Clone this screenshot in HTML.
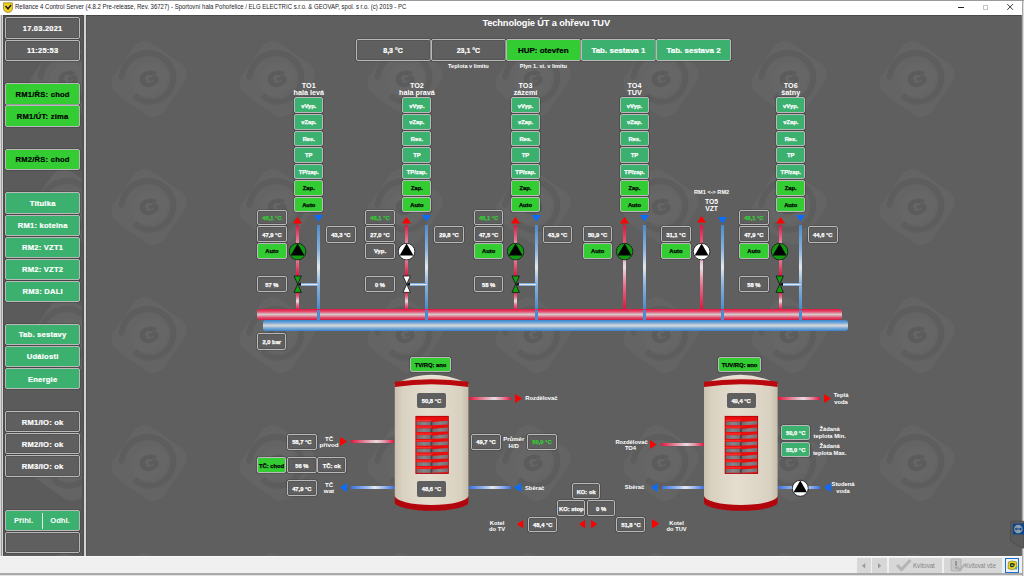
<!DOCTYPE html><html><head><meta charset="utf-8"><style>
html,body{margin:0;padding:0;width:1024px;height:576px;overflow:hidden;background:#5f5f5f;font-family:"Liberation Sans", sans-serif;}
#root{position:relative;width:1024px;height:576px;overflow:hidden;}
</style></head><body><div id="root">
<div style="position:absolute;left:0.00px;top:0.00px;width:1024.00px;height:576.00px;background:#5f5f5f;"></div>
<svg style="position:absolute;left:-29.30000000000001px;top:29px;" width="100" height="100" viewBox="-50 -50 100 100"><g transform="rotate(35)"><rect x="-31" y="-31" width="62" height="62" rx="14" fill="#646464"/></g><path d="M -27.40,-2.40 L -26.99,-4.76 L -26.39,-7.07 L -25.58,-9.31 L -24.59,-11.47 L -23.42,-13.52 L -22.08,-15.46 L -20.57,-17.26 L -18.93,-18.93 L -17.15,-20.43 L -15.25,-21.78 L -13.25,-22.94 L -11.16,-23.93 L -9.00,-24.72 L -6.79,-25.32 L -4.54,-25.73 L -2.27,-25.93 L -0.00,-25.94 L 2.25,-25.75 L 4.47,-25.37 L 6.64,-24.79 L 8.75,-24.03 L 10.77,-23.10 L 12.70,-21.99 L 14.51,-20.72 L 16.20,-19.31 L 17.76,-17.76 L 19.17,-16.09 L 20.42,-14.30 L 21.51,-12.42 L 22.43,-10.46 L 23.17,-8.43 L 23.73,-6.36 L 24.10,-4.25 L 24.29,-2.13 L 24.29,-0.00 L 24.11,2.11 L 23.74,4.19 L 23.20,6.22 L 22.48,8.18 L 21.60,10.07 L 20.56,11.87 L 19.37,13.57 L 18.05,15.14 L 16.59,16.59 L 15.03,17.91 L 13.35,19.07 L 11.60,20.08 L 9.76,20.94 L 7.87,21.62 L 5.93,22.14 L 3.96,22.48 L 1.98,22.65 L 0.00,22.64 L -1.97,22.46 L -3.90,22.12 L -5.79,21.60 L -7.62,20.93 L -9.38,20.10 L -11.05,19.13 L -12.62,18.02" fill="none" stroke="#5d5d5d" stroke-width="6" stroke-linecap="round"/><ellipse cx="0" cy="0" rx="19" ry="16.5" transform="rotate(-20)" fill="#666666"/><text x="0" y="7" text-anchor="middle" font-family="Liberation Sans" font-weight="bold" font-size="21" fill="#5c5c5c" stroke="#5c5c5c" stroke-width="1.6" transform="rotate(-20) scale(1.15,0.95)">G</text></svg>
<svg style="position:absolute;left:98.69999999999999px;top:29px;" width="100" height="100" viewBox="-50 -50 100 100"><g transform="rotate(35)"><rect x="-31" y="-31" width="62" height="62" rx="14" fill="#646464"/></g><path d="M -27.40,-2.40 L -26.99,-4.76 L -26.39,-7.07 L -25.58,-9.31 L -24.59,-11.47 L -23.42,-13.52 L -22.08,-15.46 L -20.57,-17.26 L -18.93,-18.93 L -17.15,-20.43 L -15.25,-21.78 L -13.25,-22.94 L -11.16,-23.93 L -9.00,-24.72 L -6.79,-25.32 L -4.54,-25.73 L -2.27,-25.93 L -0.00,-25.94 L 2.25,-25.75 L 4.47,-25.37 L 6.64,-24.79 L 8.75,-24.03 L 10.77,-23.10 L 12.70,-21.99 L 14.51,-20.72 L 16.20,-19.31 L 17.76,-17.76 L 19.17,-16.09 L 20.42,-14.30 L 21.51,-12.42 L 22.43,-10.46 L 23.17,-8.43 L 23.73,-6.36 L 24.10,-4.25 L 24.29,-2.13 L 24.29,-0.00 L 24.11,2.11 L 23.74,4.19 L 23.20,6.22 L 22.48,8.18 L 21.60,10.07 L 20.56,11.87 L 19.37,13.57 L 18.05,15.14 L 16.59,16.59 L 15.03,17.91 L 13.35,19.07 L 11.60,20.08 L 9.76,20.94 L 7.87,21.62 L 5.93,22.14 L 3.96,22.48 L 1.98,22.65 L 0.00,22.64 L -1.97,22.46 L -3.90,22.12 L -5.79,21.60 L -7.62,20.93 L -9.38,20.10 L -11.05,19.13 L -12.62,18.02" fill="none" stroke="#5d5d5d" stroke-width="6" stroke-linecap="round"/><ellipse cx="0" cy="0" rx="19" ry="16.5" transform="rotate(-20)" fill="#666666"/><text x="0" y="7" text-anchor="middle" font-family="Liberation Sans" font-weight="bold" font-size="21" fill="#5c5c5c" stroke="#5c5c5c" stroke-width="1.6" transform="rotate(-20) scale(1.15,0.95)">G</text></svg>
<svg style="position:absolute;left:226.7px;top:29px;" width="100" height="100" viewBox="-50 -50 100 100"><g transform="rotate(35)"><rect x="-31" y="-31" width="62" height="62" rx="14" fill="#646464"/></g><path d="M -27.40,-2.40 L -26.99,-4.76 L -26.39,-7.07 L -25.58,-9.31 L -24.59,-11.47 L -23.42,-13.52 L -22.08,-15.46 L -20.57,-17.26 L -18.93,-18.93 L -17.15,-20.43 L -15.25,-21.78 L -13.25,-22.94 L -11.16,-23.93 L -9.00,-24.72 L -6.79,-25.32 L -4.54,-25.73 L -2.27,-25.93 L -0.00,-25.94 L 2.25,-25.75 L 4.47,-25.37 L 6.64,-24.79 L 8.75,-24.03 L 10.77,-23.10 L 12.70,-21.99 L 14.51,-20.72 L 16.20,-19.31 L 17.76,-17.76 L 19.17,-16.09 L 20.42,-14.30 L 21.51,-12.42 L 22.43,-10.46 L 23.17,-8.43 L 23.73,-6.36 L 24.10,-4.25 L 24.29,-2.13 L 24.29,-0.00 L 24.11,2.11 L 23.74,4.19 L 23.20,6.22 L 22.48,8.18 L 21.60,10.07 L 20.56,11.87 L 19.37,13.57 L 18.05,15.14 L 16.59,16.59 L 15.03,17.91 L 13.35,19.07 L 11.60,20.08 L 9.76,20.94 L 7.87,21.62 L 5.93,22.14 L 3.96,22.48 L 1.98,22.65 L 0.00,22.64 L -1.97,22.46 L -3.90,22.12 L -5.79,21.60 L -7.62,20.93 L -9.38,20.10 L -11.05,19.13 L -12.62,18.02" fill="none" stroke="#5d5d5d" stroke-width="6" stroke-linecap="round"/><ellipse cx="0" cy="0" rx="19" ry="16.5" transform="rotate(-20)" fill="#666666"/><text x="0" y="7" text-anchor="middle" font-family="Liberation Sans" font-weight="bold" font-size="21" fill="#5c5c5c" stroke="#5c5c5c" stroke-width="1.6" transform="rotate(-20) scale(1.15,0.95)">G</text></svg>
<svg style="position:absolute;left:354.70000000000005px;top:29px;" width="100" height="100" viewBox="-50 -50 100 100"><g transform="rotate(35)"><rect x="-31" y="-31" width="62" height="62" rx="14" fill="#646464"/></g><path d="M -27.40,-2.40 L -26.99,-4.76 L -26.39,-7.07 L -25.58,-9.31 L -24.59,-11.47 L -23.42,-13.52 L -22.08,-15.46 L -20.57,-17.26 L -18.93,-18.93 L -17.15,-20.43 L -15.25,-21.78 L -13.25,-22.94 L -11.16,-23.93 L -9.00,-24.72 L -6.79,-25.32 L -4.54,-25.73 L -2.27,-25.93 L -0.00,-25.94 L 2.25,-25.75 L 4.47,-25.37 L 6.64,-24.79 L 8.75,-24.03 L 10.77,-23.10 L 12.70,-21.99 L 14.51,-20.72 L 16.20,-19.31 L 17.76,-17.76 L 19.17,-16.09 L 20.42,-14.30 L 21.51,-12.42 L 22.43,-10.46 L 23.17,-8.43 L 23.73,-6.36 L 24.10,-4.25 L 24.29,-2.13 L 24.29,-0.00 L 24.11,2.11 L 23.74,4.19 L 23.20,6.22 L 22.48,8.18 L 21.60,10.07 L 20.56,11.87 L 19.37,13.57 L 18.05,15.14 L 16.59,16.59 L 15.03,17.91 L 13.35,19.07 L 11.60,20.08 L 9.76,20.94 L 7.87,21.62 L 5.93,22.14 L 3.96,22.48 L 1.98,22.65 L 0.00,22.64 L -1.97,22.46 L -3.90,22.12 L -5.79,21.60 L -7.62,20.93 L -9.38,20.10 L -11.05,19.13 L -12.62,18.02" fill="none" stroke="#5d5d5d" stroke-width="6" stroke-linecap="round"/><ellipse cx="0" cy="0" rx="19" ry="16.5" transform="rotate(-20)" fill="#666666"/><text x="0" y="7" text-anchor="middle" font-family="Liberation Sans" font-weight="bold" font-size="21" fill="#5c5c5c" stroke="#5c5c5c" stroke-width="1.6" transform="rotate(-20) scale(1.15,0.95)">G</text></svg>
<svg style="position:absolute;left:482.70000000000005px;top:29px;" width="100" height="100" viewBox="-50 -50 100 100"><g transform="rotate(35)"><rect x="-31" y="-31" width="62" height="62" rx="14" fill="#646464"/></g><path d="M -27.40,-2.40 L -26.99,-4.76 L -26.39,-7.07 L -25.58,-9.31 L -24.59,-11.47 L -23.42,-13.52 L -22.08,-15.46 L -20.57,-17.26 L -18.93,-18.93 L -17.15,-20.43 L -15.25,-21.78 L -13.25,-22.94 L -11.16,-23.93 L -9.00,-24.72 L -6.79,-25.32 L -4.54,-25.73 L -2.27,-25.93 L -0.00,-25.94 L 2.25,-25.75 L 4.47,-25.37 L 6.64,-24.79 L 8.75,-24.03 L 10.77,-23.10 L 12.70,-21.99 L 14.51,-20.72 L 16.20,-19.31 L 17.76,-17.76 L 19.17,-16.09 L 20.42,-14.30 L 21.51,-12.42 L 22.43,-10.46 L 23.17,-8.43 L 23.73,-6.36 L 24.10,-4.25 L 24.29,-2.13 L 24.29,-0.00 L 24.11,2.11 L 23.74,4.19 L 23.20,6.22 L 22.48,8.18 L 21.60,10.07 L 20.56,11.87 L 19.37,13.57 L 18.05,15.14 L 16.59,16.59 L 15.03,17.91 L 13.35,19.07 L 11.60,20.08 L 9.76,20.94 L 7.87,21.62 L 5.93,22.14 L 3.96,22.48 L 1.98,22.65 L 0.00,22.64 L -1.97,22.46 L -3.90,22.12 L -5.79,21.60 L -7.62,20.93 L -9.38,20.10 L -11.05,19.13 L -12.62,18.02" fill="none" stroke="#5d5d5d" stroke-width="6" stroke-linecap="round"/><ellipse cx="0" cy="0" rx="19" ry="16.5" transform="rotate(-20)" fill="#666666"/><text x="0" y="7" text-anchor="middle" font-family="Liberation Sans" font-weight="bold" font-size="21" fill="#5c5c5c" stroke="#5c5c5c" stroke-width="1.6" transform="rotate(-20) scale(1.15,0.95)">G</text></svg>
<svg style="position:absolute;left:610.7px;top:29px;" width="100" height="100" viewBox="-50 -50 100 100"><g transform="rotate(35)"><rect x="-31" y="-31" width="62" height="62" rx="14" fill="#646464"/></g><path d="M -27.40,-2.40 L -26.99,-4.76 L -26.39,-7.07 L -25.58,-9.31 L -24.59,-11.47 L -23.42,-13.52 L -22.08,-15.46 L -20.57,-17.26 L -18.93,-18.93 L -17.15,-20.43 L -15.25,-21.78 L -13.25,-22.94 L -11.16,-23.93 L -9.00,-24.72 L -6.79,-25.32 L -4.54,-25.73 L -2.27,-25.93 L -0.00,-25.94 L 2.25,-25.75 L 4.47,-25.37 L 6.64,-24.79 L 8.75,-24.03 L 10.77,-23.10 L 12.70,-21.99 L 14.51,-20.72 L 16.20,-19.31 L 17.76,-17.76 L 19.17,-16.09 L 20.42,-14.30 L 21.51,-12.42 L 22.43,-10.46 L 23.17,-8.43 L 23.73,-6.36 L 24.10,-4.25 L 24.29,-2.13 L 24.29,-0.00 L 24.11,2.11 L 23.74,4.19 L 23.20,6.22 L 22.48,8.18 L 21.60,10.07 L 20.56,11.87 L 19.37,13.57 L 18.05,15.14 L 16.59,16.59 L 15.03,17.91 L 13.35,19.07 L 11.60,20.08 L 9.76,20.94 L 7.87,21.62 L 5.93,22.14 L 3.96,22.48 L 1.98,22.65 L 0.00,22.64 L -1.97,22.46 L -3.90,22.12 L -5.79,21.60 L -7.62,20.93 L -9.38,20.10 L -11.05,19.13 L -12.62,18.02" fill="none" stroke="#5d5d5d" stroke-width="6" stroke-linecap="round"/><ellipse cx="0" cy="0" rx="19" ry="16.5" transform="rotate(-20)" fill="#666666"/><text x="0" y="7" text-anchor="middle" font-family="Liberation Sans" font-weight="bold" font-size="21" fill="#5c5c5c" stroke="#5c5c5c" stroke-width="1.6" transform="rotate(-20) scale(1.15,0.95)">G</text></svg>
<svg style="position:absolute;left:738.7px;top:29px;" width="100" height="100" viewBox="-50 -50 100 100"><g transform="rotate(35)"><rect x="-31" y="-31" width="62" height="62" rx="14" fill="#646464"/></g><path d="M -27.40,-2.40 L -26.99,-4.76 L -26.39,-7.07 L -25.58,-9.31 L -24.59,-11.47 L -23.42,-13.52 L -22.08,-15.46 L -20.57,-17.26 L -18.93,-18.93 L -17.15,-20.43 L -15.25,-21.78 L -13.25,-22.94 L -11.16,-23.93 L -9.00,-24.72 L -6.79,-25.32 L -4.54,-25.73 L -2.27,-25.93 L -0.00,-25.94 L 2.25,-25.75 L 4.47,-25.37 L 6.64,-24.79 L 8.75,-24.03 L 10.77,-23.10 L 12.70,-21.99 L 14.51,-20.72 L 16.20,-19.31 L 17.76,-17.76 L 19.17,-16.09 L 20.42,-14.30 L 21.51,-12.42 L 22.43,-10.46 L 23.17,-8.43 L 23.73,-6.36 L 24.10,-4.25 L 24.29,-2.13 L 24.29,-0.00 L 24.11,2.11 L 23.74,4.19 L 23.20,6.22 L 22.48,8.18 L 21.60,10.07 L 20.56,11.87 L 19.37,13.57 L 18.05,15.14 L 16.59,16.59 L 15.03,17.91 L 13.35,19.07 L 11.60,20.08 L 9.76,20.94 L 7.87,21.62 L 5.93,22.14 L 3.96,22.48 L 1.98,22.65 L 0.00,22.64 L -1.97,22.46 L -3.90,22.12 L -5.79,21.60 L -7.62,20.93 L -9.38,20.10 L -11.05,19.13 L -12.62,18.02" fill="none" stroke="#5d5d5d" stroke-width="6" stroke-linecap="round"/><ellipse cx="0" cy="0" rx="19" ry="16.5" transform="rotate(-20)" fill="#666666"/><text x="0" y="7" text-anchor="middle" font-family="Liberation Sans" font-weight="bold" font-size="21" fill="#5c5c5c" stroke="#5c5c5c" stroke-width="1.6" transform="rotate(-20) scale(1.15,0.95)">G</text></svg>
<svg style="position:absolute;left:866.7px;top:29px;" width="100" height="100" viewBox="-50 -50 100 100"><g transform="rotate(35)"><rect x="-31" y="-31" width="62" height="62" rx="14" fill="#646464"/></g><path d="M -27.40,-2.40 L -26.99,-4.76 L -26.39,-7.07 L -25.58,-9.31 L -24.59,-11.47 L -23.42,-13.52 L -22.08,-15.46 L -20.57,-17.26 L -18.93,-18.93 L -17.15,-20.43 L -15.25,-21.78 L -13.25,-22.94 L -11.16,-23.93 L -9.00,-24.72 L -6.79,-25.32 L -4.54,-25.73 L -2.27,-25.93 L -0.00,-25.94 L 2.25,-25.75 L 4.47,-25.37 L 6.64,-24.79 L 8.75,-24.03 L 10.77,-23.10 L 12.70,-21.99 L 14.51,-20.72 L 16.20,-19.31 L 17.76,-17.76 L 19.17,-16.09 L 20.42,-14.30 L 21.51,-12.42 L 22.43,-10.46 L 23.17,-8.43 L 23.73,-6.36 L 24.10,-4.25 L 24.29,-2.13 L 24.29,-0.00 L 24.11,2.11 L 23.74,4.19 L 23.20,6.22 L 22.48,8.18 L 21.60,10.07 L 20.56,11.87 L 19.37,13.57 L 18.05,15.14 L 16.59,16.59 L 15.03,17.91 L 13.35,19.07 L 11.60,20.08 L 9.76,20.94 L 7.87,21.62 L 5.93,22.14 L 3.96,22.48 L 1.98,22.65 L 0.00,22.64 L -1.97,22.46 L -3.90,22.12 L -5.79,21.60 L -7.62,20.93 L -9.38,20.10 L -11.05,19.13 L -12.62,18.02" fill="none" stroke="#5d5d5d" stroke-width="6" stroke-linecap="round"/><ellipse cx="0" cy="0" rx="19" ry="16.5" transform="rotate(-20)" fill="#666666"/><text x="0" y="7" text-anchor="middle" font-family="Liberation Sans" font-weight="bold" font-size="21" fill="#5c5c5c" stroke="#5c5c5c" stroke-width="1.6" transform="rotate(-20) scale(1.15,0.95)">G</text></svg>
<svg style="position:absolute;left:-29.30000000000001px;top:157px;" width="100" height="100" viewBox="-50 -50 100 100"><g transform="rotate(35)"><rect x="-31" y="-31" width="62" height="62" rx="14" fill="#646464"/></g><path d="M -27.40,-2.40 L -26.99,-4.76 L -26.39,-7.07 L -25.58,-9.31 L -24.59,-11.47 L -23.42,-13.52 L -22.08,-15.46 L -20.57,-17.26 L -18.93,-18.93 L -17.15,-20.43 L -15.25,-21.78 L -13.25,-22.94 L -11.16,-23.93 L -9.00,-24.72 L -6.79,-25.32 L -4.54,-25.73 L -2.27,-25.93 L -0.00,-25.94 L 2.25,-25.75 L 4.47,-25.37 L 6.64,-24.79 L 8.75,-24.03 L 10.77,-23.10 L 12.70,-21.99 L 14.51,-20.72 L 16.20,-19.31 L 17.76,-17.76 L 19.17,-16.09 L 20.42,-14.30 L 21.51,-12.42 L 22.43,-10.46 L 23.17,-8.43 L 23.73,-6.36 L 24.10,-4.25 L 24.29,-2.13 L 24.29,-0.00 L 24.11,2.11 L 23.74,4.19 L 23.20,6.22 L 22.48,8.18 L 21.60,10.07 L 20.56,11.87 L 19.37,13.57 L 18.05,15.14 L 16.59,16.59 L 15.03,17.91 L 13.35,19.07 L 11.60,20.08 L 9.76,20.94 L 7.87,21.62 L 5.93,22.14 L 3.96,22.48 L 1.98,22.65 L 0.00,22.64 L -1.97,22.46 L -3.90,22.12 L -5.79,21.60 L -7.62,20.93 L -9.38,20.10 L -11.05,19.13 L -12.62,18.02" fill="none" stroke="#5d5d5d" stroke-width="6" stroke-linecap="round"/><ellipse cx="0" cy="0" rx="19" ry="16.5" transform="rotate(-20)" fill="#666666"/><text x="0" y="7" text-anchor="middle" font-family="Liberation Sans" font-weight="bold" font-size="21" fill="#5c5c5c" stroke="#5c5c5c" stroke-width="1.6" transform="rotate(-20) scale(1.15,0.95)">G</text></svg>
<svg style="position:absolute;left:98.69999999999999px;top:157px;" width="100" height="100" viewBox="-50 -50 100 100"><g transform="rotate(35)"><rect x="-31" y="-31" width="62" height="62" rx="14" fill="#646464"/></g><path d="M -27.40,-2.40 L -26.99,-4.76 L -26.39,-7.07 L -25.58,-9.31 L -24.59,-11.47 L -23.42,-13.52 L -22.08,-15.46 L -20.57,-17.26 L -18.93,-18.93 L -17.15,-20.43 L -15.25,-21.78 L -13.25,-22.94 L -11.16,-23.93 L -9.00,-24.72 L -6.79,-25.32 L -4.54,-25.73 L -2.27,-25.93 L -0.00,-25.94 L 2.25,-25.75 L 4.47,-25.37 L 6.64,-24.79 L 8.75,-24.03 L 10.77,-23.10 L 12.70,-21.99 L 14.51,-20.72 L 16.20,-19.31 L 17.76,-17.76 L 19.17,-16.09 L 20.42,-14.30 L 21.51,-12.42 L 22.43,-10.46 L 23.17,-8.43 L 23.73,-6.36 L 24.10,-4.25 L 24.29,-2.13 L 24.29,-0.00 L 24.11,2.11 L 23.74,4.19 L 23.20,6.22 L 22.48,8.18 L 21.60,10.07 L 20.56,11.87 L 19.37,13.57 L 18.05,15.14 L 16.59,16.59 L 15.03,17.91 L 13.35,19.07 L 11.60,20.08 L 9.76,20.94 L 7.87,21.62 L 5.93,22.14 L 3.96,22.48 L 1.98,22.65 L 0.00,22.64 L -1.97,22.46 L -3.90,22.12 L -5.79,21.60 L -7.62,20.93 L -9.38,20.10 L -11.05,19.13 L -12.62,18.02" fill="none" stroke="#5d5d5d" stroke-width="6" stroke-linecap="round"/><ellipse cx="0" cy="0" rx="19" ry="16.5" transform="rotate(-20)" fill="#666666"/><text x="0" y="7" text-anchor="middle" font-family="Liberation Sans" font-weight="bold" font-size="21" fill="#5c5c5c" stroke="#5c5c5c" stroke-width="1.6" transform="rotate(-20) scale(1.15,0.95)">G</text></svg>
<svg style="position:absolute;left:226.7px;top:157px;" width="100" height="100" viewBox="-50 -50 100 100"><g transform="rotate(35)"><rect x="-31" y="-31" width="62" height="62" rx="14" fill="#646464"/></g><path d="M -27.40,-2.40 L -26.99,-4.76 L -26.39,-7.07 L -25.58,-9.31 L -24.59,-11.47 L -23.42,-13.52 L -22.08,-15.46 L -20.57,-17.26 L -18.93,-18.93 L -17.15,-20.43 L -15.25,-21.78 L -13.25,-22.94 L -11.16,-23.93 L -9.00,-24.72 L -6.79,-25.32 L -4.54,-25.73 L -2.27,-25.93 L -0.00,-25.94 L 2.25,-25.75 L 4.47,-25.37 L 6.64,-24.79 L 8.75,-24.03 L 10.77,-23.10 L 12.70,-21.99 L 14.51,-20.72 L 16.20,-19.31 L 17.76,-17.76 L 19.17,-16.09 L 20.42,-14.30 L 21.51,-12.42 L 22.43,-10.46 L 23.17,-8.43 L 23.73,-6.36 L 24.10,-4.25 L 24.29,-2.13 L 24.29,-0.00 L 24.11,2.11 L 23.74,4.19 L 23.20,6.22 L 22.48,8.18 L 21.60,10.07 L 20.56,11.87 L 19.37,13.57 L 18.05,15.14 L 16.59,16.59 L 15.03,17.91 L 13.35,19.07 L 11.60,20.08 L 9.76,20.94 L 7.87,21.62 L 5.93,22.14 L 3.96,22.48 L 1.98,22.65 L 0.00,22.64 L -1.97,22.46 L -3.90,22.12 L -5.79,21.60 L -7.62,20.93 L -9.38,20.10 L -11.05,19.13 L -12.62,18.02" fill="none" stroke="#5d5d5d" stroke-width="6" stroke-linecap="round"/><ellipse cx="0" cy="0" rx="19" ry="16.5" transform="rotate(-20)" fill="#666666"/><text x="0" y="7" text-anchor="middle" font-family="Liberation Sans" font-weight="bold" font-size="21" fill="#5c5c5c" stroke="#5c5c5c" stroke-width="1.6" transform="rotate(-20) scale(1.15,0.95)">G</text></svg>
<svg style="position:absolute;left:354.70000000000005px;top:157px;" width="100" height="100" viewBox="-50 -50 100 100"><g transform="rotate(35)"><rect x="-31" y="-31" width="62" height="62" rx="14" fill="#646464"/></g><path d="M -27.40,-2.40 L -26.99,-4.76 L -26.39,-7.07 L -25.58,-9.31 L -24.59,-11.47 L -23.42,-13.52 L -22.08,-15.46 L -20.57,-17.26 L -18.93,-18.93 L -17.15,-20.43 L -15.25,-21.78 L -13.25,-22.94 L -11.16,-23.93 L -9.00,-24.72 L -6.79,-25.32 L -4.54,-25.73 L -2.27,-25.93 L -0.00,-25.94 L 2.25,-25.75 L 4.47,-25.37 L 6.64,-24.79 L 8.75,-24.03 L 10.77,-23.10 L 12.70,-21.99 L 14.51,-20.72 L 16.20,-19.31 L 17.76,-17.76 L 19.17,-16.09 L 20.42,-14.30 L 21.51,-12.42 L 22.43,-10.46 L 23.17,-8.43 L 23.73,-6.36 L 24.10,-4.25 L 24.29,-2.13 L 24.29,-0.00 L 24.11,2.11 L 23.74,4.19 L 23.20,6.22 L 22.48,8.18 L 21.60,10.07 L 20.56,11.87 L 19.37,13.57 L 18.05,15.14 L 16.59,16.59 L 15.03,17.91 L 13.35,19.07 L 11.60,20.08 L 9.76,20.94 L 7.87,21.62 L 5.93,22.14 L 3.96,22.48 L 1.98,22.65 L 0.00,22.64 L -1.97,22.46 L -3.90,22.12 L -5.79,21.60 L -7.62,20.93 L -9.38,20.10 L -11.05,19.13 L -12.62,18.02" fill="none" stroke="#5d5d5d" stroke-width="6" stroke-linecap="round"/><ellipse cx="0" cy="0" rx="19" ry="16.5" transform="rotate(-20)" fill="#666666"/><text x="0" y="7" text-anchor="middle" font-family="Liberation Sans" font-weight="bold" font-size="21" fill="#5c5c5c" stroke="#5c5c5c" stroke-width="1.6" transform="rotate(-20) scale(1.15,0.95)">G</text></svg>
<svg style="position:absolute;left:482.70000000000005px;top:157px;" width="100" height="100" viewBox="-50 -50 100 100"><g transform="rotate(35)"><rect x="-31" y="-31" width="62" height="62" rx="14" fill="#646464"/></g><path d="M -27.40,-2.40 L -26.99,-4.76 L -26.39,-7.07 L -25.58,-9.31 L -24.59,-11.47 L -23.42,-13.52 L -22.08,-15.46 L -20.57,-17.26 L -18.93,-18.93 L -17.15,-20.43 L -15.25,-21.78 L -13.25,-22.94 L -11.16,-23.93 L -9.00,-24.72 L -6.79,-25.32 L -4.54,-25.73 L -2.27,-25.93 L -0.00,-25.94 L 2.25,-25.75 L 4.47,-25.37 L 6.64,-24.79 L 8.75,-24.03 L 10.77,-23.10 L 12.70,-21.99 L 14.51,-20.72 L 16.20,-19.31 L 17.76,-17.76 L 19.17,-16.09 L 20.42,-14.30 L 21.51,-12.42 L 22.43,-10.46 L 23.17,-8.43 L 23.73,-6.36 L 24.10,-4.25 L 24.29,-2.13 L 24.29,-0.00 L 24.11,2.11 L 23.74,4.19 L 23.20,6.22 L 22.48,8.18 L 21.60,10.07 L 20.56,11.87 L 19.37,13.57 L 18.05,15.14 L 16.59,16.59 L 15.03,17.91 L 13.35,19.07 L 11.60,20.08 L 9.76,20.94 L 7.87,21.62 L 5.93,22.14 L 3.96,22.48 L 1.98,22.65 L 0.00,22.64 L -1.97,22.46 L -3.90,22.12 L -5.79,21.60 L -7.62,20.93 L -9.38,20.10 L -11.05,19.13 L -12.62,18.02" fill="none" stroke="#5d5d5d" stroke-width="6" stroke-linecap="round"/><ellipse cx="0" cy="0" rx="19" ry="16.5" transform="rotate(-20)" fill="#666666"/><text x="0" y="7" text-anchor="middle" font-family="Liberation Sans" font-weight="bold" font-size="21" fill="#5c5c5c" stroke="#5c5c5c" stroke-width="1.6" transform="rotate(-20) scale(1.15,0.95)">G</text></svg>
<svg style="position:absolute;left:610.7px;top:157px;" width="100" height="100" viewBox="-50 -50 100 100"><g transform="rotate(35)"><rect x="-31" y="-31" width="62" height="62" rx="14" fill="#646464"/></g><path d="M -27.40,-2.40 L -26.99,-4.76 L -26.39,-7.07 L -25.58,-9.31 L -24.59,-11.47 L -23.42,-13.52 L -22.08,-15.46 L -20.57,-17.26 L -18.93,-18.93 L -17.15,-20.43 L -15.25,-21.78 L -13.25,-22.94 L -11.16,-23.93 L -9.00,-24.72 L -6.79,-25.32 L -4.54,-25.73 L -2.27,-25.93 L -0.00,-25.94 L 2.25,-25.75 L 4.47,-25.37 L 6.64,-24.79 L 8.75,-24.03 L 10.77,-23.10 L 12.70,-21.99 L 14.51,-20.72 L 16.20,-19.31 L 17.76,-17.76 L 19.17,-16.09 L 20.42,-14.30 L 21.51,-12.42 L 22.43,-10.46 L 23.17,-8.43 L 23.73,-6.36 L 24.10,-4.25 L 24.29,-2.13 L 24.29,-0.00 L 24.11,2.11 L 23.74,4.19 L 23.20,6.22 L 22.48,8.18 L 21.60,10.07 L 20.56,11.87 L 19.37,13.57 L 18.05,15.14 L 16.59,16.59 L 15.03,17.91 L 13.35,19.07 L 11.60,20.08 L 9.76,20.94 L 7.87,21.62 L 5.93,22.14 L 3.96,22.48 L 1.98,22.65 L 0.00,22.64 L -1.97,22.46 L -3.90,22.12 L -5.79,21.60 L -7.62,20.93 L -9.38,20.10 L -11.05,19.13 L -12.62,18.02" fill="none" stroke="#5d5d5d" stroke-width="6" stroke-linecap="round"/><ellipse cx="0" cy="0" rx="19" ry="16.5" transform="rotate(-20)" fill="#666666"/><text x="0" y="7" text-anchor="middle" font-family="Liberation Sans" font-weight="bold" font-size="21" fill="#5c5c5c" stroke="#5c5c5c" stroke-width="1.6" transform="rotate(-20) scale(1.15,0.95)">G</text></svg>
<svg style="position:absolute;left:738.7px;top:157px;" width="100" height="100" viewBox="-50 -50 100 100"><g transform="rotate(35)"><rect x="-31" y="-31" width="62" height="62" rx="14" fill="#646464"/></g><path d="M -27.40,-2.40 L -26.99,-4.76 L -26.39,-7.07 L -25.58,-9.31 L -24.59,-11.47 L -23.42,-13.52 L -22.08,-15.46 L -20.57,-17.26 L -18.93,-18.93 L -17.15,-20.43 L -15.25,-21.78 L -13.25,-22.94 L -11.16,-23.93 L -9.00,-24.72 L -6.79,-25.32 L -4.54,-25.73 L -2.27,-25.93 L -0.00,-25.94 L 2.25,-25.75 L 4.47,-25.37 L 6.64,-24.79 L 8.75,-24.03 L 10.77,-23.10 L 12.70,-21.99 L 14.51,-20.72 L 16.20,-19.31 L 17.76,-17.76 L 19.17,-16.09 L 20.42,-14.30 L 21.51,-12.42 L 22.43,-10.46 L 23.17,-8.43 L 23.73,-6.36 L 24.10,-4.25 L 24.29,-2.13 L 24.29,-0.00 L 24.11,2.11 L 23.74,4.19 L 23.20,6.22 L 22.48,8.18 L 21.60,10.07 L 20.56,11.87 L 19.37,13.57 L 18.05,15.14 L 16.59,16.59 L 15.03,17.91 L 13.35,19.07 L 11.60,20.08 L 9.76,20.94 L 7.87,21.62 L 5.93,22.14 L 3.96,22.48 L 1.98,22.65 L 0.00,22.64 L -1.97,22.46 L -3.90,22.12 L -5.79,21.60 L -7.62,20.93 L -9.38,20.10 L -11.05,19.13 L -12.62,18.02" fill="none" stroke="#5d5d5d" stroke-width="6" stroke-linecap="round"/><ellipse cx="0" cy="0" rx="19" ry="16.5" transform="rotate(-20)" fill="#666666"/><text x="0" y="7" text-anchor="middle" font-family="Liberation Sans" font-weight="bold" font-size="21" fill="#5c5c5c" stroke="#5c5c5c" stroke-width="1.6" transform="rotate(-20) scale(1.15,0.95)">G</text></svg>
<svg style="position:absolute;left:866.7px;top:157px;" width="100" height="100" viewBox="-50 -50 100 100"><g transform="rotate(35)"><rect x="-31" y="-31" width="62" height="62" rx="14" fill="#646464"/></g><path d="M -27.40,-2.40 L -26.99,-4.76 L -26.39,-7.07 L -25.58,-9.31 L -24.59,-11.47 L -23.42,-13.52 L -22.08,-15.46 L -20.57,-17.26 L -18.93,-18.93 L -17.15,-20.43 L -15.25,-21.78 L -13.25,-22.94 L -11.16,-23.93 L -9.00,-24.72 L -6.79,-25.32 L -4.54,-25.73 L -2.27,-25.93 L -0.00,-25.94 L 2.25,-25.75 L 4.47,-25.37 L 6.64,-24.79 L 8.75,-24.03 L 10.77,-23.10 L 12.70,-21.99 L 14.51,-20.72 L 16.20,-19.31 L 17.76,-17.76 L 19.17,-16.09 L 20.42,-14.30 L 21.51,-12.42 L 22.43,-10.46 L 23.17,-8.43 L 23.73,-6.36 L 24.10,-4.25 L 24.29,-2.13 L 24.29,-0.00 L 24.11,2.11 L 23.74,4.19 L 23.20,6.22 L 22.48,8.18 L 21.60,10.07 L 20.56,11.87 L 19.37,13.57 L 18.05,15.14 L 16.59,16.59 L 15.03,17.91 L 13.35,19.07 L 11.60,20.08 L 9.76,20.94 L 7.87,21.62 L 5.93,22.14 L 3.96,22.48 L 1.98,22.65 L 0.00,22.64 L -1.97,22.46 L -3.90,22.12 L -5.79,21.60 L -7.62,20.93 L -9.38,20.10 L -11.05,19.13 L -12.62,18.02" fill="none" stroke="#5d5d5d" stroke-width="6" stroke-linecap="round"/><ellipse cx="0" cy="0" rx="19" ry="16.5" transform="rotate(-20)" fill="#666666"/><text x="0" y="7" text-anchor="middle" font-family="Liberation Sans" font-weight="bold" font-size="21" fill="#5c5c5c" stroke="#5c5c5c" stroke-width="1.6" transform="rotate(-20) scale(1.15,0.95)">G</text></svg>
<svg style="position:absolute;left:-29.30000000000001px;top:285px;" width="100" height="100" viewBox="-50 -50 100 100"><g transform="rotate(35)"><rect x="-31" y="-31" width="62" height="62" rx="14" fill="#646464"/></g><path d="M -27.40,-2.40 L -26.99,-4.76 L -26.39,-7.07 L -25.58,-9.31 L -24.59,-11.47 L -23.42,-13.52 L -22.08,-15.46 L -20.57,-17.26 L -18.93,-18.93 L -17.15,-20.43 L -15.25,-21.78 L -13.25,-22.94 L -11.16,-23.93 L -9.00,-24.72 L -6.79,-25.32 L -4.54,-25.73 L -2.27,-25.93 L -0.00,-25.94 L 2.25,-25.75 L 4.47,-25.37 L 6.64,-24.79 L 8.75,-24.03 L 10.77,-23.10 L 12.70,-21.99 L 14.51,-20.72 L 16.20,-19.31 L 17.76,-17.76 L 19.17,-16.09 L 20.42,-14.30 L 21.51,-12.42 L 22.43,-10.46 L 23.17,-8.43 L 23.73,-6.36 L 24.10,-4.25 L 24.29,-2.13 L 24.29,-0.00 L 24.11,2.11 L 23.74,4.19 L 23.20,6.22 L 22.48,8.18 L 21.60,10.07 L 20.56,11.87 L 19.37,13.57 L 18.05,15.14 L 16.59,16.59 L 15.03,17.91 L 13.35,19.07 L 11.60,20.08 L 9.76,20.94 L 7.87,21.62 L 5.93,22.14 L 3.96,22.48 L 1.98,22.65 L 0.00,22.64 L -1.97,22.46 L -3.90,22.12 L -5.79,21.60 L -7.62,20.93 L -9.38,20.10 L -11.05,19.13 L -12.62,18.02" fill="none" stroke="#5d5d5d" stroke-width="6" stroke-linecap="round"/><ellipse cx="0" cy="0" rx="19" ry="16.5" transform="rotate(-20)" fill="#666666"/><text x="0" y="7" text-anchor="middle" font-family="Liberation Sans" font-weight="bold" font-size="21" fill="#5c5c5c" stroke="#5c5c5c" stroke-width="1.6" transform="rotate(-20) scale(1.15,0.95)">G</text></svg>
<svg style="position:absolute;left:98.69999999999999px;top:285px;" width="100" height="100" viewBox="-50 -50 100 100"><g transform="rotate(35)"><rect x="-31" y="-31" width="62" height="62" rx="14" fill="#646464"/></g><path d="M -27.40,-2.40 L -26.99,-4.76 L -26.39,-7.07 L -25.58,-9.31 L -24.59,-11.47 L -23.42,-13.52 L -22.08,-15.46 L -20.57,-17.26 L -18.93,-18.93 L -17.15,-20.43 L -15.25,-21.78 L -13.25,-22.94 L -11.16,-23.93 L -9.00,-24.72 L -6.79,-25.32 L -4.54,-25.73 L -2.27,-25.93 L -0.00,-25.94 L 2.25,-25.75 L 4.47,-25.37 L 6.64,-24.79 L 8.75,-24.03 L 10.77,-23.10 L 12.70,-21.99 L 14.51,-20.72 L 16.20,-19.31 L 17.76,-17.76 L 19.17,-16.09 L 20.42,-14.30 L 21.51,-12.42 L 22.43,-10.46 L 23.17,-8.43 L 23.73,-6.36 L 24.10,-4.25 L 24.29,-2.13 L 24.29,-0.00 L 24.11,2.11 L 23.74,4.19 L 23.20,6.22 L 22.48,8.18 L 21.60,10.07 L 20.56,11.87 L 19.37,13.57 L 18.05,15.14 L 16.59,16.59 L 15.03,17.91 L 13.35,19.07 L 11.60,20.08 L 9.76,20.94 L 7.87,21.62 L 5.93,22.14 L 3.96,22.48 L 1.98,22.65 L 0.00,22.64 L -1.97,22.46 L -3.90,22.12 L -5.79,21.60 L -7.62,20.93 L -9.38,20.10 L -11.05,19.13 L -12.62,18.02" fill="none" stroke="#5d5d5d" stroke-width="6" stroke-linecap="round"/><ellipse cx="0" cy="0" rx="19" ry="16.5" transform="rotate(-20)" fill="#666666"/><text x="0" y="7" text-anchor="middle" font-family="Liberation Sans" font-weight="bold" font-size="21" fill="#5c5c5c" stroke="#5c5c5c" stroke-width="1.6" transform="rotate(-20) scale(1.15,0.95)">G</text></svg>
<svg style="position:absolute;left:226.7px;top:285px;" width="100" height="100" viewBox="-50 -50 100 100"><g transform="rotate(35)"><rect x="-31" y="-31" width="62" height="62" rx="14" fill="#646464"/></g><path d="M -27.40,-2.40 L -26.99,-4.76 L -26.39,-7.07 L -25.58,-9.31 L -24.59,-11.47 L -23.42,-13.52 L -22.08,-15.46 L -20.57,-17.26 L -18.93,-18.93 L -17.15,-20.43 L -15.25,-21.78 L -13.25,-22.94 L -11.16,-23.93 L -9.00,-24.72 L -6.79,-25.32 L -4.54,-25.73 L -2.27,-25.93 L -0.00,-25.94 L 2.25,-25.75 L 4.47,-25.37 L 6.64,-24.79 L 8.75,-24.03 L 10.77,-23.10 L 12.70,-21.99 L 14.51,-20.72 L 16.20,-19.31 L 17.76,-17.76 L 19.17,-16.09 L 20.42,-14.30 L 21.51,-12.42 L 22.43,-10.46 L 23.17,-8.43 L 23.73,-6.36 L 24.10,-4.25 L 24.29,-2.13 L 24.29,-0.00 L 24.11,2.11 L 23.74,4.19 L 23.20,6.22 L 22.48,8.18 L 21.60,10.07 L 20.56,11.87 L 19.37,13.57 L 18.05,15.14 L 16.59,16.59 L 15.03,17.91 L 13.35,19.07 L 11.60,20.08 L 9.76,20.94 L 7.87,21.62 L 5.93,22.14 L 3.96,22.48 L 1.98,22.65 L 0.00,22.64 L -1.97,22.46 L -3.90,22.12 L -5.79,21.60 L -7.62,20.93 L -9.38,20.10 L -11.05,19.13 L -12.62,18.02" fill="none" stroke="#5d5d5d" stroke-width="6" stroke-linecap="round"/><ellipse cx="0" cy="0" rx="19" ry="16.5" transform="rotate(-20)" fill="#666666"/><text x="0" y="7" text-anchor="middle" font-family="Liberation Sans" font-weight="bold" font-size="21" fill="#5c5c5c" stroke="#5c5c5c" stroke-width="1.6" transform="rotate(-20) scale(1.15,0.95)">G</text></svg>
<svg style="position:absolute;left:354.70000000000005px;top:285px;" width="100" height="100" viewBox="-50 -50 100 100"><g transform="rotate(35)"><rect x="-31" y="-31" width="62" height="62" rx="14" fill="#646464"/></g><path d="M -27.40,-2.40 L -26.99,-4.76 L -26.39,-7.07 L -25.58,-9.31 L -24.59,-11.47 L -23.42,-13.52 L -22.08,-15.46 L -20.57,-17.26 L -18.93,-18.93 L -17.15,-20.43 L -15.25,-21.78 L -13.25,-22.94 L -11.16,-23.93 L -9.00,-24.72 L -6.79,-25.32 L -4.54,-25.73 L -2.27,-25.93 L -0.00,-25.94 L 2.25,-25.75 L 4.47,-25.37 L 6.64,-24.79 L 8.75,-24.03 L 10.77,-23.10 L 12.70,-21.99 L 14.51,-20.72 L 16.20,-19.31 L 17.76,-17.76 L 19.17,-16.09 L 20.42,-14.30 L 21.51,-12.42 L 22.43,-10.46 L 23.17,-8.43 L 23.73,-6.36 L 24.10,-4.25 L 24.29,-2.13 L 24.29,-0.00 L 24.11,2.11 L 23.74,4.19 L 23.20,6.22 L 22.48,8.18 L 21.60,10.07 L 20.56,11.87 L 19.37,13.57 L 18.05,15.14 L 16.59,16.59 L 15.03,17.91 L 13.35,19.07 L 11.60,20.08 L 9.76,20.94 L 7.87,21.62 L 5.93,22.14 L 3.96,22.48 L 1.98,22.65 L 0.00,22.64 L -1.97,22.46 L -3.90,22.12 L -5.79,21.60 L -7.62,20.93 L -9.38,20.10 L -11.05,19.13 L -12.62,18.02" fill="none" stroke="#5d5d5d" stroke-width="6" stroke-linecap="round"/><ellipse cx="0" cy="0" rx="19" ry="16.5" transform="rotate(-20)" fill="#666666"/><text x="0" y="7" text-anchor="middle" font-family="Liberation Sans" font-weight="bold" font-size="21" fill="#5c5c5c" stroke="#5c5c5c" stroke-width="1.6" transform="rotate(-20) scale(1.15,0.95)">G</text></svg>
<svg style="position:absolute;left:482.70000000000005px;top:285px;" width="100" height="100" viewBox="-50 -50 100 100"><g transform="rotate(35)"><rect x="-31" y="-31" width="62" height="62" rx="14" fill="#646464"/></g><path d="M -27.40,-2.40 L -26.99,-4.76 L -26.39,-7.07 L -25.58,-9.31 L -24.59,-11.47 L -23.42,-13.52 L -22.08,-15.46 L -20.57,-17.26 L -18.93,-18.93 L -17.15,-20.43 L -15.25,-21.78 L -13.25,-22.94 L -11.16,-23.93 L -9.00,-24.72 L -6.79,-25.32 L -4.54,-25.73 L -2.27,-25.93 L -0.00,-25.94 L 2.25,-25.75 L 4.47,-25.37 L 6.64,-24.79 L 8.75,-24.03 L 10.77,-23.10 L 12.70,-21.99 L 14.51,-20.72 L 16.20,-19.31 L 17.76,-17.76 L 19.17,-16.09 L 20.42,-14.30 L 21.51,-12.42 L 22.43,-10.46 L 23.17,-8.43 L 23.73,-6.36 L 24.10,-4.25 L 24.29,-2.13 L 24.29,-0.00 L 24.11,2.11 L 23.74,4.19 L 23.20,6.22 L 22.48,8.18 L 21.60,10.07 L 20.56,11.87 L 19.37,13.57 L 18.05,15.14 L 16.59,16.59 L 15.03,17.91 L 13.35,19.07 L 11.60,20.08 L 9.76,20.94 L 7.87,21.62 L 5.93,22.14 L 3.96,22.48 L 1.98,22.65 L 0.00,22.64 L -1.97,22.46 L -3.90,22.12 L -5.79,21.60 L -7.62,20.93 L -9.38,20.10 L -11.05,19.13 L -12.62,18.02" fill="none" stroke="#5d5d5d" stroke-width="6" stroke-linecap="round"/><ellipse cx="0" cy="0" rx="19" ry="16.5" transform="rotate(-20)" fill="#666666"/><text x="0" y="7" text-anchor="middle" font-family="Liberation Sans" font-weight="bold" font-size="21" fill="#5c5c5c" stroke="#5c5c5c" stroke-width="1.6" transform="rotate(-20) scale(1.15,0.95)">G</text></svg>
<svg style="position:absolute;left:610.7px;top:285px;" width="100" height="100" viewBox="-50 -50 100 100"><g transform="rotate(35)"><rect x="-31" y="-31" width="62" height="62" rx="14" fill="#646464"/></g><path d="M -27.40,-2.40 L -26.99,-4.76 L -26.39,-7.07 L -25.58,-9.31 L -24.59,-11.47 L -23.42,-13.52 L -22.08,-15.46 L -20.57,-17.26 L -18.93,-18.93 L -17.15,-20.43 L -15.25,-21.78 L -13.25,-22.94 L -11.16,-23.93 L -9.00,-24.72 L -6.79,-25.32 L -4.54,-25.73 L -2.27,-25.93 L -0.00,-25.94 L 2.25,-25.75 L 4.47,-25.37 L 6.64,-24.79 L 8.75,-24.03 L 10.77,-23.10 L 12.70,-21.99 L 14.51,-20.72 L 16.20,-19.31 L 17.76,-17.76 L 19.17,-16.09 L 20.42,-14.30 L 21.51,-12.42 L 22.43,-10.46 L 23.17,-8.43 L 23.73,-6.36 L 24.10,-4.25 L 24.29,-2.13 L 24.29,-0.00 L 24.11,2.11 L 23.74,4.19 L 23.20,6.22 L 22.48,8.18 L 21.60,10.07 L 20.56,11.87 L 19.37,13.57 L 18.05,15.14 L 16.59,16.59 L 15.03,17.91 L 13.35,19.07 L 11.60,20.08 L 9.76,20.94 L 7.87,21.62 L 5.93,22.14 L 3.96,22.48 L 1.98,22.65 L 0.00,22.64 L -1.97,22.46 L -3.90,22.12 L -5.79,21.60 L -7.62,20.93 L -9.38,20.10 L -11.05,19.13 L -12.62,18.02" fill="none" stroke="#5d5d5d" stroke-width="6" stroke-linecap="round"/><ellipse cx="0" cy="0" rx="19" ry="16.5" transform="rotate(-20)" fill="#666666"/><text x="0" y="7" text-anchor="middle" font-family="Liberation Sans" font-weight="bold" font-size="21" fill="#5c5c5c" stroke="#5c5c5c" stroke-width="1.6" transform="rotate(-20) scale(1.15,0.95)">G</text></svg>
<svg style="position:absolute;left:738.7px;top:285px;" width="100" height="100" viewBox="-50 -50 100 100"><g transform="rotate(35)"><rect x="-31" y="-31" width="62" height="62" rx="14" fill="#646464"/></g><path d="M -27.40,-2.40 L -26.99,-4.76 L -26.39,-7.07 L -25.58,-9.31 L -24.59,-11.47 L -23.42,-13.52 L -22.08,-15.46 L -20.57,-17.26 L -18.93,-18.93 L -17.15,-20.43 L -15.25,-21.78 L -13.25,-22.94 L -11.16,-23.93 L -9.00,-24.72 L -6.79,-25.32 L -4.54,-25.73 L -2.27,-25.93 L -0.00,-25.94 L 2.25,-25.75 L 4.47,-25.37 L 6.64,-24.79 L 8.75,-24.03 L 10.77,-23.10 L 12.70,-21.99 L 14.51,-20.72 L 16.20,-19.31 L 17.76,-17.76 L 19.17,-16.09 L 20.42,-14.30 L 21.51,-12.42 L 22.43,-10.46 L 23.17,-8.43 L 23.73,-6.36 L 24.10,-4.25 L 24.29,-2.13 L 24.29,-0.00 L 24.11,2.11 L 23.74,4.19 L 23.20,6.22 L 22.48,8.18 L 21.60,10.07 L 20.56,11.87 L 19.37,13.57 L 18.05,15.14 L 16.59,16.59 L 15.03,17.91 L 13.35,19.07 L 11.60,20.08 L 9.76,20.94 L 7.87,21.62 L 5.93,22.14 L 3.96,22.48 L 1.98,22.65 L 0.00,22.64 L -1.97,22.46 L -3.90,22.12 L -5.79,21.60 L -7.62,20.93 L -9.38,20.10 L -11.05,19.13 L -12.62,18.02" fill="none" stroke="#5d5d5d" stroke-width="6" stroke-linecap="round"/><ellipse cx="0" cy="0" rx="19" ry="16.5" transform="rotate(-20)" fill="#666666"/><text x="0" y="7" text-anchor="middle" font-family="Liberation Sans" font-weight="bold" font-size="21" fill="#5c5c5c" stroke="#5c5c5c" stroke-width="1.6" transform="rotate(-20) scale(1.15,0.95)">G</text></svg>
<svg style="position:absolute;left:866.7px;top:285px;" width="100" height="100" viewBox="-50 -50 100 100"><g transform="rotate(35)"><rect x="-31" y="-31" width="62" height="62" rx="14" fill="#646464"/></g><path d="M -27.40,-2.40 L -26.99,-4.76 L -26.39,-7.07 L -25.58,-9.31 L -24.59,-11.47 L -23.42,-13.52 L -22.08,-15.46 L -20.57,-17.26 L -18.93,-18.93 L -17.15,-20.43 L -15.25,-21.78 L -13.25,-22.94 L -11.16,-23.93 L -9.00,-24.72 L -6.79,-25.32 L -4.54,-25.73 L -2.27,-25.93 L -0.00,-25.94 L 2.25,-25.75 L 4.47,-25.37 L 6.64,-24.79 L 8.75,-24.03 L 10.77,-23.10 L 12.70,-21.99 L 14.51,-20.72 L 16.20,-19.31 L 17.76,-17.76 L 19.17,-16.09 L 20.42,-14.30 L 21.51,-12.42 L 22.43,-10.46 L 23.17,-8.43 L 23.73,-6.36 L 24.10,-4.25 L 24.29,-2.13 L 24.29,-0.00 L 24.11,2.11 L 23.74,4.19 L 23.20,6.22 L 22.48,8.18 L 21.60,10.07 L 20.56,11.87 L 19.37,13.57 L 18.05,15.14 L 16.59,16.59 L 15.03,17.91 L 13.35,19.07 L 11.60,20.08 L 9.76,20.94 L 7.87,21.62 L 5.93,22.14 L 3.96,22.48 L 1.98,22.65 L 0.00,22.64 L -1.97,22.46 L -3.90,22.12 L -5.79,21.60 L -7.62,20.93 L -9.38,20.10 L -11.05,19.13 L -12.62,18.02" fill="none" stroke="#5d5d5d" stroke-width="6" stroke-linecap="round"/><ellipse cx="0" cy="0" rx="19" ry="16.5" transform="rotate(-20)" fill="#666666"/><text x="0" y="7" text-anchor="middle" font-family="Liberation Sans" font-weight="bold" font-size="21" fill="#5c5c5c" stroke="#5c5c5c" stroke-width="1.6" transform="rotate(-20) scale(1.15,0.95)">G</text></svg>
<svg style="position:absolute;left:-29.30000000000001px;top:413px;" width="100" height="100" viewBox="-50 -50 100 100"><g transform="rotate(35)"><rect x="-31" y="-31" width="62" height="62" rx="14" fill="#646464"/></g><path d="M -27.40,-2.40 L -26.99,-4.76 L -26.39,-7.07 L -25.58,-9.31 L -24.59,-11.47 L -23.42,-13.52 L -22.08,-15.46 L -20.57,-17.26 L -18.93,-18.93 L -17.15,-20.43 L -15.25,-21.78 L -13.25,-22.94 L -11.16,-23.93 L -9.00,-24.72 L -6.79,-25.32 L -4.54,-25.73 L -2.27,-25.93 L -0.00,-25.94 L 2.25,-25.75 L 4.47,-25.37 L 6.64,-24.79 L 8.75,-24.03 L 10.77,-23.10 L 12.70,-21.99 L 14.51,-20.72 L 16.20,-19.31 L 17.76,-17.76 L 19.17,-16.09 L 20.42,-14.30 L 21.51,-12.42 L 22.43,-10.46 L 23.17,-8.43 L 23.73,-6.36 L 24.10,-4.25 L 24.29,-2.13 L 24.29,-0.00 L 24.11,2.11 L 23.74,4.19 L 23.20,6.22 L 22.48,8.18 L 21.60,10.07 L 20.56,11.87 L 19.37,13.57 L 18.05,15.14 L 16.59,16.59 L 15.03,17.91 L 13.35,19.07 L 11.60,20.08 L 9.76,20.94 L 7.87,21.62 L 5.93,22.14 L 3.96,22.48 L 1.98,22.65 L 0.00,22.64 L -1.97,22.46 L -3.90,22.12 L -5.79,21.60 L -7.62,20.93 L -9.38,20.10 L -11.05,19.13 L -12.62,18.02" fill="none" stroke="#5d5d5d" stroke-width="6" stroke-linecap="round"/><ellipse cx="0" cy="0" rx="19" ry="16.5" transform="rotate(-20)" fill="#666666"/><text x="0" y="7" text-anchor="middle" font-family="Liberation Sans" font-weight="bold" font-size="21" fill="#5c5c5c" stroke="#5c5c5c" stroke-width="1.6" transform="rotate(-20) scale(1.15,0.95)">G</text></svg>
<svg style="position:absolute;left:98.69999999999999px;top:413px;" width="100" height="100" viewBox="-50 -50 100 100"><g transform="rotate(35)"><rect x="-31" y="-31" width="62" height="62" rx="14" fill="#646464"/></g><path d="M -27.40,-2.40 L -26.99,-4.76 L -26.39,-7.07 L -25.58,-9.31 L -24.59,-11.47 L -23.42,-13.52 L -22.08,-15.46 L -20.57,-17.26 L -18.93,-18.93 L -17.15,-20.43 L -15.25,-21.78 L -13.25,-22.94 L -11.16,-23.93 L -9.00,-24.72 L -6.79,-25.32 L -4.54,-25.73 L -2.27,-25.93 L -0.00,-25.94 L 2.25,-25.75 L 4.47,-25.37 L 6.64,-24.79 L 8.75,-24.03 L 10.77,-23.10 L 12.70,-21.99 L 14.51,-20.72 L 16.20,-19.31 L 17.76,-17.76 L 19.17,-16.09 L 20.42,-14.30 L 21.51,-12.42 L 22.43,-10.46 L 23.17,-8.43 L 23.73,-6.36 L 24.10,-4.25 L 24.29,-2.13 L 24.29,-0.00 L 24.11,2.11 L 23.74,4.19 L 23.20,6.22 L 22.48,8.18 L 21.60,10.07 L 20.56,11.87 L 19.37,13.57 L 18.05,15.14 L 16.59,16.59 L 15.03,17.91 L 13.35,19.07 L 11.60,20.08 L 9.76,20.94 L 7.87,21.62 L 5.93,22.14 L 3.96,22.48 L 1.98,22.65 L 0.00,22.64 L -1.97,22.46 L -3.90,22.12 L -5.79,21.60 L -7.62,20.93 L -9.38,20.10 L -11.05,19.13 L -12.62,18.02" fill="none" stroke="#5d5d5d" stroke-width="6" stroke-linecap="round"/><ellipse cx="0" cy="0" rx="19" ry="16.5" transform="rotate(-20)" fill="#666666"/><text x="0" y="7" text-anchor="middle" font-family="Liberation Sans" font-weight="bold" font-size="21" fill="#5c5c5c" stroke="#5c5c5c" stroke-width="1.6" transform="rotate(-20) scale(1.15,0.95)">G</text></svg>
<svg style="position:absolute;left:226.7px;top:413px;" width="100" height="100" viewBox="-50 -50 100 100"><g transform="rotate(35)"><rect x="-31" y="-31" width="62" height="62" rx="14" fill="#646464"/></g><path d="M -27.40,-2.40 L -26.99,-4.76 L -26.39,-7.07 L -25.58,-9.31 L -24.59,-11.47 L -23.42,-13.52 L -22.08,-15.46 L -20.57,-17.26 L -18.93,-18.93 L -17.15,-20.43 L -15.25,-21.78 L -13.25,-22.94 L -11.16,-23.93 L -9.00,-24.72 L -6.79,-25.32 L -4.54,-25.73 L -2.27,-25.93 L -0.00,-25.94 L 2.25,-25.75 L 4.47,-25.37 L 6.64,-24.79 L 8.75,-24.03 L 10.77,-23.10 L 12.70,-21.99 L 14.51,-20.72 L 16.20,-19.31 L 17.76,-17.76 L 19.17,-16.09 L 20.42,-14.30 L 21.51,-12.42 L 22.43,-10.46 L 23.17,-8.43 L 23.73,-6.36 L 24.10,-4.25 L 24.29,-2.13 L 24.29,-0.00 L 24.11,2.11 L 23.74,4.19 L 23.20,6.22 L 22.48,8.18 L 21.60,10.07 L 20.56,11.87 L 19.37,13.57 L 18.05,15.14 L 16.59,16.59 L 15.03,17.91 L 13.35,19.07 L 11.60,20.08 L 9.76,20.94 L 7.87,21.62 L 5.93,22.14 L 3.96,22.48 L 1.98,22.65 L 0.00,22.64 L -1.97,22.46 L -3.90,22.12 L -5.79,21.60 L -7.62,20.93 L -9.38,20.10 L -11.05,19.13 L -12.62,18.02" fill="none" stroke="#5d5d5d" stroke-width="6" stroke-linecap="round"/><ellipse cx="0" cy="0" rx="19" ry="16.5" transform="rotate(-20)" fill="#666666"/><text x="0" y="7" text-anchor="middle" font-family="Liberation Sans" font-weight="bold" font-size="21" fill="#5c5c5c" stroke="#5c5c5c" stroke-width="1.6" transform="rotate(-20) scale(1.15,0.95)">G</text></svg>
<svg style="position:absolute;left:354.70000000000005px;top:413px;" width="100" height="100" viewBox="-50 -50 100 100"><g transform="rotate(35)"><rect x="-31" y="-31" width="62" height="62" rx="14" fill="#646464"/></g><path d="M -27.40,-2.40 L -26.99,-4.76 L -26.39,-7.07 L -25.58,-9.31 L -24.59,-11.47 L -23.42,-13.52 L -22.08,-15.46 L -20.57,-17.26 L -18.93,-18.93 L -17.15,-20.43 L -15.25,-21.78 L -13.25,-22.94 L -11.16,-23.93 L -9.00,-24.72 L -6.79,-25.32 L -4.54,-25.73 L -2.27,-25.93 L -0.00,-25.94 L 2.25,-25.75 L 4.47,-25.37 L 6.64,-24.79 L 8.75,-24.03 L 10.77,-23.10 L 12.70,-21.99 L 14.51,-20.72 L 16.20,-19.31 L 17.76,-17.76 L 19.17,-16.09 L 20.42,-14.30 L 21.51,-12.42 L 22.43,-10.46 L 23.17,-8.43 L 23.73,-6.36 L 24.10,-4.25 L 24.29,-2.13 L 24.29,-0.00 L 24.11,2.11 L 23.74,4.19 L 23.20,6.22 L 22.48,8.18 L 21.60,10.07 L 20.56,11.87 L 19.37,13.57 L 18.05,15.14 L 16.59,16.59 L 15.03,17.91 L 13.35,19.07 L 11.60,20.08 L 9.76,20.94 L 7.87,21.62 L 5.93,22.14 L 3.96,22.48 L 1.98,22.65 L 0.00,22.64 L -1.97,22.46 L -3.90,22.12 L -5.79,21.60 L -7.62,20.93 L -9.38,20.10 L -11.05,19.13 L -12.62,18.02" fill="none" stroke="#5d5d5d" stroke-width="6" stroke-linecap="round"/><ellipse cx="0" cy="0" rx="19" ry="16.5" transform="rotate(-20)" fill="#666666"/><text x="0" y="7" text-anchor="middle" font-family="Liberation Sans" font-weight="bold" font-size="21" fill="#5c5c5c" stroke="#5c5c5c" stroke-width="1.6" transform="rotate(-20) scale(1.15,0.95)">G</text></svg>
<svg style="position:absolute;left:482.70000000000005px;top:413px;" width="100" height="100" viewBox="-50 -50 100 100"><g transform="rotate(35)"><rect x="-31" y="-31" width="62" height="62" rx="14" fill="#646464"/></g><path d="M -27.40,-2.40 L -26.99,-4.76 L -26.39,-7.07 L -25.58,-9.31 L -24.59,-11.47 L -23.42,-13.52 L -22.08,-15.46 L -20.57,-17.26 L -18.93,-18.93 L -17.15,-20.43 L -15.25,-21.78 L -13.25,-22.94 L -11.16,-23.93 L -9.00,-24.72 L -6.79,-25.32 L -4.54,-25.73 L -2.27,-25.93 L -0.00,-25.94 L 2.25,-25.75 L 4.47,-25.37 L 6.64,-24.79 L 8.75,-24.03 L 10.77,-23.10 L 12.70,-21.99 L 14.51,-20.72 L 16.20,-19.31 L 17.76,-17.76 L 19.17,-16.09 L 20.42,-14.30 L 21.51,-12.42 L 22.43,-10.46 L 23.17,-8.43 L 23.73,-6.36 L 24.10,-4.25 L 24.29,-2.13 L 24.29,-0.00 L 24.11,2.11 L 23.74,4.19 L 23.20,6.22 L 22.48,8.18 L 21.60,10.07 L 20.56,11.87 L 19.37,13.57 L 18.05,15.14 L 16.59,16.59 L 15.03,17.91 L 13.35,19.07 L 11.60,20.08 L 9.76,20.94 L 7.87,21.62 L 5.93,22.14 L 3.96,22.48 L 1.98,22.65 L 0.00,22.64 L -1.97,22.46 L -3.90,22.12 L -5.79,21.60 L -7.62,20.93 L -9.38,20.10 L -11.05,19.13 L -12.62,18.02" fill="none" stroke="#5d5d5d" stroke-width="6" stroke-linecap="round"/><ellipse cx="0" cy="0" rx="19" ry="16.5" transform="rotate(-20)" fill="#666666"/><text x="0" y="7" text-anchor="middle" font-family="Liberation Sans" font-weight="bold" font-size="21" fill="#5c5c5c" stroke="#5c5c5c" stroke-width="1.6" transform="rotate(-20) scale(1.15,0.95)">G</text></svg>
<svg style="position:absolute;left:610.7px;top:413px;" width="100" height="100" viewBox="-50 -50 100 100"><g transform="rotate(35)"><rect x="-31" y="-31" width="62" height="62" rx="14" fill="#646464"/></g><path d="M -27.40,-2.40 L -26.99,-4.76 L -26.39,-7.07 L -25.58,-9.31 L -24.59,-11.47 L -23.42,-13.52 L -22.08,-15.46 L -20.57,-17.26 L -18.93,-18.93 L -17.15,-20.43 L -15.25,-21.78 L -13.25,-22.94 L -11.16,-23.93 L -9.00,-24.72 L -6.79,-25.32 L -4.54,-25.73 L -2.27,-25.93 L -0.00,-25.94 L 2.25,-25.75 L 4.47,-25.37 L 6.64,-24.79 L 8.75,-24.03 L 10.77,-23.10 L 12.70,-21.99 L 14.51,-20.72 L 16.20,-19.31 L 17.76,-17.76 L 19.17,-16.09 L 20.42,-14.30 L 21.51,-12.42 L 22.43,-10.46 L 23.17,-8.43 L 23.73,-6.36 L 24.10,-4.25 L 24.29,-2.13 L 24.29,-0.00 L 24.11,2.11 L 23.74,4.19 L 23.20,6.22 L 22.48,8.18 L 21.60,10.07 L 20.56,11.87 L 19.37,13.57 L 18.05,15.14 L 16.59,16.59 L 15.03,17.91 L 13.35,19.07 L 11.60,20.08 L 9.76,20.94 L 7.87,21.62 L 5.93,22.14 L 3.96,22.48 L 1.98,22.65 L 0.00,22.64 L -1.97,22.46 L -3.90,22.12 L -5.79,21.60 L -7.62,20.93 L -9.38,20.10 L -11.05,19.13 L -12.62,18.02" fill="none" stroke="#5d5d5d" stroke-width="6" stroke-linecap="round"/><ellipse cx="0" cy="0" rx="19" ry="16.5" transform="rotate(-20)" fill="#666666"/><text x="0" y="7" text-anchor="middle" font-family="Liberation Sans" font-weight="bold" font-size="21" fill="#5c5c5c" stroke="#5c5c5c" stroke-width="1.6" transform="rotate(-20) scale(1.15,0.95)">G</text></svg>
<svg style="position:absolute;left:738.7px;top:413px;" width="100" height="100" viewBox="-50 -50 100 100"><g transform="rotate(35)"><rect x="-31" y="-31" width="62" height="62" rx="14" fill="#646464"/></g><path d="M -27.40,-2.40 L -26.99,-4.76 L -26.39,-7.07 L -25.58,-9.31 L -24.59,-11.47 L -23.42,-13.52 L -22.08,-15.46 L -20.57,-17.26 L -18.93,-18.93 L -17.15,-20.43 L -15.25,-21.78 L -13.25,-22.94 L -11.16,-23.93 L -9.00,-24.72 L -6.79,-25.32 L -4.54,-25.73 L -2.27,-25.93 L -0.00,-25.94 L 2.25,-25.75 L 4.47,-25.37 L 6.64,-24.79 L 8.75,-24.03 L 10.77,-23.10 L 12.70,-21.99 L 14.51,-20.72 L 16.20,-19.31 L 17.76,-17.76 L 19.17,-16.09 L 20.42,-14.30 L 21.51,-12.42 L 22.43,-10.46 L 23.17,-8.43 L 23.73,-6.36 L 24.10,-4.25 L 24.29,-2.13 L 24.29,-0.00 L 24.11,2.11 L 23.74,4.19 L 23.20,6.22 L 22.48,8.18 L 21.60,10.07 L 20.56,11.87 L 19.37,13.57 L 18.05,15.14 L 16.59,16.59 L 15.03,17.91 L 13.35,19.07 L 11.60,20.08 L 9.76,20.94 L 7.87,21.62 L 5.93,22.14 L 3.96,22.48 L 1.98,22.65 L 0.00,22.64 L -1.97,22.46 L -3.90,22.12 L -5.79,21.60 L -7.62,20.93 L -9.38,20.10 L -11.05,19.13 L -12.62,18.02" fill="none" stroke="#5d5d5d" stroke-width="6" stroke-linecap="round"/><ellipse cx="0" cy="0" rx="19" ry="16.5" transform="rotate(-20)" fill="#666666"/><text x="0" y="7" text-anchor="middle" font-family="Liberation Sans" font-weight="bold" font-size="21" fill="#5c5c5c" stroke="#5c5c5c" stroke-width="1.6" transform="rotate(-20) scale(1.15,0.95)">G</text></svg>
<svg style="position:absolute;left:866.7px;top:413px;" width="100" height="100" viewBox="-50 -50 100 100"><g transform="rotate(35)"><rect x="-31" y="-31" width="62" height="62" rx="14" fill="#646464"/></g><path d="M -27.40,-2.40 L -26.99,-4.76 L -26.39,-7.07 L -25.58,-9.31 L -24.59,-11.47 L -23.42,-13.52 L -22.08,-15.46 L -20.57,-17.26 L -18.93,-18.93 L -17.15,-20.43 L -15.25,-21.78 L -13.25,-22.94 L -11.16,-23.93 L -9.00,-24.72 L -6.79,-25.32 L -4.54,-25.73 L -2.27,-25.93 L -0.00,-25.94 L 2.25,-25.75 L 4.47,-25.37 L 6.64,-24.79 L 8.75,-24.03 L 10.77,-23.10 L 12.70,-21.99 L 14.51,-20.72 L 16.20,-19.31 L 17.76,-17.76 L 19.17,-16.09 L 20.42,-14.30 L 21.51,-12.42 L 22.43,-10.46 L 23.17,-8.43 L 23.73,-6.36 L 24.10,-4.25 L 24.29,-2.13 L 24.29,-0.00 L 24.11,2.11 L 23.74,4.19 L 23.20,6.22 L 22.48,8.18 L 21.60,10.07 L 20.56,11.87 L 19.37,13.57 L 18.05,15.14 L 16.59,16.59 L 15.03,17.91 L 13.35,19.07 L 11.60,20.08 L 9.76,20.94 L 7.87,21.62 L 5.93,22.14 L 3.96,22.48 L 1.98,22.65 L 0.00,22.64 L -1.97,22.46 L -3.90,22.12 L -5.79,21.60 L -7.62,20.93 L -9.38,20.10 L -11.05,19.13 L -12.62,18.02" fill="none" stroke="#5d5d5d" stroke-width="6" stroke-linecap="round"/><ellipse cx="0" cy="0" rx="19" ry="16.5" transform="rotate(-20)" fill="#666666"/><text x="0" y="7" text-anchor="middle" font-family="Liberation Sans" font-weight="bold" font-size="21" fill="#5c5c5c" stroke="#5c5c5c" stroke-width="1.6" transform="rotate(-20) scale(1.15,0.95)">G</text></svg>
<svg style="position:absolute;left:-29.30000000000001px;top:541px;" width="100" height="100" viewBox="-50 -50 100 100"><g transform="rotate(35)"><rect x="-31" y="-31" width="62" height="62" rx="14" fill="#646464"/></g><path d="M -27.40,-2.40 L -26.99,-4.76 L -26.39,-7.07 L -25.58,-9.31 L -24.59,-11.47 L -23.42,-13.52 L -22.08,-15.46 L -20.57,-17.26 L -18.93,-18.93 L -17.15,-20.43 L -15.25,-21.78 L -13.25,-22.94 L -11.16,-23.93 L -9.00,-24.72 L -6.79,-25.32 L -4.54,-25.73 L -2.27,-25.93 L -0.00,-25.94 L 2.25,-25.75 L 4.47,-25.37 L 6.64,-24.79 L 8.75,-24.03 L 10.77,-23.10 L 12.70,-21.99 L 14.51,-20.72 L 16.20,-19.31 L 17.76,-17.76 L 19.17,-16.09 L 20.42,-14.30 L 21.51,-12.42 L 22.43,-10.46 L 23.17,-8.43 L 23.73,-6.36 L 24.10,-4.25 L 24.29,-2.13 L 24.29,-0.00 L 24.11,2.11 L 23.74,4.19 L 23.20,6.22 L 22.48,8.18 L 21.60,10.07 L 20.56,11.87 L 19.37,13.57 L 18.05,15.14 L 16.59,16.59 L 15.03,17.91 L 13.35,19.07 L 11.60,20.08 L 9.76,20.94 L 7.87,21.62 L 5.93,22.14 L 3.96,22.48 L 1.98,22.65 L 0.00,22.64 L -1.97,22.46 L -3.90,22.12 L -5.79,21.60 L -7.62,20.93 L -9.38,20.10 L -11.05,19.13 L -12.62,18.02" fill="none" stroke="#5d5d5d" stroke-width="6" stroke-linecap="round"/><ellipse cx="0" cy="0" rx="19" ry="16.5" transform="rotate(-20)" fill="#666666"/><text x="0" y="7" text-anchor="middle" font-family="Liberation Sans" font-weight="bold" font-size="21" fill="#5c5c5c" stroke="#5c5c5c" stroke-width="1.6" transform="rotate(-20) scale(1.15,0.95)">G</text></svg>
<svg style="position:absolute;left:98.69999999999999px;top:541px;" width="100" height="100" viewBox="-50 -50 100 100"><g transform="rotate(35)"><rect x="-31" y="-31" width="62" height="62" rx="14" fill="#646464"/></g><path d="M -27.40,-2.40 L -26.99,-4.76 L -26.39,-7.07 L -25.58,-9.31 L -24.59,-11.47 L -23.42,-13.52 L -22.08,-15.46 L -20.57,-17.26 L -18.93,-18.93 L -17.15,-20.43 L -15.25,-21.78 L -13.25,-22.94 L -11.16,-23.93 L -9.00,-24.72 L -6.79,-25.32 L -4.54,-25.73 L -2.27,-25.93 L -0.00,-25.94 L 2.25,-25.75 L 4.47,-25.37 L 6.64,-24.79 L 8.75,-24.03 L 10.77,-23.10 L 12.70,-21.99 L 14.51,-20.72 L 16.20,-19.31 L 17.76,-17.76 L 19.17,-16.09 L 20.42,-14.30 L 21.51,-12.42 L 22.43,-10.46 L 23.17,-8.43 L 23.73,-6.36 L 24.10,-4.25 L 24.29,-2.13 L 24.29,-0.00 L 24.11,2.11 L 23.74,4.19 L 23.20,6.22 L 22.48,8.18 L 21.60,10.07 L 20.56,11.87 L 19.37,13.57 L 18.05,15.14 L 16.59,16.59 L 15.03,17.91 L 13.35,19.07 L 11.60,20.08 L 9.76,20.94 L 7.87,21.62 L 5.93,22.14 L 3.96,22.48 L 1.98,22.65 L 0.00,22.64 L -1.97,22.46 L -3.90,22.12 L -5.79,21.60 L -7.62,20.93 L -9.38,20.10 L -11.05,19.13 L -12.62,18.02" fill="none" stroke="#5d5d5d" stroke-width="6" stroke-linecap="round"/><ellipse cx="0" cy="0" rx="19" ry="16.5" transform="rotate(-20)" fill="#666666"/><text x="0" y="7" text-anchor="middle" font-family="Liberation Sans" font-weight="bold" font-size="21" fill="#5c5c5c" stroke="#5c5c5c" stroke-width="1.6" transform="rotate(-20) scale(1.15,0.95)">G</text></svg>
<svg style="position:absolute;left:226.7px;top:541px;" width="100" height="100" viewBox="-50 -50 100 100"><g transform="rotate(35)"><rect x="-31" y="-31" width="62" height="62" rx="14" fill="#646464"/></g><path d="M -27.40,-2.40 L -26.99,-4.76 L -26.39,-7.07 L -25.58,-9.31 L -24.59,-11.47 L -23.42,-13.52 L -22.08,-15.46 L -20.57,-17.26 L -18.93,-18.93 L -17.15,-20.43 L -15.25,-21.78 L -13.25,-22.94 L -11.16,-23.93 L -9.00,-24.72 L -6.79,-25.32 L -4.54,-25.73 L -2.27,-25.93 L -0.00,-25.94 L 2.25,-25.75 L 4.47,-25.37 L 6.64,-24.79 L 8.75,-24.03 L 10.77,-23.10 L 12.70,-21.99 L 14.51,-20.72 L 16.20,-19.31 L 17.76,-17.76 L 19.17,-16.09 L 20.42,-14.30 L 21.51,-12.42 L 22.43,-10.46 L 23.17,-8.43 L 23.73,-6.36 L 24.10,-4.25 L 24.29,-2.13 L 24.29,-0.00 L 24.11,2.11 L 23.74,4.19 L 23.20,6.22 L 22.48,8.18 L 21.60,10.07 L 20.56,11.87 L 19.37,13.57 L 18.05,15.14 L 16.59,16.59 L 15.03,17.91 L 13.35,19.07 L 11.60,20.08 L 9.76,20.94 L 7.87,21.62 L 5.93,22.14 L 3.96,22.48 L 1.98,22.65 L 0.00,22.64 L -1.97,22.46 L -3.90,22.12 L -5.79,21.60 L -7.62,20.93 L -9.38,20.10 L -11.05,19.13 L -12.62,18.02" fill="none" stroke="#5d5d5d" stroke-width="6" stroke-linecap="round"/><ellipse cx="0" cy="0" rx="19" ry="16.5" transform="rotate(-20)" fill="#666666"/><text x="0" y="7" text-anchor="middle" font-family="Liberation Sans" font-weight="bold" font-size="21" fill="#5c5c5c" stroke="#5c5c5c" stroke-width="1.6" transform="rotate(-20) scale(1.15,0.95)">G</text></svg>
<svg style="position:absolute;left:354.70000000000005px;top:541px;" width="100" height="100" viewBox="-50 -50 100 100"><g transform="rotate(35)"><rect x="-31" y="-31" width="62" height="62" rx="14" fill="#646464"/></g><path d="M -27.40,-2.40 L -26.99,-4.76 L -26.39,-7.07 L -25.58,-9.31 L -24.59,-11.47 L -23.42,-13.52 L -22.08,-15.46 L -20.57,-17.26 L -18.93,-18.93 L -17.15,-20.43 L -15.25,-21.78 L -13.25,-22.94 L -11.16,-23.93 L -9.00,-24.72 L -6.79,-25.32 L -4.54,-25.73 L -2.27,-25.93 L -0.00,-25.94 L 2.25,-25.75 L 4.47,-25.37 L 6.64,-24.79 L 8.75,-24.03 L 10.77,-23.10 L 12.70,-21.99 L 14.51,-20.72 L 16.20,-19.31 L 17.76,-17.76 L 19.17,-16.09 L 20.42,-14.30 L 21.51,-12.42 L 22.43,-10.46 L 23.17,-8.43 L 23.73,-6.36 L 24.10,-4.25 L 24.29,-2.13 L 24.29,-0.00 L 24.11,2.11 L 23.74,4.19 L 23.20,6.22 L 22.48,8.18 L 21.60,10.07 L 20.56,11.87 L 19.37,13.57 L 18.05,15.14 L 16.59,16.59 L 15.03,17.91 L 13.35,19.07 L 11.60,20.08 L 9.76,20.94 L 7.87,21.62 L 5.93,22.14 L 3.96,22.48 L 1.98,22.65 L 0.00,22.64 L -1.97,22.46 L -3.90,22.12 L -5.79,21.60 L -7.62,20.93 L -9.38,20.10 L -11.05,19.13 L -12.62,18.02" fill="none" stroke="#5d5d5d" stroke-width="6" stroke-linecap="round"/><ellipse cx="0" cy="0" rx="19" ry="16.5" transform="rotate(-20)" fill="#666666"/><text x="0" y="7" text-anchor="middle" font-family="Liberation Sans" font-weight="bold" font-size="21" fill="#5c5c5c" stroke="#5c5c5c" stroke-width="1.6" transform="rotate(-20) scale(1.15,0.95)">G</text></svg>
<svg style="position:absolute;left:482.70000000000005px;top:541px;" width="100" height="100" viewBox="-50 -50 100 100"><g transform="rotate(35)"><rect x="-31" y="-31" width="62" height="62" rx="14" fill="#646464"/></g><path d="M -27.40,-2.40 L -26.99,-4.76 L -26.39,-7.07 L -25.58,-9.31 L -24.59,-11.47 L -23.42,-13.52 L -22.08,-15.46 L -20.57,-17.26 L -18.93,-18.93 L -17.15,-20.43 L -15.25,-21.78 L -13.25,-22.94 L -11.16,-23.93 L -9.00,-24.72 L -6.79,-25.32 L -4.54,-25.73 L -2.27,-25.93 L -0.00,-25.94 L 2.25,-25.75 L 4.47,-25.37 L 6.64,-24.79 L 8.75,-24.03 L 10.77,-23.10 L 12.70,-21.99 L 14.51,-20.72 L 16.20,-19.31 L 17.76,-17.76 L 19.17,-16.09 L 20.42,-14.30 L 21.51,-12.42 L 22.43,-10.46 L 23.17,-8.43 L 23.73,-6.36 L 24.10,-4.25 L 24.29,-2.13 L 24.29,-0.00 L 24.11,2.11 L 23.74,4.19 L 23.20,6.22 L 22.48,8.18 L 21.60,10.07 L 20.56,11.87 L 19.37,13.57 L 18.05,15.14 L 16.59,16.59 L 15.03,17.91 L 13.35,19.07 L 11.60,20.08 L 9.76,20.94 L 7.87,21.62 L 5.93,22.14 L 3.96,22.48 L 1.98,22.65 L 0.00,22.64 L -1.97,22.46 L -3.90,22.12 L -5.79,21.60 L -7.62,20.93 L -9.38,20.10 L -11.05,19.13 L -12.62,18.02" fill="none" stroke="#5d5d5d" stroke-width="6" stroke-linecap="round"/><ellipse cx="0" cy="0" rx="19" ry="16.5" transform="rotate(-20)" fill="#666666"/><text x="0" y="7" text-anchor="middle" font-family="Liberation Sans" font-weight="bold" font-size="21" fill="#5c5c5c" stroke="#5c5c5c" stroke-width="1.6" transform="rotate(-20) scale(1.15,0.95)">G</text></svg>
<svg style="position:absolute;left:610.7px;top:541px;" width="100" height="100" viewBox="-50 -50 100 100"><g transform="rotate(35)"><rect x="-31" y="-31" width="62" height="62" rx="14" fill="#646464"/></g><path d="M -27.40,-2.40 L -26.99,-4.76 L -26.39,-7.07 L -25.58,-9.31 L -24.59,-11.47 L -23.42,-13.52 L -22.08,-15.46 L -20.57,-17.26 L -18.93,-18.93 L -17.15,-20.43 L -15.25,-21.78 L -13.25,-22.94 L -11.16,-23.93 L -9.00,-24.72 L -6.79,-25.32 L -4.54,-25.73 L -2.27,-25.93 L -0.00,-25.94 L 2.25,-25.75 L 4.47,-25.37 L 6.64,-24.79 L 8.75,-24.03 L 10.77,-23.10 L 12.70,-21.99 L 14.51,-20.72 L 16.20,-19.31 L 17.76,-17.76 L 19.17,-16.09 L 20.42,-14.30 L 21.51,-12.42 L 22.43,-10.46 L 23.17,-8.43 L 23.73,-6.36 L 24.10,-4.25 L 24.29,-2.13 L 24.29,-0.00 L 24.11,2.11 L 23.74,4.19 L 23.20,6.22 L 22.48,8.18 L 21.60,10.07 L 20.56,11.87 L 19.37,13.57 L 18.05,15.14 L 16.59,16.59 L 15.03,17.91 L 13.35,19.07 L 11.60,20.08 L 9.76,20.94 L 7.87,21.62 L 5.93,22.14 L 3.96,22.48 L 1.98,22.65 L 0.00,22.64 L -1.97,22.46 L -3.90,22.12 L -5.79,21.60 L -7.62,20.93 L -9.38,20.10 L -11.05,19.13 L -12.62,18.02" fill="none" stroke="#5d5d5d" stroke-width="6" stroke-linecap="round"/><ellipse cx="0" cy="0" rx="19" ry="16.5" transform="rotate(-20)" fill="#666666"/><text x="0" y="7" text-anchor="middle" font-family="Liberation Sans" font-weight="bold" font-size="21" fill="#5c5c5c" stroke="#5c5c5c" stroke-width="1.6" transform="rotate(-20) scale(1.15,0.95)">G</text></svg>
<svg style="position:absolute;left:738.7px;top:541px;" width="100" height="100" viewBox="-50 -50 100 100"><g transform="rotate(35)"><rect x="-31" y="-31" width="62" height="62" rx="14" fill="#646464"/></g><path d="M -27.40,-2.40 L -26.99,-4.76 L -26.39,-7.07 L -25.58,-9.31 L -24.59,-11.47 L -23.42,-13.52 L -22.08,-15.46 L -20.57,-17.26 L -18.93,-18.93 L -17.15,-20.43 L -15.25,-21.78 L -13.25,-22.94 L -11.16,-23.93 L -9.00,-24.72 L -6.79,-25.32 L -4.54,-25.73 L -2.27,-25.93 L -0.00,-25.94 L 2.25,-25.75 L 4.47,-25.37 L 6.64,-24.79 L 8.75,-24.03 L 10.77,-23.10 L 12.70,-21.99 L 14.51,-20.72 L 16.20,-19.31 L 17.76,-17.76 L 19.17,-16.09 L 20.42,-14.30 L 21.51,-12.42 L 22.43,-10.46 L 23.17,-8.43 L 23.73,-6.36 L 24.10,-4.25 L 24.29,-2.13 L 24.29,-0.00 L 24.11,2.11 L 23.74,4.19 L 23.20,6.22 L 22.48,8.18 L 21.60,10.07 L 20.56,11.87 L 19.37,13.57 L 18.05,15.14 L 16.59,16.59 L 15.03,17.91 L 13.35,19.07 L 11.60,20.08 L 9.76,20.94 L 7.87,21.62 L 5.93,22.14 L 3.96,22.48 L 1.98,22.65 L 0.00,22.64 L -1.97,22.46 L -3.90,22.12 L -5.79,21.60 L -7.62,20.93 L -9.38,20.10 L -11.05,19.13 L -12.62,18.02" fill="none" stroke="#5d5d5d" stroke-width="6" stroke-linecap="round"/><ellipse cx="0" cy="0" rx="19" ry="16.5" transform="rotate(-20)" fill="#666666"/><text x="0" y="7" text-anchor="middle" font-family="Liberation Sans" font-weight="bold" font-size="21" fill="#5c5c5c" stroke="#5c5c5c" stroke-width="1.6" transform="rotate(-20) scale(1.15,0.95)">G</text></svg>
<svg style="position:absolute;left:866.7px;top:541px;" width="100" height="100" viewBox="-50 -50 100 100"><g transform="rotate(35)"><rect x="-31" y="-31" width="62" height="62" rx="14" fill="#646464"/></g><path d="M -27.40,-2.40 L -26.99,-4.76 L -26.39,-7.07 L -25.58,-9.31 L -24.59,-11.47 L -23.42,-13.52 L -22.08,-15.46 L -20.57,-17.26 L -18.93,-18.93 L -17.15,-20.43 L -15.25,-21.78 L -13.25,-22.94 L -11.16,-23.93 L -9.00,-24.72 L -6.79,-25.32 L -4.54,-25.73 L -2.27,-25.93 L -0.00,-25.94 L 2.25,-25.75 L 4.47,-25.37 L 6.64,-24.79 L 8.75,-24.03 L 10.77,-23.10 L 12.70,-21.99 L 14.51,-20.72 L 16.20,-19.31 L 17.76,-17.76 L 19.17,-16.09 L 20.42,-14.30 L 21.51,-12.42 L 22.43,-10.46 L 23.17,-8.43 L 23.73,-6.36 L 24.10,-4.25 L 24.29,-2.13 L 24.29,-0.00 L 24.11,2.11 L 23.74,4.19 L 23.20,6.22 L 22.48,8.18 L 21.60,10.07 L 20.56,11.87 L 19.37,13.57 L 18.05,15.14 L 16.59,16.59 L 15.03,17.91 L 13.35,19.07 L 11.60,20.08 L 9.76,20.94 L 7.87,21.62 L 5.93,22.14 L 3.96,22.48 L 1.98,22.65 L 0.00,22.64 L -1.97,22.46 L -3.90,22.12 L -5.79,21.60 L -7.62,20.93 L -9.38,20.10 L -11.05,19.13 L -12.62,18.02" fill="none" stroke="#5d5d5d" stroke-width="6" stroke-linecap="round"/><ellipse cx="0" cy="0" rx="19" ry="16.5" transform="rotate(-20)" fill="#666666"/><text x="0" y="7" text-anchor="middle" font-family="Liberation Sans" font-weight="bold" font-size="21" fill="#5c5c5c" stroke="#5c5c5c" stroke-width="1.6" transform="rotate(-20) scale(1.15,0.95)">G</text></svg>
<div style="position:absolute;left:0px;top:15px;width:87px;height:542px;background:#5b5b5b;overflow:hidden;">
<div style="position:absolute;left:0;top:-15px;">
<svg style="position:absolute;left:18px;top:29px;" width="100" height="100" viewBox="-50 -50 100 100"><g transform="rotate(35)"><rect x="-31" y="-31" width="62" height="62" rx="14" fill="#646464"/></g><path d="M -27.40,-2.40 L -26.99,-4.76 L -26.39,-7.07 L -25.58,-9.31 L -24.59,-11.47 L -23.42,-13.52 L -22.08,-15.46 L -20.57,-17.26 L -18.93,-18.93 L -17.15,-20.43 L -15.25,-21.78 L -13.25,-22.94 L -11.16,-23.93 L -9.00,-24.72 L -6.79,-25.32 L -4.54,-25.73 L -2.27,-25.93 L -0.00,-25.94 L 2.25,-25.75 L 4.47,-25.37 L 6.64,-24.79 L 8.75,-24.03 L 10.77,-23.10 L 12.70,-21.99 L 14.51,-20.72 L 16.20,-19.31 L 17.76,-17.76 L 19.17,-16.09 L 20.42,-14.30 L 21.51,-12.42 L 22.43,-10.46 L 23.17,-8.43 L 23.73,-6.36 L 24.10,-4.25 L 24.29,-2.13 L 24.29,-0.00 L 24.11,2.11 L 23.74,4.19 L 23.20,6.22 L 22.48,8.18 L 21.60,10.07 L 20.56,11.87 L 19.37,13.57 L 18.05,15.14 L 16.59,16.59 L 15.03,17.91 L 13.35,19.07 L 11.60,20.08 L 9.76,20.94 L 7.87,21.62 L 5.93,22.14 L 3.96,22.48 L 1.98,22.65 L 0.00,22.64 L -1.97,22.46 L -3.90,22.12 L -5.79,21.60 L -7.62,20.93 L -9.38,20.10 L -11.05,19.13 L -12.62,18.02" fill="none" stroke="#5d5d5d" stroke-width="6" stroke-linecap="round"/><ellipse cx="0" cy="0" rx="19" ry="16.5" transform="rotate(-20)" fill="#666666"/><text x="0" y="7" text-anchor="middle" font-family="Liberation Sans" font-weight="bold" font-size="21" fill="#5c5c5c" stroke="#5c5c5c" stroke-width="1.6" transform="rotate(-20) scale(1.15,0.95)">G</text></svg>
</div>
<div style="position:absolute;left:0;top:-15px;">
<svg style="position:absolute;left:18px;top:157px;" width="100" height="100" viewBox="-50 -50 100 100"><g transform="rotate(35)"><rect x="-31" y="-31" width="62" height="62" rx="14" fill="#646464"/></g><path d="M -27.40,-2.40 L -26.99,-4.76 L -26.39,-7.07 L -25.58,-9.31 L -24.59,-11.47 L -23.42,-13.52 L -22.08,-15.46 L -20.57,-17.26 L -18.93,-18.93 L -17.15,-20.43 L -15.25,-21.78 L -13.25,-22.94 L -11.16,-23.93 L -9.00,-24.72 L -6.79,-25.32 L -4.54,-25.73 L -2.27,-25.93 L -0.00,-25.94 L 2.25,-25.75 L 4.47,-25.37 L 6.64,-24.79 L 8.75,-24.03 L 10.77,-23.10 L 12.70,-21.99 L 14.51,-20.72 L 16.20,-19.31 L 17.76,-17.76 L 19.17,-16.09 L 20.42,-14.30 L 21.51,-12.42 L 22.43,-10.46 L 23.17,-8.43 L 23.73,-6.36 L 24.10,-4.25 L 24.29,-2.13 L 24.29,-0.00 L 24.11,2.11 L 23.74,4.19 L 23.20,6.22 L 22.48,8.18 L 21.60,10.07 L 20.56,11.87 L 19.37,13.57 L 18.05,15.14 L 16.59,16.59 L 15.03,17.91 L 13.35,19.07 L 11.60,20.08 L 9.76,20.94 L 7.87,21.62 L 5.93,22.14 L 3.96,22.48 L 1.98,22.65 L 0.00,22.64 L -1.97,22.46 L -3.90,22.12 L -5.79,21.60 L -7.62,20.93 L -9.38,20.10 L -11.05,19.13 L -12.62,18.02" fill="none" stroke="#5d5d5d" stroke-width="6" stroke-linecap="round"/><ellipse cx="0" cy="0" rx="19" ry="16.5" transform="rotate(-20)" fill="#666666"/><text x="0" y="7" text-anchor="middle" font-family="Liberation Sans" font-weight="bold" font-size="21" fill="#5c5c5c" stroke="#5c5c5c" stroke-width="1.6" transform="rotate(-20) scale(1.15,0.95)">G</text></svg>
</div>
<div style="position:absolute;left:0;top:-15px;">
<svg style="position:absolute;left:18px;top:285px;" width="100" height="100" viewBox="-50 -50 100 100"><g transform="rotate(35)"><rect x="-31" y="-31" width="62" height="62" rx="14" fill="#646464"/></g><path d="M -27.40,-2.40 L -26.99,-4.76 L -26.39,-7.07 L -25.58,-9.31 L -24.59,-11.47 L -23.42,-13.52 L -22.08,-15.46 L -20.57,-17.26 L -18.93,-18.93 L -17.15,-20.43 L -15.25,-21.78 L -13.25,-22.94 L -11.16,-23.93 L -9.00,-24.72 L -6.79,-25.32 L -4.54,-25.73 L -2.27,-25.93 L -0.00,-25.94 L 2.25,-25.75 L 4.47,-25.37 L 6.64,-24.79 L 8.75,-24.03 L 10.77,-23.10 L 12.70,-21.99 L 14.51,-20.72 L 16.20,-19.31 L 17.76,-17.76 L 19.17,-16.09 L 20.42,-14.30 L 21.51,-12.42 L 22.43,-10.46 L 23.17,-8.43 L 23.73,-6.36 L 24.10,-4.25 L 24.29,-2.13 L 24.29,-0.00 L 24.11,2.11 L 23.74,4.19 L 23.20,6.22 L 22.48,8.18 L 21.60,10.07 L 20.56,11.87 L 19.37,13.57 L 18.05,15.14 L 16.59,16.59 L 15.03,17.91 L 13.35,19.07 L 11.60,20.08 L 9.76,20.94 L 7.87,21.62 L 5.93,22.14 L 3.96,22.48 L 1.98,22.65 L 0.00,22.64 L -1.97,22.46 L -3.90,22.12 L -5.79,21.60 L -7.62,20.93 L -9.38,20.10 L -11.05,19.13 L -12.62,18.02" fill="none" stroke="#5d5d5d" stroke-width="6" stroke-linecap="round"/><ellipse cx="0" cy="0" rx="19" ry="16.5" transform="rotate(-20)" fill="#666666"/><text x="0" y="7" text-anchor="middle" font-family="Liberation Sans" font-weight="bold" font-size="21" fill="#5c5c5c" stroke="#5c5c5c" stroke-width="1.6" transform="rotate(-20) scale(1.15,0.95)">G</text></svg>
</div>
<div style="position:absolute;left:0;top:-15px;">
<svg style="position:absolute;left:18px;top:413px;" width="100" height="100" viewBox="-50 -50 100 100"><g transform="rotate(35)"><rect x="-31" y="-31" width="62" height="62" rx="14" fill="#646464"/></g><path d="M -27.40,-2.40 L -26.99,-4.76 L -26.39,-7.07 L -25.58,-9.31 L -24.59,-11.47 L -23.42,-13.52 L -22.08,-15.46 L -20.57,-17.26 L -18.93,-18.93 L -17.15,-20.43 L -15.25,-21.78 L -13.25,-22.94 L -11.16,-23.93 L -9.00,-24.72 L -6.79,-25.32 L -4.54,-25.73 L -2.27,-25.93 L -0.00,-25.94 L 2.25,-25.75 L 4.47,-25.37 L 6.64,-24.79 L 8.75,-24.03 L 10.77,-23.10 L 12.70,-21.99 L 14.51,-20.72 L 16.20,-19.31 L 17.76,-17.76 L 19.17,-16.09 L 20.42,-14.30 L 21.51,-12.42 L 22.43,-10.46 L 23.17,-8.43 L 23.73,-6.36 L 24.10,-4.25 L 24.29,-2.13 L 24.29,-0.00 L 24.11,2.11 L 23.74,4.19 L 23.20,6.22 L 22.48,8.18 L 21.60,10.07 L 20.56,11.87 L 19.37,13.57 L 18.05,15.14 L 16.59,16.59 L 15.03,17.91 L 13.35,19.07 L 11.60,20.08 L 9.76,20.94 L 7.87,21.62 L 5.93,22.14 L 3.96,22.48 L 1.98,22.65 L 0.00,22.64 L -1.97,22.46 L -3.90,22.12 L -5.79,21.60 L -7.62,20.93 L -9.38,20.10 L -11.05,19.13 L -12.62,18.02" fill="none" stroke="#5d5d5d" stroke-width="6" stroke-linecap="round"/><ellipse cx="0" cy="0" rx="19" ry="16.5" transform="rotate(-20)" fill="#666666"/><text x="0" y="7" text-anchor="middle" font-family="Liberation Sans" font-weight="bold" font-size="21" fill="#5c5c5c" stroke="#5c5c5c" stroke-width="1.6" transform="rotate(-20) scale(1.15,0.95)">G</text></svg>
</div>
<div style="position:absolute;left:0;top:-15px;">
<svg style="position:absolute;left:18px;top:541px;" width="100" height="100" viewBox="-50 -50 100 100"><g transform="rotate(35)"><rect x="-31" y="-31" width="62" height="62" rx="14" fill="#646464"/></g><path d="M -27.40,-2.40 L -26.99,-4.76 L -26.39,-7.07 L -25.58,-9.31 L -24.59,-11.47 L -23.42,-13.52 L -22.08,-15.46 L -20.57,-17.26 L -18.93,-18.93 L -17.15,-20.43 L -15.25,-21.78 L -13.25,-22.94 L -11.16,-23.93 L -9.00,-24.72 L -6.79,-25.32 L -4.54,-25.73 L -2.27,-25.93 L -0.00,-25.94 L 2.25,-25.75 L 4.47,-25.37 L 6.64,-24.79 L 8.75,-24.03 L 10.77,-23.10 L 12.70,-21.99 L 14.51,-20.72 L 16.20,-19.31 L 17.76,-17.76 L 19.17,-16.09 L 20.42,-14.30 L 21.51,-12.42 L 22.43,-10.46 L 23.17,-8.43 L 23.73,-6.36 L 24.10,-4.25 L 24.29,-2.13 L 24.29,-0.00 L 24.11,2.11 L 23.74,4.19 L 23.20,6.22 L 22.48,8.18 L 21.60,10.07 L 20.56,11.87 L 19.37,13.57 L 18.05,15.14 L 16.59,16.59 L 15.03,17.91 L 13.35,19.07 L 11.60,20.08 L 9.76,20.94 L 7.87,21.62 L 5.93,22.14 L 3.96,22.48 L 1.98,22.65 L 0.00,22.64 L -1.97,22.46 L -3.90,22.12 L -5.79,21.60 L -7.62,20.93 L -9.38,20.10 L -11.05,19.13 L -12.62,18.02" fill="none" stroke="#5d5d5d" stroke-width="6" stroke-linecap="round"/><ellipse cx="0" cy="0" rx="19" ry="16.5" transform="rotate(-20)" fill="#666666"/><text x="0" y="7" text-anchor="middle" font-family="Liberation Sans" font-weight="bold" font-size="21" fill="#5c5c5c" stroke="#5c5c5c" stroke-width="1.6" transform="rotate(-20) scale(1.15,0.95)">G</text></svg>
</div>
</div>
<div style="position:absolute;left:82.00px;top:15.00px;width:1.70px;height:542.00px;background:#525252;"></div>
<div style="position:absolute;left:83.70px;top:14.00px;width:2.10px;height:543.00px;background:#d2d2d2;"></div>
<div style="position:absolute;left:85.80px;top:15.00px;width:1.20px;height:542.00px;background:#555555;"></div>
<div style="position:absolute;left:0.00px;top:15.00px;width:1.00px;height:561.00px;background:#d8d8d8;"></div>
<div style="position:absolute;left:1.00px;top:15.00px;width:1.00px;height:542.00px;background:#9c9c9c;"></div>
<div style="position:absolute;left:2.00px;top:15.00px;width:1.00px;height:542.00px;background:#d6d6d6;"></div>
<div style="position:absolute;left:3.00px;top:15.00px;width:1.00px;height:542.00px;background:#4c4c4c;"></div>
<div style="position:absolute;left:3.00px;top:15.00px;width:80.40px;height:1.00px;background:#444;"></div>
<div style="position:absolute;left:87.00px;top:15.00px;width:934.00px;height:1.00px;background:#4a4a4a;"></div>
<div style="position:absolute;box-sizing:border-box;left:5.00px;top:17.10px;width:75.30px;height:21.50px;background:#5f5f5f;border:1.3px solid #b9b9b9;border-radius:2px;box-shadow:0 0 0 0.6px rgba(40,40,40,0.45), inset 0 0 0 0.5px rgba(40,40,40,0.35);display:flex;align-items:center;justify-content:center;padding-top:1.35px;font-size:7.5px;line-height:7.5px;font-weight:bold;color:#ffffff;letter-spacing:0.22px;white-space:pre;-webkit-text-stroke:0.2px #ffffff;">17.03.2021</div>
<div style="position:absolute;box-sizing:border-box;left:5.00px;top:39.60px;width:75.30px;height:21.40px;background:#5f5f5f;border:1.3px solid #b9b9b9;border-radius:2px;box-shadow:0 0 0 0.6px rgba(40,40,40,0.45), inset 0 0 0 0.5px rgba(40,40,40,0.35);display:flex;align-items:center;justify-content:center;padding-top:1.35px;font-size:7.5px;line-height:7.5px;font-weight:bold;color:#ffffff;letter-spacing:0.22px;white-space:pre;-webkit-text-stroke:0.2px #ffffff;">11:25:53</div>
<div style="position:absolute;box-sizing:border-box;left:5.00px;top:83.30px;width:75.30px;height:21.30px;background:#33cc33;border:1.3px solid #b9b9b9;border-radius:2px;box-shadow:0 0 0 0.6px rgba(40,40,40,0.45);display:flex;align-items:center;justify-content:center;padding-top:1.37px;font-size:7.6px;line-height:7.6px;font-weight:bold;color:#000000;letter-spacing:0.22px;white-space:pre;-webkit-text-stroke:0.2px #000000;">RM1/ŘS: chod</div>
<div style="position:absolute;box-sizing:border-box;left:5.00px;top:105.40px;width:75.30px;height:21.40px;background:#33cc33;border:1.3px solid #b9b9b9;border-radius:2px;box-shadow:0 0 0 0.6px rgba(40,40,40,0.45);display:flex;align-items:center;justify-content:center;padding-top:1.37px;font-size:7.6px;line-height:7.6px;font-weight:bold;color:#000000;letter-spacing:0.22px;white-space:pre;-webkit-text-stroke:0.2px #000000;">RM1/ÚT: zima</div>
<div style="position:absolute;box-sizing:border-box;left:5.00px;top:148.60px;width:75.30px;height:21.40px;background:#33cc33;border:1.3px solid #b9b9b9;border-radius:2px;box-shadow:0 0 0 0.6px rgba(40,40,40,0.45);display:flex;align-items:center;justify-content:center;padding-top:1.37px;font-size:7.6px;line-height:7.6px;font-weight:bold;color:#000000;letter-spacing:0.22px;white-space:pre;-webkit-text-stroke:0.2px #000000;">RM2/ŘS: chod</div>
<div style="position:absolute;box-sizing:border-box;left:5.00px;top:192.20px;width:75.30px;height:21.40px;background:#3cb06e;border:1.3px solid #b9b9b9;border-radius:2px;box-shadow:0 0 0 0.6px rgba(40,40,40,0.45);display:flex;align-items:center;justify-content:center;padding-top:1.37px;font-size:7.6px;line-height:7.6px;font-weight:bold;color:#ffffff;letter-spacing:0.22px;white-space:pre;-webkit-text-stroke:0.2px #ffffff;">Titulka</div>
<div style="position:absolute;box-sizing:border-box;left:5.00px;top:214.60px;width:75.30px;height:21.20px;background:#3cb06e;border:1.3px solid #b9b9b9;border-radius:2px;box-shadow:0 0 0 0.6px rgba(40,40,40,0.45);display:flex;align-items:center;justify-content:center;padding-top:1.37px;font-size:7.6px;line-height:7.6px;font-weight:bold;color:#ffffff;letter-spacing:0.22px;white-space:pre;-webkit-text-stroke:0.2px #ffffff;">RM1: kotelna</div>
<div style="position:absolute;box-sizing:border-box;left:5.00px;top:236.60px;width:75.30px;height:21.40px;background:#3cb06e;border:1.3px solid #b9b9b9;border-radius:2px;box-shadow:0 0 0 0.6px rgba(40,40,40,0.45);display:flex;align-items:center;justify-content:center;padding-top:1.37px;font-size:7.6px;line-height:7.6px;font-weight:bold;color:#ffffff;letter-spacing:0.22px;white-space:pre;-webkit-text-stroke:0.2px #ffffff;">RM2: VZT1</div>
<div style="position:absolute;box-sizing:border-box;left:5.00px;top:258.60px;width:75.30px;height:21.40px;background:#3cb06e;border:1.3px solid #b9b9b9;border-radius:2px;box-shadow:0 0 0 0.6px rgba(40,40,40,0.45);display:flex;align-items:center;justify-content:center;padding-top:1.37px;font-size:7.6px;line-height:7.6px;font-weight:bold;color:#ffffff;letter-spacing:0.22px;white-space:pre;-webkit-text-stroke:0.2px #ffffff;">RM2: VZT2</div>
<div style="position:absolute;box-sizing:border-box;left:5.00px;top:280.60px;width:75.30px;height:21.40px;background:#3cb06e;border:1.3px solid #b9b9b9;border-radius:2px;box-shadow:0 0 0 0.6px rgba(40,40,40,0.45);display:flex;align-items:center;justify-content:center;padding-top:1.37px;font-size:7.6px;line-height:7.6px;font-weight:bold;color:#ffffff;letter-spacing:0.22px;white-space:pre;-webkit-text-stroke:0.2px #ffffff;">RM3: DALI</div>
<div style="position:absolute;box-sizing:border-box;left:5.00px;top:323.80px;width:75.30px;height:21.40px;background:#3cb06e;border:1.3px solid #b9b9b9;border-radius:2px;box-shadow:0 0 0 0.6px rgba(40,40,40,0.45);display:flex;align-items:center;justify-content:center;padding-top:1.37px;font-size:7.6px;line-height:7.6px;font-weight:bold;color:#ffffff;letter-spacing:0.22px;white-space:pre;-webkit-text-stroke:0.2px #ffffff;">Tab. sestavy</div>
<div style="position:absolute;box-sizing:border-box;left:5.00px;top:345.90px;width:75.30px;height:21.30px;background:#3cb06e;border:1.3px solid #b9b9b9;border-radius:2px;box-shadow:0 0 0 0.6px rgba(40,40,40,0.45);display:flex;align-items:center;justify-content:center;padding-top:1.37px;font-size:7.6px;line-height:7.6px;font-weight:bold;color:#ffffff;letter-spacing:0.22px;white-space:pre;-webkit-text-stroke:0.2px #ffffff;">Události</div>
<div style="position:absolute;box-sizing:border-box;left:5.00px;top:368.00px;width:75.30px;height:21.30px;background:#3cb06e;border:1.3px solid #b9b9b9;border-radius:2px;box-shadow:0 0 0 0.6px rgba(40,40,40,0.45);display:flex;align-items:center;justify-content:center;padding-top:1.37px;font-size:7.6px;line-height:7.6px;font-weight:bold;color:#ffffff;letter-spacing:0.22px;white-space:pre;-webkit-text-stroke:0.2px #ffffff;">Energie</div>
<div style="position:absolute;box-sizing:border-box;left:5.00px;top:411.00px;width:75.30px;height:21.40px;background:#5f5f5f;border:1.3px solid #b9b9b9;border-radius:2px;box-shadow:0 0 0 0.6px rgba(40,40,40,0.45), inset 0 0 0 0.5px rgba(40,40,40,0.35);display:flex;align-items:center;justify-content:center;padding-top:1.37px;font-size:7.6px;line-height:7.6px;font-weight:bold;color:#ffffff;letter-spacing:0.22px;white-space:pre;-webkit-text-stroke:0.2px #ffffff;">RM1/IO: ok</div>
<div style="position:absolute;box-sizing:border-box;left:5.00px;top:433.10px;width:75.30px;height:21.40px;background:#5f5f5f;border:1.3px solid #b9b9b9;border-radius:2px;box-shadow:0 0 0 0.6px rgba(40,40,40,0.45), inset 0 0 0 0.5px rgba(40,40,40,0.35);display:flex;align-items:center;justify-content:center;padding-top:1.37px;font-size:7.6px;line-height:7.6px;font-weight:bold;color:#ffffff;letter-spacing:0.22px;white-space:pre;-webkit-text-stroke:0.2px #ffffff;">RM2/IO: ok</div>
<div style="position:absolute;box-sizing:border-box;left:5.00px;top:455.20px;width:75.30px;height:21.40px;background:#5f5f5f;border:1.3px solid #b9b9b9;border-radius:2px;box-shadow:0 0 0 0.6px rgba(40,40,40,0.45), inset 0 0 0 0.5px rgba(40,40,40,0.35);display:flex;align-items:center;justify-content:center;padding-top:1.37px;font-size:7.6px;line-height:7.6px;font-weight:bold;color:#ffffff;letter-spacing:0.22px;white-space:pre;-webkit-text-stroke:0.2px #ffffff;">RM3/IO: ok</div>
<div style="position:absolute;box-sizing:border-box;left:5.00px;top:510.30px;width:75.30px;height:20.90px;background:#3cb06e;border:1.3px solid #b9b9b9;border-radius:2px;box-shadow:0 0 0 0.6px rgba(40,40,40,0.45);display:flex;align-items:center;justify-content:center;padding-top:1.37px;font-size:7.6px;line-height:7.6px;font-weight:bold;color:#ffffff;letter-spacing:0.22px;white-space:pre;-webkit-text-stroke:0.2px #ffffff;"></div>
<div style="position:absolute;left:42.30px;top:513.00px;width:0.60px;height:16.00px;background:#e0f0e6;"></div>
<div style="position:absolute;left:-176.50px;top:517.00px;width:400px;text-align:center;font-size:7.6px;line-height:7.6px;color:#fff;font-weight:bold;letter-spacing:0px;white-space:pre;">Přihl.</div>
<div style="position:absolute;left:-140.00px;top:517.00px;width:400px;text-align:center;font-size:7.6px;line-height:7.6px;color:#fff;font-weight:bold;letter-spacing:0px;white-space:pre;">Odhl.</div>
<div style="position:absolute;box-sizing:border-box;left:5.00px;top:532.00px;width:75.30px;height:21.20px;background:#5f5f5f;border:1.3px solid #b9b9b9;border-radius:2px;box-shadow:0 0 0 0.6px rgba(40,40,40,0.45), inset 0 0 0 0.5px rgba(40,40,40,0.35);display:flex;align-items:center;justify-content:center;padding-top:1.37px;font-size:7.6px;line-height:7.6px;font-weight:bold;color:#ffffff;letter-spacing:0.22px;white-space:pre;-webkit-text-stroke:0.2px #ffffff;"></div>
<div style="position:absolute;left:346.20px;top:18.65px;width:400px;text-align:center;font-size:9.3px;line-height:9.3px;color:#fff;font-weight:bold;letter-spacing:-0.15px;white-space:pre;">Technologie ÚT a ohřevu TUV</div>
<div style="position:absolute;box-sizing:border-box;left:355.50px;top:39.40px;width:75.10px;height:21.60px;background:#5f5f5f;border:1.3px solid #b9b9b9;border-radius:2px;box-shadow:0 0 0 0.6px rgba(40,40,40,0.45), inset 0 0 0 0.5px rgba(40,40,40,0.35);display:flex;align-items:center;justify-content:center;padding-top:1.26px;font-size:7px;line-height:7px;font-weight:bold;color:#ffffff;letter-spacing:0px;white-space:pre;-webkit-text-stroke:0.2px #ffffff;">8,3 °C</div>
<div style="position:absolute;box-sizing:border-box;left:431.20px;top:39.40px;width:74.40px;height:21.60px;background:#5f5f5f;border:1.3px solid #b9b9b9;border-radius:2px;box-shadow:0 0 0 0.6px rgba(40,40,40,0.45), inset 0 0 0 0.5px rgba(40,40,40,0.35);display:flex;align-items:center;justify-content:center;padding-top:1.26px;font-size:7px;line-height:7px;font-weight:bold;color:#ffffff;letter-spacing:0px;white-space:pre;-webkit-text-stroke:0.2px #ffffff;">23,1 °C</div>
<div style="position:absolute;box-sizing:border-box;left:506.00px;top:39.40px;width:74.50px;height:21.60px;background:#33cc33;border:1.3px solid #b9b9b9;border-radius:2px;box-shadow:0 0 0 0.6px rgba(40,40,40,0.45);display:flex;align-items:center;justify-content:center;padding-top:1.44px;font-size:8px;line-height:8px;font-weight:bold;color:#000000;letter-spacing:0px;white-space:pre;-webkit-text-stroke:0.2px #000000;">HUP: otevřen</div>
<div style="position:absolute;box-sizing:border-box;left:581.20px;top:39.40px;width:74.50px;height:21.60px;background:#3cb06e;border:1.3px solid #b9b9b9;border-radius:2px;box-shadow:0 0 0 0.6px rgba(40,40,40,0.45);display:flex;align-items:center;justify-content:center;padding-top:1.44px;font-size:8px;line-height:8px;font-weight:bold;color:#ffffff;letter-spacing:0px;white-space:pre;-webkit-text-stroke:0.2px #ffffff;">Tab. sestava 1</div>
<div style="position:absolute;box-sizing:border-box;left:656.30px;top:39.40px;width:74.50px;height:21.60px;background:#3cb06e;border:1.3px solid #b9b9b9;border-radius:2px;box-shadow:0 0 0 0.6px rgba(40,40,40,0.45);display:flex;align-items:center;justify-content:center;padding-top:1.44px;font-size:8px;line-height:8px;font-weight:bold;color:#ffffff;letter-spacing:0px;white-space:pre;-webkit-text-stroke:0.2px #ffffff;">Tab. sestava 2</div>
<div style="position:absolute;left:268.40px;top:63.50px;width:400px;text-align:center;font-size:5.6px;line-height:5.6px;color:#fff;font-weight:bold;letter-spacing:0px;white-space:pre;">Teplota v limitu</div>
<div style="position:absolute;left:343.30px;top:63.50px;width:400px;text-align:center;font-size:5.6px;line-height:5.6px;color:#fff;font-weight:bold;letter-spacing:0px;white-space:pre;">Plyn 1. st. v limitu</div>
<div style="position:absolute;left:257.20px;top:308.80px;width:584.40px;height:10.80px;border-radius:3px;background:linear-gradient(to bottom,#e3143e 0%,#e2496a 22%,#d9c9cc 50%,#e0506e 78%,#d8163e 100%);"></div>
<div style="position:absolute;box-sizing:border-box;left:294.30px;top:97.40px;width:29.00px;height:15.80px;background:#3cb06e;border:1.3px solid #b9b9b9;border-radius:2px;box-shadow:0 0 0 0.6px rgba(40,40,40,0.45);display:flex;align-items:center;justify-content:center;padding-top:2.61px;font-size:5.8px;line-height:5.8px;font-weight:bold;color:#ffffff;letter-spacing:0px;white-space:pre;-webkit-text-stroke:0.25px #ffffff;">vVyp.</div>
<div style="position:absolute;box-sizing:border-box;left:294.30px;top:113.95px;width:29.00px;height:15.80px;background:#3cb06e;border:1.3px solid #b9b9b9;border-radius:2px;box-shadow:0 0 0 0.6px rgba(40,40,40,0.45);display:flex;align-items:center;justify-content:center;padding-top:2.61px;font-size:5.8px;line-height:5.8px;font-weight:bold;color:#ffffff;letter-spacing:0px;white-space:pre;-webkit-text-stroke:0.25px #ffffff;">vZap.</div>
<div style="position:absolute;box-sizing:border-box;left:294.30px;top:130.50px;width:29.00px;height:15.80px;background:#3cb06e;border:1.3px solid #b9b9b9;border-radius:2px;box-shadow:0 0 0 0.6px rgba(40,40,40,0.45);display:flex;align-items:center;justify-content:center;padding-top:2.61px;font-size:5.8px;line-height:5.8px;font-weight:bold;color:#ffffff;letter-spacing:0px;white-space:pre;-webkit-text-stroke:0.25px #ffffff;">Res.</div>
<div style="position:absolute;box-sizing:border-box;left:294.30px;top:147.05px;width:29.00px;height:15.80px;background:#3cb06e;border:1.3px solid #b9b9b9;border-radius:2px;box-shadow:0 0 0 0.6px rgba(40,40,40,0.45);display:flex;align-items:center;justify-content:center;padding-top:2.61px;font-size:5.8px;line-height:5.8px;font-weight:bold;color:#ffffff;letter-spacing:0px;white-space:pre;-webkit-text-stroke:0.25px #ffffff;">TP</div>
<div style="position:absolute;box-sizing:border-box;left:294.30px;top:163.60px;width:29.00px;height:15.80px;background:#3cb06e;border:1.3px solid #b9b9b9;border-radius:2px;box-shadow:0 0 0 0.6px rgba(40,40,40,0.45);display:flex;align-items:center;justify-content:center;padding-top:2.61px;font-size:5.8px;line-height:5.8px;font-weight:bold;color:#ffffff;letter-spacing:0px;white-space:pre;-webkit-text-stroke:0.25px #ffffff;">TP/zap.</div>
<div style="position:absolute;box-sizing:border-box;left:294.30px;top:180.15px;width:29.00px;height:15.80px;background:#33cc33;border:1.3px solid #b9b9b9;border-radius:2px;box-shadow:0 0 0 0.6px rgba(40,40,40,0.45);display:flex;align-items:center;justify-content:center;padding-top:2.61px;font-size:5.8px;line-height:5.8px;font-weight:bold;color:#000000;letter-spacing:0px;white-space:pre;-webkit-text-stroke:0.25px #000000;">Zap.</div>
<div style="position:absolute;box-sizing:border-box;left:294.30px;top:196.70px;width:29.00px;height:15.80px;background:#33cc33;border:1.3px solid #b9b9b9;border-radius:2px;box-shadow:0 0 0 0.6px rgba(40,40,40,0.45);display:flex;align-items:center;justify-content:center;padding-top:2.61px;font-size:5.8px;line-height:5.8px;font-weight:bold;color:#000000;letter-spacing:0px;white-space:pre;-webkit-text-stroke:0.25px #000000;">Auto</div>
<div style="position:absolute;left:108.80px;top:82.40px;width:400px;text-align:center;font-size:7.2px;line-height:7.2px;color:#fff;font-weight:bold;letter-spacing:0px;white-space:pre;">TO1</div>
<div style="position:absolute;left:108.80px;top:89.00px;width:400px;text-align:center;font-size:7.2px;line-height:7.2px;color:#fff;font-weight:bold;letter-spacing:0px;white-space:pre;">hala levá</div>
<div style="position:absolute;box-sizing:border-box;left:257.00px;top:210.30px;width:29.80px;height:15.20px;background:#5f5f5f;border:1.3px solid #b9b9b9;border-radius:2px;box-shadow:0 0 0 0.6px rgba(40,40,40,0.45), inset 0 0 0 0.5px rgba(40,40,40,0.35);display:flex;align-items:center;justify-content:center;padding-top:2.61px;font-size:5.8px;line-height:5.8px;font-weight:bold;color:#33cc33;letter-spacing:0px;white-space:pre;-webkit-text-stroke:0.25px #33cc33;">48,1 °C</div>
<div style="position:absolute;box-sizing:border-box;left:257.00px;top:226.40px;width:29.80px;height:15.70px;background:#5f5f5f;border:1.3px solid #b9b9b9;border-radius:2px;box-shadow:0 0 0 0.6px rgba(40,40,40,0.45), inset 0 0 0 0.5px rgba(40,40,40,0.35);display:flex;align-items:center;justify-content:center;padding-top:2.61px;font-size:5.8px;line-height:5.8px;font-weight:bold;color:#ffffff;letter-spacing:0px;white-space:pre;-webkit-text-stroke:0.25px #ffffff;">47,9 °C</div>
<div style="position:absolute;box-sizing:border-box;left:257.00px;top:242.80px;width:29.80px;height:16.20px;background:#33cc33;border:1.3px solid #b9b9b9;border-radius:2px;box-shadow:0 0 0 0.6px rgba(40,40,40,0.45);display:flex;align-items:center;justify-content:center;padding-top:2.61px;font-size:5.8px;line-height:5.8px;font-weight:bold;color:#000000;letter-spacing:0px;white-space:pre;-webkit-text-stroke:0.25px #000000;">Auto</div>
<div style="position:absolute;box-sizing:border-box;left:257.00px;top:276.40px;width:29.80px;height:16.10px;background:#5f5f5f;border:1.3px solid #b9b9b9;border-radius:2px;box-shadow:0 0 0 0.6px rgba(40,40,40,0.45), inset 0 0 0 0.5px rgba(40,40,40,0.35);display:flex;align-items:center;justify-content:center;padding-top:2.61px;font-size:5.8px;line-height:5.8px;font-weight:bold;color:#ffffff;letter-spacing:0px;white-space:pre;-webkit-text-stroke:0.25px #ffffff;">57 %</div>
<div style="position:absolute;box-sizing:border-box;left:326.00px;top:226.40px;width:29.70px;height:16.60px;background:#5f5f5f;border:1.3px solid #b9b9b9;border-radius:2px;box-shadow:0 0 0 0.6px rgba(40,40,40,0.45), inset 0 0 0 0.5px rgba(40,40,40,0.35);display:flex;align-items:center;justify-content:center;padding-top:2.61px;font-size:5.8px;line-height:5.8px;font-weight:bold;color:#ffffff;letter-spacing:0px;white-space:pre;-webkit-text-stroke:0.25px #ffffff;">43,3 °C</div>
<svg style="position:absolute;left:293.30px;top:216.90px;overflow:visible" width="9.00" height="6.40"><polygon points="0,6.4 4.5,0 9.0,6.4" fill="#ff0000"/></svg>
<svg style="position:absolute;left:313.80px;top:214.90px;overflow:visible" width="9.00" height="6.60"><polygon points="0,0 9.0,0 4.5,6.6" fill="#0a6cff"/></svg>
<div style="position:absolute;left:296.30px;top:225.30px;width:3.00px;height:51.20px;background:linear-gradient(to bottom,#e2143e,#e6708c 28%,#eadfe2 50%,#e6708c 72%,#e2143e);"></div>
<div style="position:absolute;left:296.30px;top:292.00px;width:3.00px;height:17.50px;background:linear-gradient(to bottom,#e2143e,#e6708c 28%,#eadfe2 50%,#e6708c 72%,#e2143e);"></div>
<div style="position:absolute;left:316.80px;top:225.30px;width:3.00px;height:84.20px;background:linear-gradient(to bottom,#4a8ccc,#8cb4dc 30%,#e2e8ee 50%,#8cb4dc 70%,#4a8ccc);"></div>
<div style="position:absolute;left:316.80px;top:309.50px;width:3.00px;height:11.00px;background:#4a8ccc;"></div>
<div style="position:absolute;left:300.30px;top:282.70px;width:18.00px;height:3.20px;background:linear-gradient(to bottom,#5a90c8,#dfe8f0 50%,#5a90c8);"></div>
<svg style="position:absolute;left:293.10px;top:275.00px;overflow:visible" width="13.40" height="18.40" viewBox="-1 -1 13.4 18.4"><polygon points="0,0 7.4,0 3.7,8.2" fill="#10a010" stroke="#111" stroke-width="0.8"/><polygon points="0,16.4 7.4,16.4 3.7,8.2" fill="#10a010" stroke="#111" stroke-width="0.8"/><polygon points="4.0,8.2 6.9,6.3999999999999995 6.9,10.0" fill="#000"/></svg>
<svg style="position:absolute;left:288.20px;top:241.50px;" width="19.20" height="19.20" viewBox="-9.6 -9.6 19.2 19.2"><circle cx="0" cy="0" r="8.299999999999999" fill="#109a10" stroke="#202020" stroke-width="0.9"/><polygon points="0.00,-8.00 6.93,4.00 -6.93,4.00" fill="#000"/></svg>
<div style="position:absolute;box-sizing:border-box;left:402.40px;top:97.40px;width:29.00px;height:15.80px;background:#3cb06e;border:1.3px solid #b9b9b9;border-radius:2px;box-shadow:0 0 0 0.6px rgba(40,40,40,0.45);display:flex;align-items:center;justify-content:center;padding-top:2.61px;font-size:5.8px;line-height:5.8px;font-weight:bold;color:#ffffff;letter-spacing:0px;white-space:pre;-webkit-text-stroke:0.25px #ffffff;">vVyp.</div>
<div style="position:absolute;box-sizing:border-box;left:402.40px;top:113.95px;width:29.00px;height:15.80px;background:#3cb06e;border:1.3px solid #b9b9b9;border-radius:2px;box-shadow:0 0 0 0.6px rgba(40,40,40,0.45);display:flex;align-items:center;justify-content:center;padding-top:2.61px;font-size:5.8px;line-height:5.8px;font-weight:bold;color:#ffffff;letter-spacing:0px;white-space:pre;-webkit-text-stroke:0.25px #ffffff;">vZap.</div>
<div style="position:absolute;box-sizing:border-box;left:402.40px;top:130.50px;width:29.00px;height:15.80px;background:#3cb06e;border:1.3px solid #b9b9b9;border-radius:2px;box-shadow:0 0 0 0.6px rgba(40,40,40,0.45);display:flex;align-items:center;justify-content:center;padding-top:2.61px;font-size:5.8px;line-height:5.8px;font-weight:bold;color:#ffffff;letter-spacing:0px;white-space:pre;-webkit-text-stroke:0.25px #ffffff;">Res.</div>
<div style="position:absolute;box-sizing:border-box;left:402.40px;top:147.05px;width:29.00px;height:15.80px;background:#3cb06e;border:1.3px solid #b9b9b9;border-radius:2px;box-shadow:0 0 0 0.6px rgba(40,40,40,0.45);display:flex;align-items:center;justify-content:center;padding-top:2.61px;font-size:5.8px;line-height:5.8px;font-weight:bold;color:#ffffff;letter-spacing:0px;white-space:pre;-webkit-text-stroke:0.25px #ffffff;">TP</div>
<div style="position:absolute;box-sizing:border-box;left:402.40px;top:163.60px;width:29.00px;height:15.80px;background:#3cb06e;border:1.3px solid #b9b9b9;border-radius:2px;box-shadow:0 0 0 0.6px rgba(40,40,40,0.45);display:flex;align-items:center;justify-content:center;padding-top:2.61px;font-size:5.8px;line-height:5.8px;font-weight:bold;color:#ffffff;letter-spacing:0px;white-space:pre;-webkit-text-stroke:0.25px #ffffff;">TP/zap.</div>
<div style="position:absolute;box-sizing:border-box;left:402.40px;top:180.15px;width:29.00px;height:15.80px;background:#33cc33;border:1.3px solid #b9b9b9;border-radius:2px;box-shadow:0 0 0 0.6px rgba(40,40,40,0.45);display:flex;align-items:center;justify-content:center;padding-top:2.61px;font-size:5.8px;line-height:5.8px;font-weight:bold;color:#000000;letter-spacing:0px;white-space:pre;-webkit-text-stroke:0.25px #000000;">Zap.</div>
<div style="position:absolute;box-sizing:border-box;left:402.40px;top:196.70px;width:29.00px;height:15.80px;background:#33cc33;border:1.3px solid #b9b9b9;border-radius:2px;box-shadow:0 0 0 0.6px rgba(40,40,40,0.45);display:flex;align-items:center;justify-content:center;padding-top:2.61px;font-size:5.8px;line-height:5.8px;font-weight:bold;color:#000000;letter-spacing:0px;white-space:pre;-webkit-text-stroke:0.25px #000000;">Auto</div>
<div style="position:absolute;left:216.90px;top:82.40px;width:400px;text-align:center;font-size:7.2px;line-height:7.2px;color:#fff;font-weight:bold;letter-spacing:0px;white-space:pre;">TO2</div>
<div style="position:absolute;left:216.90px;top:89.00px;width:400px;text-align:center;font-size:7.2px;line-height:7.2px;color:#fff;font-weight:bold;letter-spacing:0px;white-space:pre;">hala pravá</div>
<div style="position:absolute;box-sizing:border-box;left:365.10px;top:210.30px;width:29.80px;height:15.20px;background:#5f5f5f;border:1.3px solid #b9b9b9;border-radius:2px;box-shadow:0 0 0 0.6px rgba(40,40,40,0.45), inset 0 0 0 0.5px rgba(40,40,40,0.35);display:flex;align-items:center;justify-content:center;padding-top:2.61px;font-size:5.8px;line-height:5.8px;font-weight:bold;color:#33cc33;letter-spacing:0px;white-space:pre;-webkit-text-stroke:0.25px #33cc33;">48,1 °C</div>
<div style="position:absolute;box-sizing:border-box;left:365.10px;top:226.40px;width:29.80px;height:15.70px;background:#5f5f5f;border:1.3px solid #b9b9b9;border-radius:2px;box-shadow:0 0 0 0.6px rgba(40,40,40,0.45), inset 0 0 0 0.5px rgba(40,40,40,0.35);display:flex;align-items:center;justify-content:center;padding-top:2.61px;font-size:5.8px;line-height:5.8px;font-weight:bold;color:#ffffff;letter-spacing:0px;white-space:pre;-webkit-text-stroke:0.25px #ffffff;">27,0 °C</div>
<div style="position:absolute;box-sizing:border-box;left:365.10px;top:242.80px;width:29.80px;height:16.20px;background:#5f5f5f;border:1.3px solid #b9b9b9;border-radius:2px;box-shadow:0 0 0 0.6px rgba(40,40,40,0.45), inset 0 0 0 0.5px rgba(40,40,40,0.35);display:flex;align-items:center;justify-content:center;padding-top:2.61px;font-size:5.8px;line-height:5.8px;font-weight:bold;color:#ffffff;letter-spacing:0px;white-space:pre;-webkit-text-stroke:0.25px #ffffff;">Vyp.</div>
<div style="position:absolute;box-sizing:border-box;left:365.10px;top:276.40px;width:29.80px;height:16.10px;background:#5f5f5f;border:1.3px solid #b9b9b9;border-radius:2px;box-shadow:0 0 0 0.6px rgba(40,40,40,0.45), inset 0 0 0 0.5px rgba(40,40,40,0.35);display:flex;align-items:center;justify-content:center;padding-top:2.61px;font-size:5.8px;line-height:5.8px;font-weight:bold;color:#ffffff;letter-spacing:0px;white-space:pre;-webkit-text-stroke:0.25px #ffffff;">0 %</div>
<div style="position:absolute;box-sizing:border-box;left:434.10px;top:226.40px;width:29.70px;height:16.60px;background:#5f5f5f;border:1.3px solid #b9b9b9;border-radius:2px;box-shadow:0 0 0 0.6px rgba(40,40,40,0.45), inset 0 0 0 0.5px rgba(40,40,40,0.35);display:flex;align-items:center;justify-content:center;padding-top:2.61px;font-size:5.8px;line-height:5.8px;font-weight:bold;color:#ffffff;letter-spacing:0px;white-space:pre;-webkit-text-stroke:0.25px #ffffff;">29,8 °C</div>
<svg style="position:absolute;left:401.90px;top:216.90px;overflow:visible" width="9.00" height="6.40"><polygon points="0,6.4 4.5,0 9.0,6.4" fill="#ff0000"/></svg>
<svg style="position:absolute;left:422.40px;top:214.90px;overflow:visible" width="9.00" height="6.60"><polygon points="0,0 9.0,0 4.5,6.6" fill="#0a6cff"/></svg>
<div style="position:absolute;left:404.90px;top:225.30px;width:3.00px;height:51.20px;background:linear-gradient(to bottom,#e2143e,#e6708c 28%,#eadfe2 50%,#e6708c 72%,#e2143e);"></div>
<div style="position:absolute;left:404.90px;top:292.00px;width:3.00px;height:17.50px;background:linear-gradient(to bottom,#e2143e,#e6708c 28%,#eadfe2 50%,#e6708c 72%,#e2143e);"></div>
<div style="position:absolute;left:425.40px;top:225.30px;width:3.00px;height:84.20px;background:linear-gradient(to bottom,#4a8ccc,#8cb4dc 30%,#e2e8ee 50%,#8cb4dc 70%,#4a8ccc);"></div>
<div style="position:absolute;left:425.40px;top:309.50px;width:3.00px;height:11.00px;background:#4a8ccc;"></div>
<div style="position:absolute;left:408.90px;top:282.70px;width:18.00px;height:3.20px;background:linear-gradient(to bottom,#5a90c8,#dfe8f0 50%,#5a90c8);"></div>
<svg style="position:absolute;left:401.70px;top:275.00px;overflow:visible" width="13.40" height="18.40" viewBox="-1 -1 13.4 18.4"><polygon points="0,0 7.4,0 3.7,8.2" fill="#ffffff" stroke="#111" stroke-width="0.8"/><polygon points="0,16.4 7.4,16.4 3.7,8.2" fill="#ffffff" stroke="#111" stroke-width="0.8"/><polygon points="4.0,8.2 6.9,6.3999999999999995 6.9,10.0" fill="#000"/></svg>
<svg style="position:absolute;left:396.80px;top:241.50px;" width="19.20" height="19.20" viewBox="-9.6 -9.6 19.2 19.2"><circle cx="0" cy="0" r="8.299999999999999" fill="#ffffff" stroke="#202020" stroke-width="0.9"/><polygon points="0.00,-8.00 6.93,4.00 -6.93,4.00" fill="#000"/></svg>
<div style="position:absolute;box-sizing:border-box;left:511.00px;top:97.40px;width:29.00px;height:15.80px;background:#3cb06e;border:1.3px solid #b9b9b9;border-radius:2px;box-shadow:0 0 0 0.6px rgba(40,40,40,0.45);display:flex;align-items:center;justify-content:center;padding-top:2.61px;font-size:5.8px;line-height:5.8px;font-weight:bold;color:#ffffff;letter-spacing:0px;white-space:pre;-webkit-text-stroke:0.25px #ffffff;">vVyp.</div>
<div style="position:absolute;box-sizing:border-box;left:511.00px;top:113.95px;width:29.00px;height:15.80px;background:#3cb06e;border:1.3px solid #b9b9b9;border-radius:2px;box-shadow:0 0 0 0.6px rgba(40,40,40,0.45);display:flex;align-items:center;justify-content:center;padding-top:2.61px;font-size:5.8px;line-height:5.8px;font-weight:bold;color:#ffffff;letter-spacing:0px;white-space:pre;-webkit-text-stroke:0.25px #ffffff;">vZap.</div>
<div style="position:absolute;box-sizing:border-box;left:511.00px;top:130.50px;width:29.00px;height:15.80px;background:#3cb06e;border:1.3px solid #b9b9b9;border-radius:2px;box-shadow:0 0 0 0.6px rgba(40,40,40,0.45);display:flex;align-items:center;justify-content:center;padding-top:2.61px;font-size:5.8px;line-height:5.8px;font-weight:bold;color:#ffffff;letter-spacing:0px;white-space:pre;-webkit-text-stroke:0.25px #ffffff;">Res.</div>
<div style="position:absolute;box-sizing:border-box;left:511.00px;top:147.05px;width:29.00px;height:15.80px;background:#3cb06e;border:1.3px solid #b9b9b9;border-radius:2px;box-shadow:0 0 0 0.6px rgba(40,40,40,0.45);display:flex;align-items:center;justify-content:center;padding-top:2.61px;font-size:5.8px;line-height:5.8px;font-weight:bold;color:#ffffff;letter-spacing:0px;white-space:pre;-webkit-text-stroke:0.25px #ffffff;">TP</div>
<div style="position:absolute;box-sizing:border-box;left:511.00px;top:163.60px;width:29.00px;height:15.80px;background:#3cb06e;border:1.3px solid #b9b9b9;border-radius:2px;box-shadow:0 0 0 0.6px rgba(40,40,40,0.45);display:flex;align-items:center;justify-content:center;padding-top:2.61px;font-size:5.8px;line-height:5.8px;font-weight:bold;color:#ffffff;letter-spacing:0px;white-space:pre;-webkit-text-stroke:0.25px #ffffff;">TP/zap.</div>
<div style="position:absolute;box-sizing:border-box;left:511.00px;top:180.15px;width:29.00px;height:15.80px;background:#33cc33;border:1.3px solid #b9b9b9;border-radius:2px;box-shadow:0 0 0 0.6px rgba(40,40,40,0.45);display:flex;align-items:center;justify-content:center;padding-top:2.61px;font-size:5.8px;line-height:5.8px;font-weight:bold;color:#000000;letter-spacing:0px;white-space:pre;-webkit-text-stroke:0.25px #000000;">Zap.</div>
<div style="position:absolute;box-sizing:border-box;left:511.00px;top:196.70px;width:29.00px;height:15.80px;background:#33cc33;border:1.3px solid #b9b9b9;border-radius:2px;box-shadow:0 0 0 0.6px rgba(40,40,40,0.45);display:flex;align-items:center;justify-content:center;padding-top:2.61px;font-size:5.8px;line-height:5.8px;font-weight:bold;color:#000000;letter-spacing:0px;white-space:pre;-webkit-text-stroke:0.25px #000000;">Auto</div>
<div style="position:absolute;left:325.50px;top:82.40px;width:400px;text-align:center;font-size:7.2px;line-height:7.2px;color:#fff;font-weight:bold;letter-spacing:0px;white-space:pre;">TO3</div>
<div style="position:absolute;left:325.50px;top:89.00px;width:400px;text-align:center;font-size:7.2px;line-height:7.2px;color:#fff;font-weight:bold;letter-spacing:0px;white-space:pre;">zázemí</div>
<div style="position:absolute;box-sizing:border-box;left:473.70px;top:210.30px;width:29.80px;height:15.20px;background:#5f5f5f;border:1.3px solid #b9b9b9;border-radius:2px;box-shadow:0 0 0 0.6px rgba(40,40,40,0.45), inset 0 0 0 0.5px rgba(40,40,40,0.35);display:flex;align-items:center;justify-content:center;padding-top:2.61px;font-size:5.8px;line-height:5.8px;font-weight:bold;color:#33cc33;letter-spacing:0px;white-space:pre;-webkit-text-stroke:0.25px #33cc33;">48,1 °C</div>
<div style="position:absolute;box-sizing:border-box;left:473.70px;top:226.40px;width:29.80px;height:15.70px;background:#5f5f5f;border:1.3px solid #b9b9b9;border-radius:2px;box-shadow:0 0 0 0.6px rgba(40,40,40,0.45), inset 0 0 0 0.5px rgba(40,40,40,0.35);display:flex;align-items:center;justify-content:center;padding-top:2.61px;font-size:5.8px;line-height:5.8px;font-weight:bold;color:#ffffff;letter-spacing:0px;white-space:pre;-webkit-text-stroke:0.25px #ffffff;">47,5 °C</div>
<div style="position:absolute;box-sizing:border-box;left:473.70px;top:242.80px;width:29.80px;height:16.20px;background:#33cc33;border:1.3px solid #b9b9b9;border-radius:2px;box-shadow:0 0 0 0.6px rgba(40,40,40,0.45);display:flex;align-items:center;justify-content:center;padding-top:2.61px;font-size:5.8px;line-height:5.8px;font-weight:bold;color:#000000;letter-spacing:0px;white-space:pre;-webkit-text-stroke:0.25px #000000;">Auto</div>
<div style="position:absolute;box-sizing:border-box;left:473.70px;top:276.40px;width:29.80px;height:16.10px;background:#5f5f5f;border:1.3px solid #b9b9b9;border-radius:2px;box-shadow:0 0 0 0.6px rgba(40,40,40,0.45), inset 0 0 0 0.5px rgba(40,40,40,0.35);display:flex;align-items:center;justify-content:center;padding-top:2.61px;font-size:5.8px;line-height:5.8px;font-weight:bold;color:#ffffff;letter-spacing:0px;white-space:pre;-webkit-text-stroke:0.25px #ffffff;">58 %</div>
<div style="position:absolute;box-sizing:border-box;left:542.70px;top:226.40px;width:29.70px;height:16.60px;background:#5f5f5f;border:1.3px solid #b9b9b9;border-radius:2px;box-shadow:0 0 0 0.6px rgba(40,40,40,0.45), inset 0 0 0 0.5px rgba(40,40,40,0.35);display:flex;align-items:center;justify-content:center;padding-top:2.61px;font-size:5.8px;line-height:5.8px;font-weight:bold;color:#ffffff;letter-spacing:0px;white-space:pre;-webkit-text-stroke:0.25px #ffffff;">43,9 °C</div>
<svg style="position:absolute;left:511.00px;top:216.90px;overflow:visible" width="9.00" height="6.40"><polygon points="0,6.4 4.5,0 9.0,6.4" fill="#ff0000"/></svg>
<svg style="position:absolute;left:531.50px;top:214.90px;overflow:visible" width="9.00" height="6.60"><polygon points="0,0 9.0,0 4.5,6.6" fill="#0a6cff"/></svg>
<div style="position:absolute;left:514.00px;top:225.30px;width:3.00px;height:51.20px;background:linear-gradient(to bottom,#e2143e,#e6708c 28%,#eadfe2 50%,#e6708c 72%,#e2143e);"></div>
<div style="position:absolute;left:514.00px;top:292.00px;width:3.00px;height:17.50px;background:linear-gradient(to bottom,#e2143e,#e6708c 28%,#eadfe2 50%,#e6708c 72%,#e2143e);"></div>
<div style="position:absolute;left:534.50px;top:225.30px;width:3.00px;height:84.20px;background:linear-gradient(to bottom,#4a8ccc,#8cb4dc 30%,#e2e8ee 50%,#8cb4dc 70%,#4a8ccc);"></div>
<div style="position:absolute;left:534.50px;top:309.50px;width:3.00px;height:11.00px;background:#4a8ccc;"></div>
<div style="position:absolute;left:518.00px;top:282.70px;width:18.00px;height:3.20px;background:linear-gradient(to bottom,#5a90c8,#dfe8f0 50%,#5a90c8);"></div>
<svg style="position:absolute;left:510.80px;top:275.00px;overflow:visible" width="13.40" height="18.40" viewBox="-1 -1 13.4 18.4"><polygon points="0,0 7.4,0 3.7,8.2" fill="#10a010" stroke="#111" stroke-width="0.8"/><polygon points="0,16.4 7.4,16.4 3.7,8.2" fill="#10a010" stroke="#111" stroke-width="0.8"/><polygon points="4.0,8.2 6.9,6.3999999999999995 6.9,10.0" fill="#000"/></svg>
<svg style="position:absolute;left:505.90px;top:241.50px;" width="19.20" height="19.20" viewBox="-9.6 -9.6 19.2 19.2"><circle cx="0" cy="0" r="8.299999999999999" fill="#109a10" stroke="#202020" stroke-width="0.9"/><polygon points="0.00,-8.00 6.93,4.00 -6.93,4.00" fill="#000"/></svg>
<div style="position:absolute;box-sizing:border-box;left:620.00px;top:97.40px;width:29.00px;height:15.80px;background:#3cb06e;border:1.3px solid #b9b9b9;border-radius:2px;box-shadow:0 0 0 0.6px rgba(40,40,40,0.45);display:flex;align-items:center;justify-content:center;padding-top:2.61px;font-size:5.8px;line-height:5.8px;font-weight:bold;color:#ffffff;letter-spacing:0px;white-space:pre;-webkit-text-stroke:0.25px #ffffff;">vVyp.</div>
<div style="position:absolute;box-sizing:border-box;left:620.00px;top:113.95px;width:29.00px;height:15.80px;background:#3cb06e;border:1.3px solid #b9b9b9;border-radius:2px;box-shadow:0 0 0 0.6px rgba(40,40,40,0.45);display:flex;align-items:center;justify-content:center;padding-top:2.61px;font-size:5.8px;line-height:5.8px;font-weight:bold;color:#ffffff;letter-spacing:0px;white-space:pre;-webkit-text-stroke:0.25px #ffffff;">vZap.</div>
<div style="position:absolute;box-sizing:border-box;left:620.00px;top:130.50px;width:29.00px;height:15.80px;background:#3cb06e;border:1.3px solid #b9b9b9;border-radius:2px;box-shadow:0 0 0 0.6px rgba(40,40,40,0.45);display:flex;align-items:center;justify-content:center;padding-top:2.61px;font-size:5.8px;line-height:5.8px;font-weight:bold;color:#ffffff;letter-spacing:0px;white-space:pre;-webkit-text-stroke:0.25px #ffffff;">Res.</div>
<div style="position:absolute;box-sizing:border-box;left:620.00px;top:147.05px;width:29.00px;height:15.80px;background:#3cb06e;border:1.3px solid #b9b9b9;border-radius:2px;box-shadow:0 0 0 0.6px rgba(40,40,40,0.45);display:flex;align-items:center;justify-content:center;padding-top:2.61px;font-size:5.8px;line-height:5.8px;font-weight:bold;color:#ffffff;letter-spacing:0px;white-space:pre;-webkit-text-stroke:0.25px #ffffff;">TP</div>
<div style="position:absolute;box-sizing:border-box;left:620.00px;top:163.60px;width:29.00px;height:15.80px;background:#3cb06e;border:1.3px solid #b9b9b9;border-radius:2px;box-shadow:0 0 0 0.6px rgba(40,40,40,0.45);display:flex;align-items:center;justify-content:center;padding-top:2.61px;font-size:5.8px;line-height:5.8px;font-weight:bold;color:#ffffff;letter-spacing:0px;white-space:pre;-webkit-text-stroke:0.25px #ffffff;">TP/zap.</div>
<div style="position:absolute;box-sizing:border-box;left:620.00px;top:180.15px;width:29.00px;height:15.80px;background:#33cc33;border:1.3px solid #b9b9b9;border-radius:2px;box-shadow:0 0 0 0.6px rgba(40,40,40,0.45);display:flex;align-items:center;justify-content:center;padding-top:2.61px;font-size:5.8px;line-height:5.8px;font-weight:bold;color:#000000;letter-spacing:0px;white-space:pre;-webkit-text-stroke:0.25px #000000;">Zap.</div>
<div style="position:absolute;box-sizing:border-box;left:620.00px;top:196.70px;width:29.00px;height:15.80px;background:#33cc33;border:1.3px solid #b9b9b9;border-radius:2px;box-shadow:0 0 0 0.6px rgba(40,40,40,0.45);display:flex;align-items:center;justify-content:center;padding-top:2.61px;font-size:5.8px;line-height:5.8px;font-weight:bold;color:#000000;letter-spacing:0px;white-space:pre;-webkit-text-stroke:0.25px #000000;">Auto</div>
<div style="position:absolute;left:434.50px;top:82.40px;width:400px;text-align:center;font-size:7.2px;line-height:7.2px;color:#fff;font-weight:bold;letter-spacing:0px;white-space:pre;">TO4</div>
<div style="position:absolute;left:434.50px;top:89.00px;width:400px;text-align:center;font-size:7.2px;line-height:7.2px;color:#fff;font-weight:bold;letter-spacing:0px;white-space:pre;">TUV</div>
<div style="position:absolute;box-sizing:border-box;left:582.70px;top:226.40px;width:29.80px;height:15.70px;background:#5f5f5f;border:1.3px solid #b9b9b9;border-radius:2px;box-shadow:0 0 0 0.6px rgba(40,40,40,0.45), inset 0 0 0 0.5px rgba(40,40,40,0.35);display:flex;align-items:center;justify-content:center;padding-top:2.61px;font-size:5.8px;line-height:5.8px;font-weight:bold;color:#ffffff;letter-spacing:0px;white-space:pre;-webkit-text-stroke:0.25px #ffffff;">50,9 °C</div>
<div style="position:absolute;box-sizing:border-box;left:582.70px;top:242.80px;width:29.80px;height:16.20px;background:#33cc33;border:1.3px solid #b9b9b9;border-radius:2px;box-shadow:0 0 0 0.6px rgba(40,40,40,0.45);display:flex;align-items:center;justify-content:center;padding-top:2.61px;font-size:5.8px;line-height:5.8px;font-weight:bold;color:#000000;letter-spacing:0px;white-space:pre;-webkit-text-stroke:0.25px #000000;">Auto</div>
<svg style="position:absolute;left:619.80px;top:216.90px;overflow:visible" width="9.00" height="6.40"><polygon points="0,6.4 4.5,0 9.0,6.4" fill="#ff0000"/></svg>
<svg style="position:absolute;left:640.30px;top:214.90px;overflow:visible" width="9.00" height="6.60"><polygon points="0,0 9.0,0 4.5,6.6" fill="#0a6cff"/></svg>
<div style="position:absolute;left:622.80px;top:225.30px;width:3.00px;height:84.20px;background:linear-gradient(to bottom,#e2143e,#e6708c 28%,#eadfe2 50%,#e6708c 72%,#e2143e);"></div>
<div style="position:absolute;left:643.30px;top:225.30px;width:3.00px;height:84.20px;background:linear-gradient(to bottom,#4a8ccc,#8cb4dc 30%,#e2e8ee 50%,#8cb4dc 70%,#4a8ccc);"></div>
<div style="position:absolute;left:643.30px;top:309.50px;width:3.00px;height:11.00px;background:#4a8ccc;"></div>
<svg style="position:absolute;left:614.70px;top:241.50px;" width="19.20" height="19.20" viewBox="-9.6 -9.6 19.2 19.2"><circle cx="0" cy="0" r="8.299999999999999" fill="#109a10" stroke="#202020" stroke-width="0.9"/><polygon points="0.00,-8.00 6.93,4.00 -6.93,4.00" fill="#000"/></svg>
<div style="position:absolute;box-sizing:border-box;left:661.00px;top:226.40px;width:29.80px;height:15.70px;background:#5f5f5f;border:1.3px solid #b9b9b9;border-radius:2px;box-shadow:0 0 0 0.6px rgba(40,40,40,0.45), inset 0 0 0 0.5px rgba(40,40,40,0.35);display:flex;align-items:center;justify-content:center;padding-top:2.61px;font-size:5.8px;line-height:5.8px;font-weight:bold;color:#ffffff;letter-spacing:0px;white-space:pre;-webkit-text-stroke:0.25px #ffffff;">31,1 °C</div>
<div style="position:absolute;box-sizing:border-box;left:661.00px;top:242.80px;width:29.80px;height:16.20px;background:#33cc33;border:1.3px solid #b9b9b9;border-radius:2px;box-shadow:0 0 0 0.6px rgba(40,40,40,0.45);display:flex;align-items:center;justify-content:center;padding-top:2.61px;font-size:5.8px;line-height:5.8px;font-weight:bold;color:#000000;letter-spacing:0px;white-space:pre;-webkit-text-stroke:0.25px #000000;">Auto</div>
<svg style="position:absolute;left:697.20px;top:215.60px;overflow:visible" width="9.00" height="6.40"><polygon points="0,6.4 4.5,0 9.0,6.4" fill="#ff0000"/></svg>
<svg style="position:absolute;left:717.70px;top:216.70px;overflow:visible" width="9.00" height="6.60"><polygon points="0,0 9.0,0 4.5,6.6" fill="#0a6cff"/></svg>
<div style="position:absolute;left:700.20px;top:225.30px;width:3.00px;height:84.20px;background:linear-gradient(to bottom,#e2143e,#e6708c 28%,#eadfe2 50%,#e6708c 72%,#e2143e);"></div>
<div style="position:absolute;left:720.70px;top:225.30px;width:3.00px;height:84.20px;background:linear-gradient(to bottom,#4a8ccc,#8cb4dc 30%,#e2e8ee 50%,#8cb4dc 70%,#4a8ccc);"></div>
<div style="position:absolute;left:720.70px;top:309.50px;width:3.00px;height:11.00px;background:#4a8ccc;"></div>
<svg style="position:absolute;left:692.10px;top:241.50px;" width="19.20" height="19.20" viewBox="-9.6 -9.6 19.2 19.2"><circle cx="0" cy="0" r="8.299999999999999" fill="#ffffff" stroke="#202020" stroke-width="0.9"/><polygon points="0.00,-8.00 6.93,4.00 -6.93,4.00" fill="#000"/></svg>
<div style="position:absolute;left:511.60px;top:190.40px;width:400px;text-align:center;font-size:5.6px;line-height:5.6px;color:#fff;font-weight:bold;letter-spacing:0px;white-space:pre;">RM1 &lt;-&gt; RM2</div>
<div style="position:absolute;left:511.60px;top:198.60px;width:400px;text-align:center;font-size:6.8px;line-height:6.8px;color:#fff;font-weight:bold;letter-spacing:0px;white-space:pre;">TO5</div>
<div style="position:absolute;left:511.60px;top:205.60px;width:400px;text-align:center;font-size:6.8px;line-height:6.8px;color:#fff;font-weight:bold;letter-spacing:0px;white-space:pre;">VZT</div>
<div style="position:absolute;box-sizing:border-box;left:776.25px;top:97.40px;width:29.00px;height:15.80px;background:#3cb06e;border:1.3px solid #b9b9b9;border-radius:2px;box-shadow:0 0 0 0.6px rgba(40,40,40,0.45);display:flex;align-items:center;justify-content:center;padding-top:2.61px;font-size:5.8px;line-height:5.8px;font-weight:bold;color:#ffffff;letter-spacing:0px;white-space:pre;-webkit-text-stroke:0.25px #ffffff;">vVyp.</div>
<div style="position:absolute;box-sizing:border-box;left:776.25px;top:113.95px;width:29.00px;height:15.80px;background:#3cb06e;border:1.3px solid #b9b9b9;border-radius:2px;box-shadow:0 0 0 0.6px rgba(40,40,40,0.45);display:flex;align-items:center;justify-content:center;padding-top:2.61px;font-size:5.8px;line-height:5.8px;font-weight:bold;color:#ffffff;letter-spacing:0px;white-space:pre;-webkit-text-stroke:0.25px #ffffff;">vZap.</div>
<div style="position:absolute;box-sizing:border-box;left:776.25px;top:130.50px;width:29.00px;height:15.80px;background:#3cb06e;border:1.3px solid #b9b9b9;border-radius:2px;box-shadow:0 0 0 0.6px rgba(40,40,40,0.45);display:flex;align-items:center;justify-content:center;padding-top:2.61px;font-size:5.8px;line-height:5.8px;font-weight:bold;color:#ffffff;letter-spacing:0px;white-space:pre;-webkit-text-stroke:0.25px #ffffff;">Res.</div>
<div style="position:absolute;box-sizing:border-box;left:776.25px;top:147.05px;width:29.00px;height:15.80px;background:#3cb06e;border:1.3px solid #b9b9b9;border-radius:2px;box-shadow:0 0 0 0.6px rgba(40,40,40,0.45);display:flex;align-items:center;justify-content:center;padding-top:2.61px;font-size:5.8px;line-height:5.8px;font-weight:bold;color:#ffffff;letter-spacing:0px;white-space:pre;-webkit-text-stroke:0.25px #ffffff;">TP</div>
<div style="position:absolute;box-sizing:border-box;left:776.25px;top:163.60px;width:29.00px;height:15.80px;background:#3cb06e;border:1.3px solid #b9b9b9;border-radius:2px;box-shadow:0 0 0 0.6px rgba(40,40,40,0.45);display:flex;align-items:center;justify-content:center;padding-top:2.61px;font-size:5.8px;line-height:5.8px;font-weight:bold;color:#ffffff;letter-spacing:0px;white-space:pre;-webkit-text-stroke:0.25px #ffffff;">TP/zap.</div>
<div style="position:absolute;box-sizing:border-box;left:776.25px;top:180.15px;width:29.00px;height:15.80px;background:#33cc33;border:1.3px solid #b9b9b9;border-radius:2px;box-shadow:0 0 0 0.6px rgba(40,40,40,0.45);display:flex;align-items:center;justify-content:center;padding-top:2.61px;font-size:5.8px;line-height:5.8px;font-weight:bold;color:#000000;letter-spacing:0px;white-space:pre;-webkit-text-stroke:0.25px #000000;">Zap.</div>
<div style="position:absolute;box-sizing:border-box;left:776.25px;top:196.70px;width:29.00px;height:15.80px;background:#33cc33;border:1.3px solid #b9b9b9;border-radius:2px;box-shadow:0 0 0 0.6px rgba(40,40,40,0.45);display:flex;align-items:center;justify-content:center;padding-top:2.61px;font-size:5.8px;line-height:5.8px;font-weight:bold;color:#000000;letter-spacing:0px;white-space:pre;-webkit-text-stroke:0.25px #000000;">Auto</div>
<div style="position:absolute;left:590.75px;top:82.40px;width:400px;text-align:center;font-size:7.2px;line-height:7.2px;color:#fff;font-weight:bold;letter-spacing:0px;white-space:pre;">TO6</div>
<div style="position:absolute;left:590.75px;top:89.00px;width:400px;text-align:center;font-size:7.2px;line-height:7.2px;color:#fff;font-weight:bold;letter-spacing:0px;white-space:pre;">šatny</div>
<div style="position:absolute;box-sizing:border-box;left:738.95px;top:210.30px;width:29.80px;height:15.20px;background:#5f5f5f;border:1.3px solid #b9b9b9;border-radius:2px;box-shadow:0 0 0 0.6px rgba(40,40,40,0.45), inset 0 0 0 0.5px rgba(40,40,40,0.35);display:flex;align-items:center;justify-content:center;padding-top:2.61px;font-size:5.8px;line-height:5.8px;font-weight:bold;color:#33cc33;letter-spacing:0px;white-space:pre;-webkit-text-stroke:0.25px #33cc33;">48,1 °C</div>
<div style="position:absolute;box-sizing:border-box;left:738.95px;top:226.40px;width:29.80px;height:15.70px;background:#5f5f5f;border:1.3px solid #b9b9b9;border-radius:2px;box-shadow:0 0 0 0.6px rgba(40,40,40,0.45), inset 0 0 0 0.5px rgba(40,40,40,0.35);display:flex;align-items:center;justify-content:center;padding-top:2.61px;font-size:5.8px;line-height:5.8px;font-weight:bold;color:#ffffff;letter-spacing:0px;white-space:pre;-webkit-text-stroke:0.25px #ffffff;">47,9 °C</div>
<div style="position:absolute;box-sizing:border-box;left:738.95px;top:242.80px;width:29.80px;height:16.20px;background:#33cc33;border:1.3px solid #b9b9b9;border-radius:2px;box-shadow:0 0 0 0.6px rgba(40,40,40,0.45);display:flex;align-items:center;justify-content:center;padding-top:2.61px;font-size:5.8px;line-height:5.8px;font-weight:bold;color:#000000;letter-spacing:0px;white-space:pre;-webkit-text-stroke:0.25px #000000;">Auto</div>
<div style="position:absolute;box-sizing:border-box;left:738.95px;top:276.40px;width:29.80px;height:16.10px;background:#5f5f5f;border:1.3px solid #b9b9b9;border-radius:2px;box-shadow:0 0 0 0.6px rgba(40,40,40,0.45), inset 0 0 0 0.5px rgba(40,40,40,0.35);display:flex;align-items:center;justify-content:center;padding-top:2.61px;font-size:5.8px;line-height:5.8px;font-weight:bold;color:#ffffff;letter-spacing:0px;white-space:pre;-webkit-text-stroke:0.25px #ffffff;">58 %</div>
<div style="position:absolute;box-sizing:border-box;left:807.95px;top:226.40px;width:29.70px;height:16.60px;background:#5f5f5f;border:1.3px solid #b9b9b9;border-radius:2px;box-shadow:0 0 0 0.6px rgba(40,40,40,0.45), inset 0 0 0 0.5px rgba(40,40,40,0.35);display:flex;align-items:center;justify-content:center;padding-top:2.61px;font-size:5.8px;line-height:5.8px;font-weight:bold;color:#ffffff;letter-spacing:0px;white-space:pre;-webkit-text-stroke:0.25px #ffffff;">44,6 °C</div>
<svg style="position:absolute;left:775.50px;top:216.90px;overflow:visible" width="9.00" height="6.40"><polygon points="0,6.4 4.5,0 9.0,6.4" fill="#ff0000"/></svg>
<svg style="position:absolute;left:796.00px;top:214.90px;overflow:visible" width="9.00" height="6.60"><polygon points="0,0 9.0,0 4.5,6.6" fill="#0a6cff"/></svg>
<div style="position:absolute;left:778.50px;top:225.30px;width:3.00px;height:51.20px;background:linear-gradient(to bottom,#e2143e,#e6708c 28%,#eadfe2 50%,#e6708c 72%,#e2143e);"></div>
<div style="position:absolute;left:778.50px;top:292.00px;width:3.00px;height:17.50px;background:linear-gradient(to bottom,#e2143e,#e6708c 28%,#eadfe2 50%,#e6708c 72%,#e2143e);"></div>
<div style="position:absolute;left:799.00px;top:225.30px;width:3.00px;height:84.20px;background:linear-gradient(to bottom,#4a8ccc,#8cb4dc 30%,#e2e8ee 50%,#8cb4dc 70%,#4a8ccc);"></div>
<div style="position:absolute;left:799.00px;top:309.50px;width:3.00px;height:11.00px;background:#4a8ccc;"></div>
<div style="position:absolute;left:782.50px;top:282.70px;width:18.00px;height:3.20px;background:linear-gradient(to bottom,#5a90c8,#dfe8f0 50%,#5a90c8);"></div>
<svg style="position:absolute;left:775.30px;top:275.00px;overflow:visible" width="13.40" height="18.40" viewBox="-1 -1 13.4 18.4"><polygon points="0,0 7.4,0 3.7,8.2" fill="#10a010" stroke="#111" stroke-width="0.8"/><polygon points="0,16.4 7.4,16.4 3.7,8.2" fill="#10a010" stroke="#111" stroke-width="0.8"/><polygon points="4.0,8.2 6.9,6.3999999999999995 6.9,10.0" fill="#000"/></svg>
<svg style="position:absolute;left:770.40px;top:241.50px;" width="19.20" height="19.20" viewBox="-9.6 -9.6 19.2 19.2"><circle cx="0" cy="0" r="8.299999999999999" fill="#109a10" stroke="#202020" stroke-width="0.9"/><polygon points="0.00,-8.00 6.93,4.00 -6.93,4.00" fill="#000"/></svg>
<div style="position:absolute;left:263.40px;top:320.00px;width:584.40px;height:11.00px;border-radius:3px;background:linear-gradient(to bottom,#3a86cf 0%,#6aa2d6 22%,#d5d7d9 50%,#73a6d6 78%,#3a82c8 100%);"></div>
<div style="position:absolute;box-sizing:border-box;left:257.20px;top:333.00px;width:29.20px;height:16.70px;background:#5f5f5f;border:1.3px solid #b9b9b9;border-radius:2px;box-shadow:0 0 0 0.6px rgba(40,40,40,0.45), inset 0 0 0 0.5px rgba(40,40,40,0.35);display:flex;align-items:center;justify-content:center;padding-top:2.61px;font-size:5.8px;line-height:5.8px;font-weight:bold;color:#ffffff;letter-spacing:0px;white-space:pre;-webkit-text-stroke:0.25px #ffffff;">2,0 bar</div>
<svg style="position:absolute;left:0;top:0;width:0;height:0"><defs><linearGradient id="tbody" x1="0" x2="1" y1="0" y2="0"><stop offset="0" stop-color="#c9c0ae"/><stop offset="0.1" stop-color="#d9d1c0"/><stop offset="0.45" stop-color="#e5ded0"/><stop offset="0.9" stop-color="#d9d1c0"/><stop offset="1" stop-color="#c6bdab"/></linearGradient><linearGradient id="tdome" x1="0" x2="0" y1="0" y2="1"><stop offset="0" stop-color="#efe8da"/><stop offset="1" stop-color="#d9d0be"/></linearGradient><linearGradient id="coilred" x1="0" x2="1" y1="0" y2="0"><stop offset="0" stop-color="#e00c0c"/><stop offset="0.5" stop-color="#ff1a1a"/><stop offset="1" stop-color="#e00c0c"/></linearGradient><linearGradient id="coilgray" x1="0" x2="1" y1="0" y2="0"><stop offset="0" stop-color="#6c6c70"/><stop offset="0.5" stop-color="#86868a"/><stop offset="1" stop-color="#707074"/></linearGradient></defs></svg>
<svg style="position:absolute;left:0;top:0;" width="1024" height="576" viewBox="0 0 1024 576">
<path d="M 398.8 382 Q 431.6 367.5 464.4 382 Z" fill="url(#tdome)"/>
<path d="M 394.8 384 L 468.4 384 L 468.4 496.5 A 36.79999999999998 9.2 0 0 1 394.8 496.5 Z" fill="url(#tbody)"/>
<path d="M 394.8 381.8 Q 431.6 376.5 468.4 381.8 L 468.4 387 Q 431.6 381.6 394.8 387 Z" fill="#b9080e"/>
<path d="M 394.8 495.8 A 36.79999999999998 9.2 0 0 0 468.4 495.8 L 468.4 502.4 A 36.79999999999998 8.4 0 0 1 394.8 502.4 Z" fill="#b3060c"/>
<rect x="415.4" y="415.9" width="33.4" height="58" fill="#a8060a"/>
<rect x="416.2" y="416.7" width="31.799999999999997" height="56.4" fill="#e80e0e"/>
<rect x="416.2" y="419.70" width="15.199999999999989" height="1.4" fill="#ff2a2a"/>
<rect x="416.59999999999997" y="421.60" width="14.799999999999988" height="3.7" fill="url(#coilgray)"/>
<path d="M 432.2 422.10 L 447.79999999999995 420.80 L 447.79999999999995 424.60 L 432.2 425.20 Z" fill="url(#coilgray)"/>
<rect x="430.59999999999997" y="421.60" width="1.6" height="3.7" fill="#3c494b"/>
<rect x="416.2" y="426.48" width="15.199999999999989" height="1.4" fill="#ff2a2a"/>
<rect x="416.59999999999997" y="428.38" width="14.799999999999988" height="3.7" fill="url(#coilgray)"/>
<path d="M 432.2 428.88 L 447.79999999999995 427.58 L 447.79999999999995 431.38 L 432.2 431.98 Z" fill="url(#coilgray)"/>
<rect x="430.59999999999997" y="428.38" width="1.6" height="3.7" fill="#3c494b"/>
<rect x="416.2" y="433.26" width="15.199999999999989" height="1.4" fill="#ff2a2a"/>
<rect x="416.59999999999997" y="435.16" width="14.799999999999988" height="3.7" fill="url(#coilgray)"/>
<path d="M 432.2 435.66 L 447.79999999999995 434.36 L 447.79999999999995 438.16 L 432.2 438.76 Z" fill="url(#coilgray)"/>
<rect x="430.59999999999997" y="435.16" width="1.6" height="3.7" fill="#3c494b"/>
<rect x="416.2" y="440.04" width="15.199999999999989" height="1.4" fill="#ff2a2a"/>
<rect x="416.59999999999997" y="441.94" width="14.799999999999988" height="3.7" fill="url(#coilgray)"/>
<path d="M 432.2 442.44 L 447.79999999999995 441.14 L 447.79999999999995 444.94 L 432.2 445.54 Z" fill="url(#coilgray)"/>
<rect x="430.59999999999997" y="441.94" width="1.6" height="3.7" fill="#3c494b"/>
<rect x="416.2" y="446.82" width="15.199999999999989" height="1.4" fill="#ff2a2a"/>
<rect x="416.59999999999997" y="448.72" width="14.799999999999988" height="3.7" fill="url(#coilgray)"/>
<path d="M 432.2 449.22 L 447.79999999999995 447.92 L 447.79999999999995 451.72 L 432.2 452.32 Z" fill="url(#coilgray)"/>
<rect x="430.59999999999997" y="448.72" width="1.6" height="3.7" fill="#3c494b"/>
<rect x="416.2" y="453.60" width="15.199999999999989" height="1.4" fill="#ff2a2a"/>
<rect x="416.59999999999997" y="455.50" width="14.799999999999988" height="3.7" fill="url(#coilgray)"/>
<path d="M 432.2 456.00 L 447.79999999999995 454.70 L 447.79999999999995 458.50 L 432.2 459.10 Z" fill="url(#coilgray)"/>
<rect x="430.59999999999997" y="455.50" width="1.6" height="3.7" fill="#3c494b"/>
<rect x="416.2" y="460.38" width="15.199999999999989" height="1.4" fill="#ff2a2a"/>
<rect x="416.59999999999997" y="462.28" width="14.799999999999988" height="3.7" fill="url(#coilgray)"/>
<path d="M 432.2 462.78 L 447.79999999999995 461.48 L 447.79999999999995 465.28 L 432.2 465.88 Z" fill="url(#coilgray)"/>
<rect x="430.59999999999997" y="462.28" width="1.6" height="3.7" fill="#3c494b"/>
<rect x="416.2" y="467.16" width="15.199999999999989" height="1.4" fill="#ff2a2a"/>
<rect x="416.59999999999997" y="469.06" width="14.799999999999988" height="3.7" fill="url(#coilgray)"/>
<path d="M 432.2 469.56 L 447.79999999999995 468.26 L 447.79999999999995 472.06 L 432.2 472.66 Z" fill="url(#coilgray)"/>
<rect x="430.59999999999997" y="469.06" width="1.6" height="3.7" fill="#3c494b"/>
</svg>
<svg style="position:absolute;left:0;top:0;" width="1024" height="576" viewBox="0 0 1024 576">
<path d="M 708.0 382 Q 740.8 367.5 773.6 382 Z" fill="url(#tdome)"/>
<path d="M 704.0 384 L 777.6 384 L 777.6 496.5 A 36.80000000000001 9.2 0 0 1 704.0 496.5 Z" fill="url(#tbody)"/>
<path d="M 704.0 381.8 Q 740.8 376.5 777.6 381.8 L 777.6 387 Q 740.8 381.6 704.0 387 Z" fill="#b9080e"/>
<path d="M 704.0 495.8 A 36.80000000000001 9.2 0 0 0 777.6 495.8 L 777.6 502.4 A 36.80000000000001 8.4 0 0 1 704.0 502.4 Z" fill="#b3060c"/>
<rect x="724.7" y="415.9" width="33.4" height="58" fill="#a8060a"/>
<rect x="725.5" y="416.7" width="31.799999999999997" height="56.4" fill="#e80e0e"/>
<rect x="725.5" y="419.70" width="15.200000000000045" height="1.4" fill="#ff2a2a"/>
<rect x="725.9" y="421.60" width="14.800000000000045" height="3.7" fill="url(#coilgray)"/>
<path d="M 741.5 422.10 L 757.1 420.80 L 757.1 424.60 L 741.5 425.20 Z" fill="url(#coilgray)"/>
<rect x="739.9000000000001" y="421.60" width="1.6" height="3.7" fill="#3c494b"/>
<rect x="725.5" y="426.48" width="15.200000000000045" height="1.4" fill="#ff2a2a"/>
<rect x="725.9" y="428.38" width="14.800000000000045" height="3.7" fill="url(#coilgray)"/>
<path d="M 741.5 428.88 L 757.1 427.58 L 757.1 431.38 L 741.5 431.98 Z" fill="url(#coilgray)"/>
<rect x="739.9000000000001" y="428.38" width="1.6" height="3.7" fill="#3c494b"/>
<rect x="725.5" y="433.26" width="15.200000000000045" height="1.4" fill="#ff2a2a"/>
<rect x="725.9" y="435.16" width="14.800000000000045" height="3.7" fill="url(#coilgray)"/>
<path d="M 741.5 435.66 L 757.1 434.36 L 757.1 438.16 L 741.5 438.76 Z" fill="url(#coilgray)"/>
<rect x="739.9000000000001" y="435.16" width="1.6" height="3.7" fill="#3c494b"/>
<rect x="725.5" y="440.04" width="15.200000000000045" height="1.4" fill="#ff2a2a"/>
<rect x="725.9" y="441.94" width="14.800000000000045" height="3.7" fill="url(#coilgray)"/>
<path d="M 741.5 442.44 L 757.1 441.14 L 757.1 444.94 L 741.5 445.54 Z" fill="url(#coilgray)"/>
<rect x="739.9000000000001" y="441.94" width="1.6" height="3.7" fill="#3c494b"/>
<rect x="725.5" y="446.82" width="15.200000000000045" height="1.4" fill="#ff2a2a"/>
<rect x="725.9" y="448.72" width="14.800000000000045" height="3.7" fill="url(#coilgray)"/>
<path d="M 741.5 449.22 L 757.1 447.92 L 757.1 451.72 L 741.5 452.32 Z" fill="url(#coilgray)"/>
<rect x="739.9000000000001" y="448.72" width="1.6" height="3.7" fill="#3c494b"/>
<rect x="725.5" y="453.60" width="15.200000000000045" height="1.4" fill="#ff2a2a"/>
<rect x="725.9" y="455.50" width="14.800000000000045" height="3.7" fill="url(#coilgray)"/>
<path d="M 741.5 456.00 L 757.1 454.70 L 757.1 458.50 L 741.5 459.10 Z" fill="url(#coilgray)"/>
<rect x="739.9000000000001" y="455.50" width="1.6" height="3.7" fill="#3c494b"/>
<rect x="725.5" y="460.38" width="15.200000000000045" height="1.4" fill="#ff2a2a"/>
<rect x="725.9" y="462.28" width="14.800000000000045" height="3.7" fill="url(#coilgray)"/>
<path d="M 741.5 462.78 L 757.1 461.48 L 757.1 465.28 L 741.5 465.88 Z" fill="url(#coilgray)"/>
<rect x="739.9000000000001" y="462.28" width="1.6" height="3.7" fill="#3c494b"/>
<rect x="725.5" y="467.16" width="15.200000000000045" height="1.4" fill="#ff2a2a"/>
<rect x="725.9" y="469.06" width="14.800000000000045" height="3.7" fill="url(#coilgray)"/>
<path d="M 741.5 469.56 L 757.1 468.26 L 757.1 472.06 L 741.5 472.66 Z" fill="url(#coilgray)"/>
<rect x="739.9000000000001" y="469.06" width="1.6" height="3.7" fill="#3c494b"/>
</svg>
<div style="position:absolute;box-sizing:border-box;left:417.00px;top:392.70px;width:29.00px;height:15.60px;background:#5f5f5f;border:none;border-radius:2px;display:flex;align-items:center;justify-content:center;padding-top:2.61px;font-size:5.8px;line-height:5.8px;font-weight:bold;color:#ffffff;letter-spacing:0px;white-space:pre;-webkit-text-stroke:0.25px #ffffff;">50,8 °C</div>
<div style="position:absolute;box-sizing:border-box;left:417.00px;top:481.00px;width:29.00px;height:15.60px;background:#5f5f5f;border:none;border-radius:2px;display:flex;align-items:center;justify-content:center;padding-top:2.61px;font-size:5.8px;line-height:5.8px;font-weight:bold;color:#ffffff;letter-spacing:0px;white-space:pre;-webkit-text-stroke:0.25px #ffffff;">48,6 °C</div>
<div style="position:absolute;box-sizing:border-box;left:726.60px;top:392.50px;width:29.00px;height:15.50px;background:#5f5f5f;border:none;border-radius:2px;display:flex;align-items:center;justify-content:center;padding-top:2.61px;font-size:5.8px;line-height:5.8px;font-weight:bold;color:#ffffff;letter-spacing:0px;white-space:pre;-webkit-text-stroke:0.25px #ffffff;">49,4 °C</div>
<div style="position:absolute;box-sizing:border-box;left:409.70px;top:356.60px;width:41.60px;height:15.60px;background:#33cc33;border:1.3px solid #b9b9b9;border-radius:2px;box-shadow:0 0 0 0.6px rgba(40,40,40,0.45);display:flex;align-items:center;justify-content:center;padding-top:2.61px;font-size:5.8px;line-height:5.8px;font-weight:bold;color:#000000;letter-spacing:0px;white-space:pre;-webkit-text-stroke:0.25px #000000;">TV/RQ: ano</div>
<div style="position:absolute;box-sizing:border-box;left:718.00px;top:356.60px;width:43.00px;height:15.60px;background:#33cc33;border:1.3px solid #b9b9b9;border-radius:2px;box-shadow:0 0 0 0.6px rgba(40,40,40,0.45);display:flex;align-items:center;justify-content:center;padding-top:2.61px;font-size:5.8px;line-height:5.8px;font-weight:bold;color:#000000;letter-spacing:0px;white-space:pre;-webkit-text-stroke:0.25px #000000;">TUV/RQ: ano</div>
<div style="position:absolute;box-sizing:border-box;left:287.00px;top:433.90px;width:29.70px;height:16.10px;background:#5f5f5f;border:1.3px solid #b9b9b9;border-radius:2px;box-shadow:0 0 0 0.6px rgba(40,40,40,0.45), inset 0 0 0 0.5px rgba(40,40,40,0.35);display:flex;align-items:center;justify-content:center;padding-top:2.61px;font-size:5.8px;line-height:5.8px;font-weight:bold;color:#ffffff;letter-spacing:0px;white-space:pre;-webkit-text-stroke:0.25px #ffffff;">58,7 °C</div>
<div style="position:absolute;box-sizing:border-box;left:257.00px;top:457.00px;width:29.00px;height:16.30px;background:#33cc33;border:1.3px solid #b9b9b9;border-radius:2px;box-shadow:0 0 0 0.6px rgba(40,40,40,0.45);display:flex;align-items:center;justify-content:center;padding-top:2.61px;font-size:5.8px;line-height:5.8px;font-weight:bold;color:#000000;letter-spacing:0px;white-space:pre;-webkit-text-stroke:0.25px #000000;">TČ: chod</div>
<div style="position:absolute;box-sizing:border-box;left:287.00px;top:457.00px;width:29.70px;height:16.30px;background:#5f5f5f;border:1.3px solid #b9b9b9;border-radius:2px;box-shadow:0 0 0 0.6px rgba(40,40,40,0.45), inset 0 0 0 0.5px rgba(40,40,40,0.35);display:flex;align-items:center;justify-content:center;padding-top:2.61px;font-size:5.8px;line-height:5.8px;font-weight:bold;color:#ffffff;letter-spacing:0px;white-space:pre;-webkit-text-stroke:0.25px #ffffff;">56 %</div>
<div style="position:absolute;box-sizing:border-box;left:317.20px;top:457.00px;width:29.20px;height:16.30px;background:#5f5f5f;border:1.3px solid #b9b9b9;border-radius:2px;box-shadow:0 0 0 0.6px rgba(40,40,40,0.45), inset 0 0 0 0.5px rgba(40,40,40,0.35);display:flex;align-items:center;justify-content:center;padding-top:2.61px;font-size:5.8px;line-height:5.8px;font-weight:bold;color:#ffffff;letter-spacing:0px;white-space:pre;-webkit-text-stroke:0.25px #ffffff;">TČ: ok</div>
<div style="position:absolute;box-sizing:border-box;left:287.00px;top:480.30px;width:29.70px;height:16.10px;background:#5f5f5f;border:1.3px solid #b9b9b9;border-radius:2px;box-shadow:0 0 0 0.6px rgba(40,40,40,0.45), inset 0 0 0 0.5px rgba(40,40,40,0.35);display:flex;align-items:center;justify-content:center;padding-top:2.61px;font-size:5.8px;line-height:5.8px;font-weight:bold;color:#ffffff;letter-spacing:0px;white-space:pre;-webkit-text-stroke:0.25px #ffffff;">47,9 °C</div>
<div style="position:absolute;left:129.00px;top:435.50px;width:400px;text-align:center;font-size:6.2px;line-height:6.2px;color:#fff;font-weight:bold;letter-spacing:0px;white-space:pre;">TČ</div>
<div style="position:absolute;left:129.00px;top:441.90px;width:400px;text-align:center;font-size:6.2px;line-height:6.2px;color:#fff;font-weight:bold;letter-spacing:0px;white-space:pre;">přívod</div>
<div style="position:absolute;left:129.00px;top:481.50px;width:400px;text-align:center;font-size:6.2px;line-height:6.2px;color:#fff;font-weight:bold;letter-spacing:0px;white-space:pre;">TČ</div>
<div style="position:absolute;left:129.00px;top:487.90px;width:400px;text-align:center;font-size:6.2px;line-height:6.2px;color:#fff;font-weight:bold;letter-spacing:0px;white-space:pre;">wat</div>
<svg style="position:absolute;left:340.30px;top:437.20px;overflow:visible" width="7.00" height="9.00"><polygon points="0,0 7.0,4.5 0,9.0" fill="#ff0000"/></svg>
<div style="position:absolute;left:351.40px;top:440.20px;width:42.60px;height:3.00px;background:linear-gradient(to right,#e3163f,#e48ea2 35%,#e8dcdf 60%,#e4899e 80%,#e3163f);"></div>
<svg style="position:absolute;left:340.30px;top:483.10px;overflow:visible" width="7.00" height="9.00"><polygon points="7.0,0 7.0,9.0 0,4.5" fill="#0a6cff"/></svg>
<div style="position:absolute;left:351.40px;top:486.10px;width:42.60px;height:3.00px;background:linear-gradient(to right,#3c72e0,#a4c0f0 40%,#e6eaf0 55%,#a0bcf0 75%,#3c72e0);"></div>
<div style="position:absolute;left:468.60px;top:396.50px;width:42.00px;height:3.00px;background:linear-gradient(to right,#e3163f,#e48ea2 35%,#e8dcdf 60%,#e4899e 80%,#e3163f);"></div>
<svg style="position:absolute;left:515.00px;top:393.50px;overflow:visible" width="7.20" height="9.00"><polygon points="0,0 7.2,4.5 0,9.0" fill="#ff0000"/></svg>
<div style="position:absolute;left:525.30px;top:395.90px;font-size:5.8px;line-height:5.8px;color:#fff;font-weight:bold;letter-spacing:0px;white-space:pre;">Rozdělovač</div>
<div style="position:absolute;box-sizing:border-box;left:471.10px;top:434.20px;width:29.70px;height:15.60px;background:#5f5f5f;border:1.3px solid #b9b9b9;border-radius:2px;box-shadow:0 0 0 0.6px rgba(40,40,40,0.45), inset 0 0 0 0.5px rgba(40,40,40,0.35);display:flex;align-items:center;justify-content:center;padding-top:2.61px;font-size:5.8px;line-height:5.8px;font-weight:bold;color:#ffffff;letter-spacing:0px;white-space:pre;-webkit-text-stroke:0.25px #ffffff;">49,7 °C</div>
<div style="position:absolute;left:313.75px;top:435.80px;width:400px;text-align:center;font-size:6.0px;line-height:6.0px;color:#fff;font-weight:bold;letter-spacing:0px;white-space:pre;">Průměr</div>
<div style="position:absolute;left:313.75px;top:443.20px;width:400px;text-align:center;font-size:6.0px;line-height:6.0px;color:#fff;font-weight:bold;letter-spacing:0px;white-space:pre;">H/D</div>
<div style="position:absolute;box-sizing:border-box;left:527.00px;top:434.20px;width:29.80px;height:15.60px;background:#5f5f5f;border:1.3px solid #b9b9b9;border-radius:2px;box-shadow:0 0 0 0.6px rgba(40,40,40,0.45), inset 0 0 0 0.5px rgba(40,40,40,0.35);display:flex;align-items:center;justify-content:center;padding-top:2.61px;font-size:5.8px;line-height:5.8px;font-weight:bold;color:#33cc33;letter-spacing:0px;white-space:pre;-webkit-text-stroke:0.25px #33cc33;">50,0 °C</div>
<div style="position:absolute;left:468.60px;top:486.30px;width:42.00px;height:3.00px;background:linear-gradient(to right,#3c72e0,#a4c0f0 40%,#e6eaf0 55%,#a0bcf0 75%,#3c72e0);"></div>
<svg style="position:absolute;left:514.40px;top:483.30px;overflow:visible" width="7.20" height="9.00"><polygon points="7.2,0 7.2,9.0 0,4.5" fill="#0a6cff"/></svg>
<div style="position:absolute;left:525.00px;top:485.50px;font-size:5.8px;line-height:5.8px;color:#fff;font-weight:bold;letter-spacing:0px;white-space:pre;">Sběrač</div>
<div style="position:absolute;left:431.50px;top:439.50px;width:400px;text-align:center;font-size:5.8px;line-height:5.8px;color:#fff;font-weight:bold;letter-spacing:0px;white-space:pre;">Rozdělovač</div>
<div style="position:absolute;left:430.50px;top:446.10px;width:400px;text-align:center;font-size:5.8px;line-height:5.8px;color:#fff;font-weight:bold;letter-spacing:0px;white-space:pre;">TO4</div>
<svg style="position:absolute;left:649.85px;top:439.50px;overflow:visible" width="6.50" height="9.00"><polygon points="0,0 6.5,4.5 0,9.0" fill="#ff0000"/></svg>
<div style="position:absolute;left:661.00px;top:442.50px;width:42.75px;height:3.00px;background:linear-gradient(to right,#e3163f,#e48ea2 35%,#e8dcdf 60%,#e4899e 80%,#e3163f);"></div>
<div style="position:absolute;left:434.50px;top:484.90px;width:400px;text-align:center;font-size:5.8px;line-height:5.8px;color:#fff;font-weight:bold;letter-spacing:0px;white-space:pre;">Sběrač</div>
<svg style="position:absolute;left:651.35px;top:483.30px;overflow:visible" width="6.50" height="9.00"><polygon points="6.5,0 6.5,9.0 0,4.5" fill="#0a6cff"/></svg>
<div style="position:absolute;left:661.50px;top:486.30px;width:42.25px;height:3.00px;background:linear-gradient(to right,#3c72e0,#a4c0f0 40%,#e6eaf0 55%,#a0bcf0 75%,#3c72e0);"></div>
<div style="position:absolute;left:778.30px;top:396.50px;width:42.00px;height:3.00px;background:linear-gradient(to right,#e3163f,#e48ea2 35%,#e8dcdf 60%,#e4899e 80%,#e3163f);"></div>
<svg style="position:absolute;left:824.30px;top:393.50px;overflow:visible" width="7.00" height="9.00"><polygon points="0,0 7.0,4.5 0,9.0" fill="#ff0000"/></svg>
<div style="position:absolute;left:641.00px;top:392.90px;width:400px;text-align:center;font-size:5.8px;line-height:5.8px;color:#fff;font-weight:bold;letter-spacing:0px;white-space:pre;">Teplá</div>
<div style="position:absolute;left:641.00px;top:399.50px;width:400px;text-align:center;font-size:5.8px;line-height:5.8px;color:#fff;font-weight:bold;letter-spacing:0px;white-space:pre;">voda</div>
<div style="position:absolute;box-sizing:border-box;left:781.25px;top:424.70px;width:28.75px;height:15.00px;background:#3cb06e;border:1.3px solid #b9b9b9;border-radius:2px;box-shadow:0 0 0 0.6px rgba(40,40,40,0.45);display:flex;align-items:center;justify-content:center;padding-top:2.61px;font-size:5.8px;line-height:5.8px;font-weight:bold;color:#ffffff;letter-spacing:0px;white-space:pre;-webkit-text-stroke:0.25px #ffffff;">50,0 °C</div>
<div style="position:absolute;box-sizing:border-box;left:781.25px;top:441.90px;width:28.75px;height:15.00px;background:#3cb06e;border:1.3px solid #b9b9b9;border-radius:2px;box-shadow:0 0 0 0.6px rgba(40,40,40,0.45);display:flex;align-items:center;justify-content:center;padding-top:2.61px;font-size:5.8px;line-height:5.8px;font-weight:bold;color:#ffffff;letter-spacing:0px;white-space:pre;-webkit-text-stroke:0.25px #ffffff;">55,0 °C</div>
<div style="position:absolute;left:629.70px;top:426.70px;width:400px;text-align:center;font-size:5.8px;line-height:5.8px;color:#fff;font-weight:bold;letter-spacing:0px;white-space:pre;">Žádaná</div>
<div style="position:absolute;left:629.70px;top:434.00px;width:400px;text-align:center;font-size:5.8px;line-height:5.8px;color:#fff;font-weight:bold;letter-spacing:0px;white-space:pre;">teplota Min.</div>
<div style="position:absolute;left:629.70px;top:443.90px;width:400px;text-align:center;font-size:5.8px;line-height:5.8px;color:#fff;font-weight:bold;letter-spacing:0px;white-space:pre;">Žádaná</div>
<div style="position:absolute;left:629.70px;top:451.20px;width:400px;text-align:center;font-size:5.8px;line-height:5.8px;color:#fff;font-weight:bold;letter-spacing:0px;white-space:pre;">teplota Max.</div>
<div style="position:absolute;left:778.30px;top:486.30px;width:42.00px;height:3.00px;background:linear-gradient(to right,#3c72e0,#a4c0f0 40%,#e6eaf0 55%,#a0bcf0 75%,#3c72e0);"></div>
<svg style="position:absolute;left:790.70px;top:478.50px;" width="18.60" height="18.60" viewBox="-9.3 -9.3 18.6 18.6"><circle cx="0" cy="0" r="8.0" fill="#ffffff" stroke="#202020" stroke-width="0.9"/><polygon points="0.00,-7.72 6.68,3.86 -6.68,3.86" fill="#000"/></svg>
<svg style="position:absolute;left:823.50px;top:483.30px;overflow:visible" width="7.00" height="9.00"><polygon points="7.0,0 7.0,9.0 0,4.5" fill="#0a6cff"/></svg>
<div style="position:absolute;left:643.00px;top:482.20px;width:400px;text-align:center;font-size:5.8px;line-height:5.8px;color:#fff;font-weight:bold;letter-spacing:0px;white-space:pre;">Studená</div>
<div style="position:absolute;left:643.00px;top:488.80px;width:400px;text-align:center;font-size:5.8px;line-height:5.8px;color:#fff;font-weight:bold;letter-spacing:0px;white-space:pre;">voda</div>
<div style="position:absolute;box-sizing:border-box;left:572.00px;top:483.40px;width:28.30px;height:15.60px;background:#5f5f5f;border:1.3px solid #b9b9b9;border-radius:2px;box-shadow:0 0 0 0.6px rgba(40,40,40,0.45), inset 0 0 0 0.5px rgba(40,40,40,0.35);display:flex;align-items:center;justify-content:center;padding-top:2.61px;font-size:5.8px;line-height:5.8px;font-weight:bold;color:#ffffff;letter-spacing:0px;white-space:pre;-webkit-text-stroke:0.25px #ffffff;">KO: ok</div>
<div style="position:absolute;box-sizing:border-box;left:557.30px;top:500.10px;width:28.00px;height:16.10px;background:#5f5f5f;border:1.3px solid #b9b9b9;border-radius:2px;box-shadow:0 0 0 0.6px rgba(40,40,40,0.45), inset 0 0 0 0.5px rgba(40,40,40,0.35);display:flex;align-items:center;justify-content:center;padding-top:2.61px;font-size:5.8px;line-height:5.8px;font-weight:bold;color:#ffffff;letter-spacing:0px;white-space:pre;-webkit-text-stroke:0.25px #ffffff;">KO: stop</div>
<div style="position:absolute;box-sizing:border-box;left:586.80px;top:500.10px;width:28.50px;height:16.10px;background:#5f5f5f;border:1.3px solid #b9b9b9;border-radius:2px;box-shadow:0 0 0 0.6px rgba(40,40,40,0.45), inset 0 0 0 0.5px rgba(40,40,40,0.35);display:flex;align-items:center;justify-content:center;padding-top:2.61px;font-size:5.8px;line-height:5.8px;font-weight:bold;color:#ffffff;letter-spacing:0px;white-space:pre;-webkit-text-stroke:0.25px #ffffff;">0 %</div>
<div style="position:absolute;box-sizing:border-box;left:528.30px;top:516.70px;width:29.00px;height:15.60px;background:#5f5f5f;border:1.3px solid #b9b9b9;border-radius:2px;box-shadow:0 0 0 0.6px rgba(40,40,40,0.45), inset 0 0 0 0.5px rgba(40,40,40,0.35);display:flex;align-items:center;justify-content:center;padding-top:2.61px;font-size:5.8px;line-height:5.8px;font-weight:bold;color:#ffffff;letter-spacing:0px;white-space:pre;-webkit-text-stroke:0.25px #ffffff;">48,4 °C</div>
<div style="position:absolute;box-sizing:border-box;left:616.40px;top:516.70px;width:29.00px;height:15.60px;background:#5f5f5f;border:1.3px solid #b9b9b9;border-radius:2px;box-shadow:0 0 0 0.6px rgba(40,40,40,0.45), inset 0 0 0 0.5px rgba(40,40,40,0.35);display:flex;align-items:center;justify-content:center;padding-top:2.61px;font-size:5.8px;line-height:5.8px;font-weight:bold;color:#ffffff;letter-spacing:0px;white-space:pre;-webkit-text-stroke:0.25px #ffffff;">51,8 °C</div>
<svg style="position:absolute;left:516.90px;top:519.95px;overflow:visible" width="6.20" height="8.50"><polygon points="6.2,0 6.2,8.5 0,4.25" fill="#ff0000"/></svg>
<svg style="position:absolute;left:578.90px;top:519.95px;overflow:visible" width="6.20" height="8.50"><polygon points="6.2,0 6.2,8.5 0,4.25" fill="#ff0000"/></svg>
<svg style="position:absolute;left:590.70px;top:519.95px;overflow:visible" width="6.20" height="8.50"><polygon points="0,0 6.2,4.25 0,8.5" fill="#ff0000"/></svg>
<svg style="position:absolute;left:651.80px;top:519.40px;overflow:visible" width="7.20" height="9.40"><polygon points="0,0 7.2,4.7 0,9.4" fill="#ff0000"/></svg>
<div style="position:absolute;left:297.00px;top:520.70px;width:400px;text-align:center;font-size:5.8px;line-height:5.8px;color:#fff;font-weight:bold;letter-spacing:0px;white-space:pre;">Kotel</div>
<div style="position:absolute;left:297.00px;top:527.00px;width:400px;text-align:center;font-size:5.8px;line-height:5.8px;color:#fff;font-weight:bold;letter-spacing:0px;white-space:pre;">do TV</div>
<div style="position:absolute;left:476.60px;top:520.70px;width:400px;text-align:center;font-size:5.8px;line-height:5.8px;color:#fff;font-weight:bold;letter-spacing:0px;white-space:pre;">Kotel</div>
<div style="position:absolute;left:476.60px;top:527.00px;width:400px;text-align:center;font-size:5.8px;line-height:5.8px;color:#fff;font-weight:bold;letter-spacing:0px;white-space:pre;">do TUV</div>
<div style="position:absolute;left:1021.00px;top:15.00px;width:1.00px;height:542.00px;background:#6e6e6e;"></div>
<div style="position:absolute;left:1022.00px;top:0.00px;width:1.20px;height:576.00px;background:#a6a6a6;"></div>
<div style="position:absolute;left:1023.20px;top:0.00px;width:0.80px;height:576.00px;background:#dedede;"></div>
<svg style="position:absolute;left:1010px;top:520px;" width="14" height="29" viewBox="0 0 14 29"><path d="M 0.5 3 Q 0.5 1.2 2.3 1.2 L 14 1.2 L 14 28 L 11.5 28 L 1.2 21.5 L 0.5 20.5 Z" fill="#5a5a5a" stroke="#444" stroke-width="0.6"/><rect x="2.8" y="3.6" width="11.2" height="10.8" fill="#0b4588"/><circle cx="8.3" cy="9" r="4.3" fill="#8c9cae"/><path d="M 4.6 9 L 6.6 7.4 L 6.6 10.6 Z M 12 9 L 10 7.4 L 10 10.6 Z" fill="#0b3c78"/><rect x="6.3" y="8.5" width="4" height="1" fill="#0b3c78"/></svg>
<div style="position:absolute;left:0.00px;top:556.30px;width:1022.00px;height:19.70px;background:#f0f0f0;"></div>
<div style="position:absolute;left:0.00px;top:556.30px;width:1022.00px;height:0.90px;background:#fafafa;"></div>
<div style="position:absolute;left:0.00px;top:573.40px;width:1022.00px;height:1.60px;background:#a9a9a9;"></div>
<div style="position:absolute;left:0.00px;top:575.00px;width:1022.00px;height:1.00px;background:#e2e2e2;"></div>
<div style="position:absolute;left:856.50px;top:557.50px;width:14.30px;height:15.70px;background:#d7d7d7;"></div>
<div style="position:absolute;left:872.20px;top:557.50px;width:15.10px;height:15.70px;background:#d7d7d7;"></div>
<div style="position:absolute;left:889.30px;top:557.50px;width:53.20px;height:15.70px;background:#d7d7d7;"></div>
<div style="position:absolute;left:943.90px;top:557.50px;width:58.40px;height:15.70px;background:#d7d7d7;"></div>
<svg style="position:absolute;left:862.20px;top:562.75px;overflow:visible" width="3.20" height="5.50"><polygon points="3.2,0 3.2,5.5 0,2.75" fill="#9a9a9a"/></svg>
<svg style="position:absolute;left:878.20px;top:562.75px;overflow:visible" width="3.20" height="5.50"><polygon points="0,0 3.2,2.75 0,5.5" fill="#9a9a9a"/></svg>
<svg style="position:absolute;left:896px;top:558px;" width="16" height="14" viewBox="0 0 16 14"><path d="M 1 7 L 5.5 11.5 L 14.5 2" fill="none" stroke="#b5b5b5" stroke-width="3"/></svg>
<div style="position:absolute;left:912.60px;top:562.50px;font-size:6.6px;line-height:6.6px;color:#858585;font-weight:normal;letter-spacing:0px;white-space:pre;transform:scaleX(0.93);transform-origin:0 50%;">Kvitovat</div>
<svg style="position:absolute;left:950px;top:558px;" width="16" height="15" viewBox="0 0 16 15"><rect x="1" y="1" width="10" height="12" rx="1" fill="#c6c6c6" stroke="#aaa" stroke-width="0.8"/><rect x="5.3" y="3" width="1.6" height="5" fill="#8a8a8a"/><rect x="5.3" y="9" width="1.6" height="1.6" fill="#8a8a8a"/><path d="M 7 9 L 10 12 L 15 6" fill="none" stroke="#b0b0b0" stroke-width="2"/></svg>
<div style="position:absolute;left:965.40px;top:562.50px;font-size:6.6px;line-height:6.6px;color:#858585;font-weight:normal;letter-spacing:0px;white-space:pre;transform:scaleX(0.87);transform-origin:0 50%;">Kvitovat vše</div>
<div style="position:absolute;left:1004.90px;top:557.90px;width:14.60px;height:14.90px;box-sizing:border-box;border:1.4px solid #1a6fd0;background:#eef2f6;"></div>
<svg style="position:absolute;left:1007px;top:560px;" width="11" height="11" viewBox="0 0 11 11"><path d="M 1.5 2 Q 5 0 9.5 2 L 10 8 Q 5.5 11 1 8.5 Z" fill="#e8d820" stroke="#6a6a20" stroke-width="0.6"/><path d="M 3 3.5 Q 5.5 2.5 8 4 L 7 6.5 Q 5 8 3.2 6.8 Z" fill="#2a2a2a"/><path d="M 4 4.6 L 6.8 4.6 L 6.2 6 L 4.2 6 Z" fill="#7ac84a"/><rect x="8.2" y="7" width="2" height="2.5" fill="#3aa8e0"/></svg>
<div style="position:absolute;left:0.00px;top:0.00px;width:1022.00px;height:14.80px;background:#ffffff;"></div>
<div style="position:absolute;left:0.00px;top:0.00px;width:1024.00px;height:0.70px;background:#9a9a9a;"></div>
<svg style="position:absolute;left:3px;top:2px;" width="10" height="11" viewBox="0 0 10 11"><path d="M 0.5 0.8 L 9.5 0.8 L 9.5 6 Q 9.5 10 5 10.6 Q 0.5 10 0.5 6 Z" fill="#f2cf1c" stroke="#7a6a20" stroke-width="0.6"/><path d="M 2.5 4 L 5 6.8 L 8 3" fill="none" stroke="#1d1d1d" stroke-width="1.5"/></svg>
<div style="position:absolute;left:14.80px;top:4.10px;font-size:6.6px;line-height:6.6px;color:#1a1a2a;font-weight:normal;letter-spacing:0px;white-space:pre;transform:scaleX(0.912);transform-origin:0 50%;">Reliance 4 Control Server (4.8.2 Pre-release, Rev. 36727) - Sportovní hala Pohořelice / ELG ELECTRIC s.r.o. &amp; GEOVAP, spol. s r.o. (c) 2019 - PC</div>
<div style="position:absolute;left:957.50px;top:7.00px;width:6.00px;height:0.80px;background:#222;"></div>
<div style="position:absolute;left:983.00px;top:4.50px;width:5.40px;height:5.40px;box-sizing:border-box;border:0.7px solid #c4c4c4;"></div>
<svg style="position:absolute;left:1006px;top:3px;" width="8" height="8" viewBox="0 0 8 8"><path d="M 1.3 1.1 L 7 6.8 M 7 1.1 L 1.3 6.8" stroke="#222" stroke-width="0.9"/></svg>
</div></body></html>
